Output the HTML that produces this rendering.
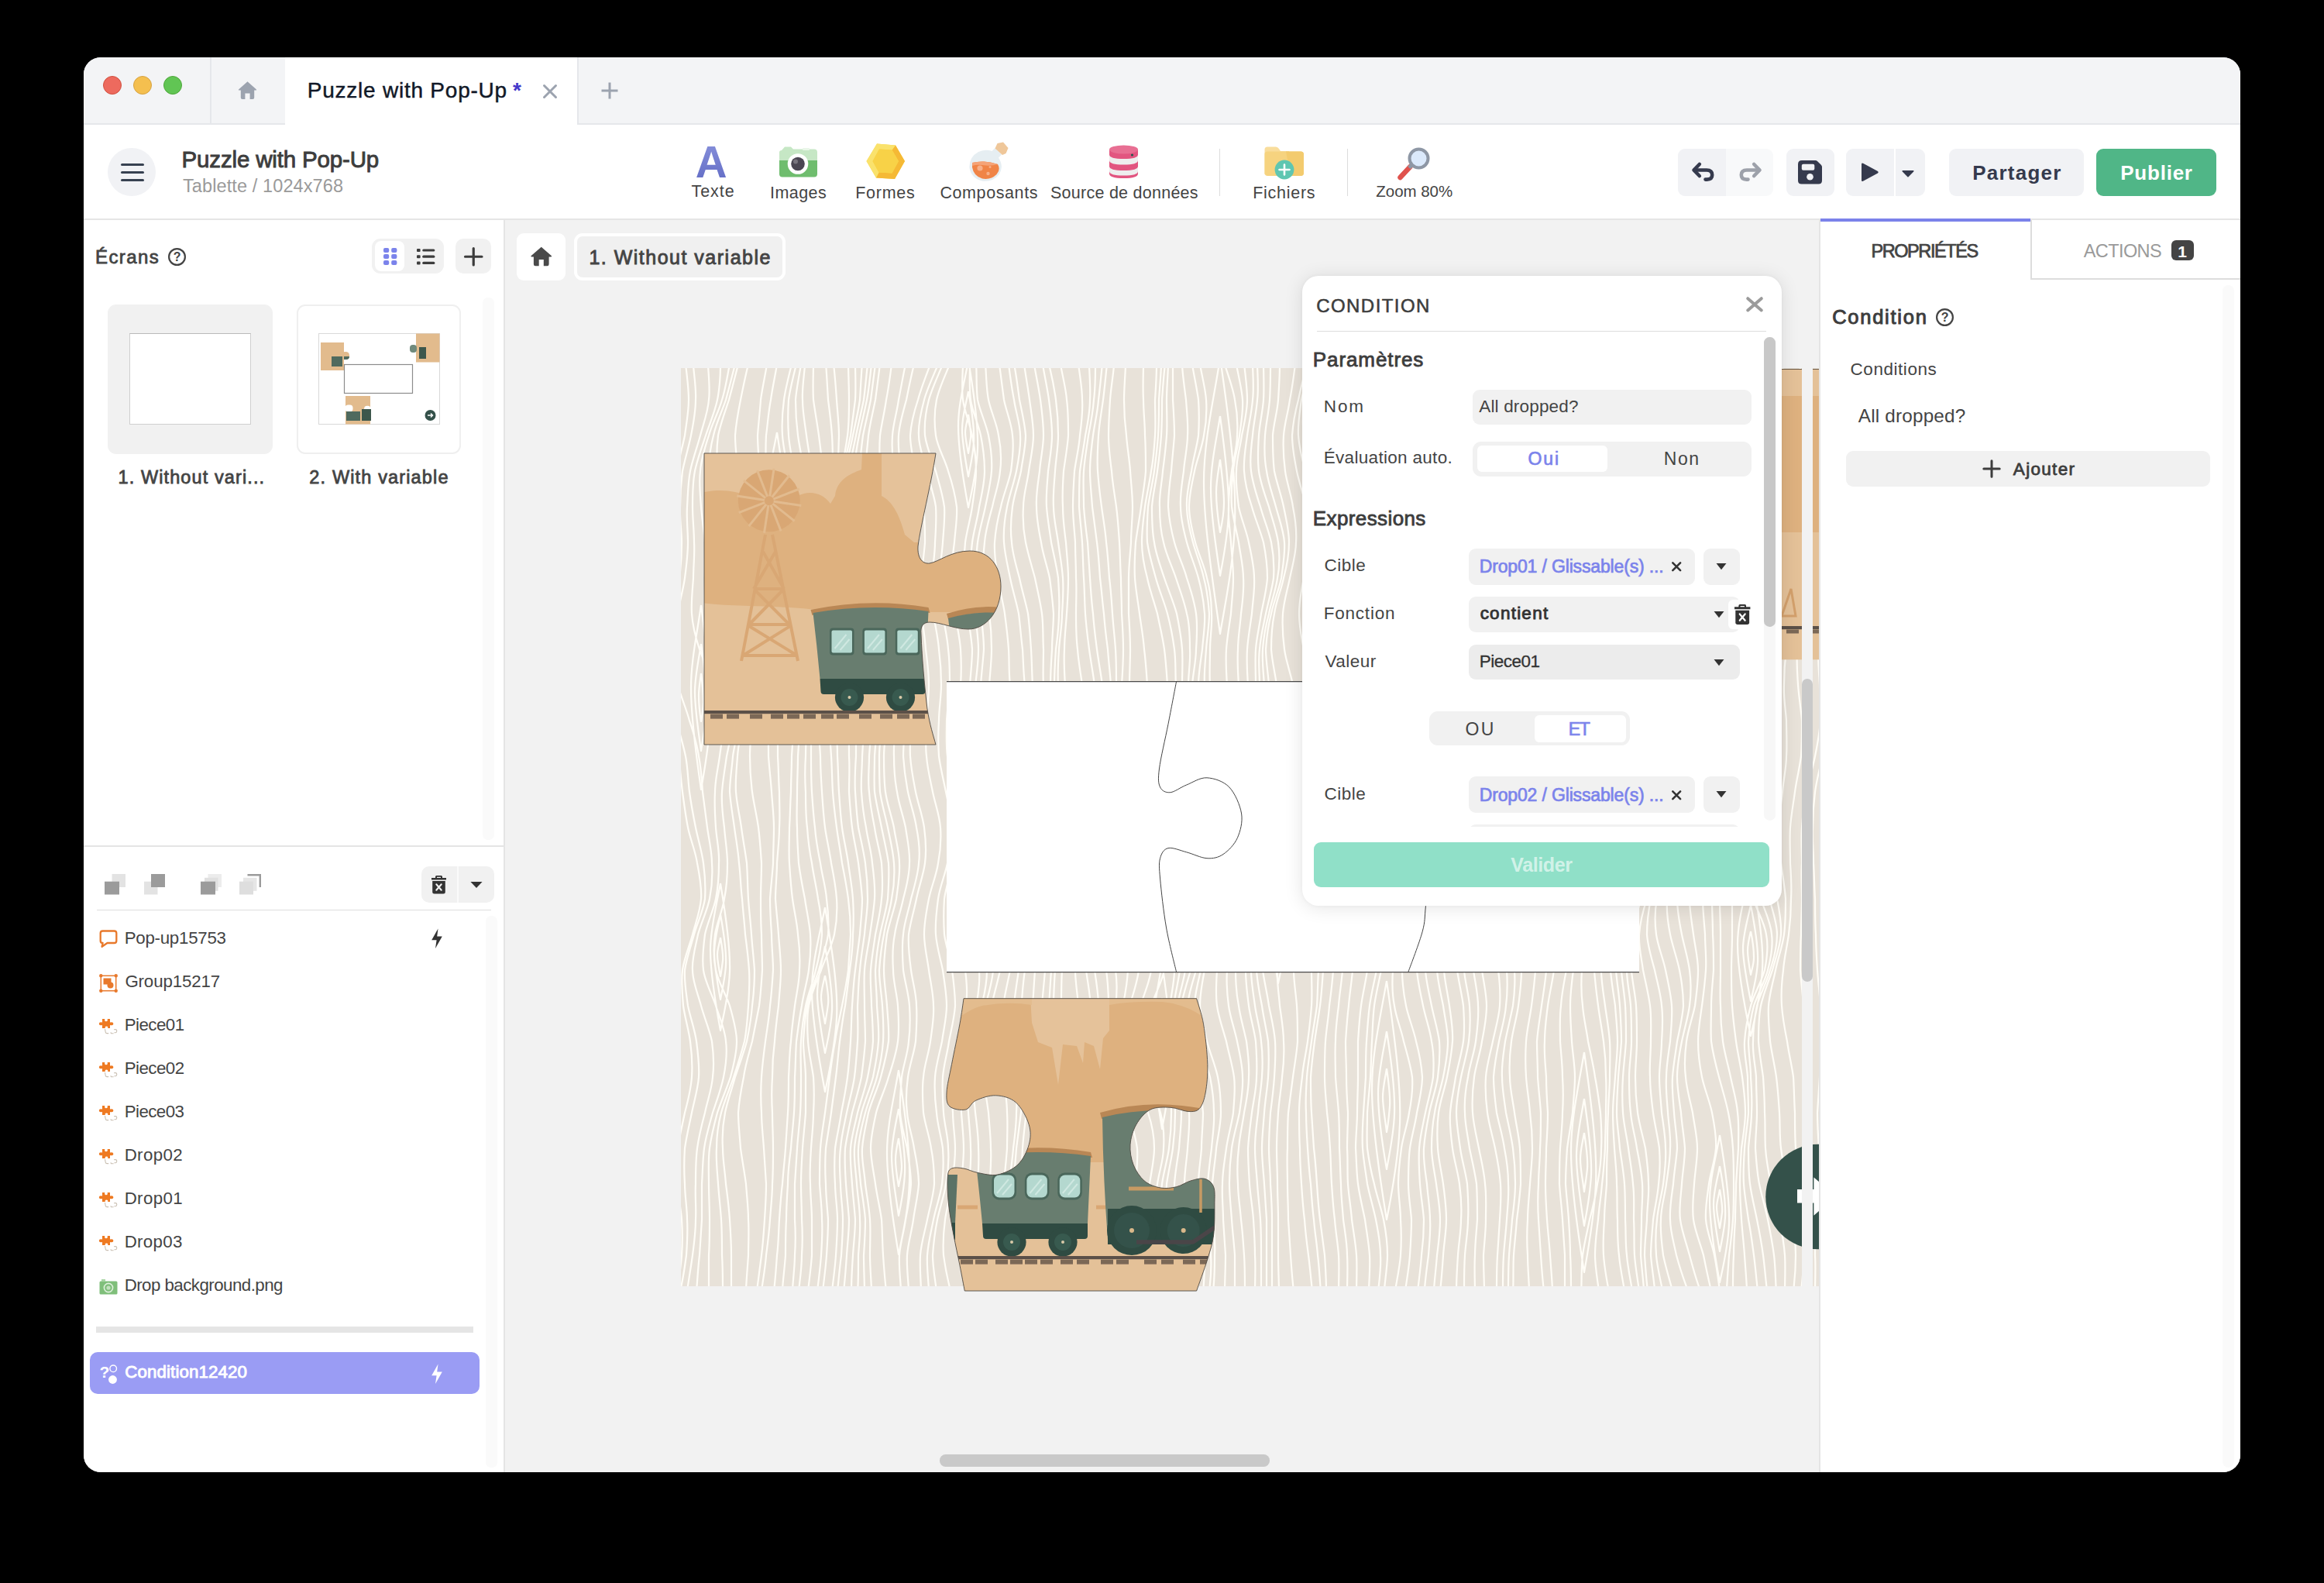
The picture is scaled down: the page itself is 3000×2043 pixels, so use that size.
<!DOCTYPE html>
<html lang="fr"><head><meta charset="utf-8"><title>Puzzle with Pop-Up</title>
<style>
html,body{margin:0;padding:0;background:#000;}
body{width:3000px;height:2043px;position:relative;overflow:hidden;font-family:"Liberation Sans",sans-serif;}
.a{position:absolute;box-sizing:border-box;}
.t{position:absolute;white-space:nowrap;line-height:1;}
svg{display:block;overflow:visible}
#win{position:absolute;left:0;top:0;width:3000px;height:2043px;clip-path:inset(74px 108px 143px 108px round 22px);background:#fff;}
</style></head><body><div id="win">
<div class="a" style="left:108px;top:74px;width:2784px;height:87px;background:#f3f4f6;"></div>
<div class="a" style="left:108px;top:159px;width:2784px;height:2px;background:#e5e7eb;"></div>
<div class="a" style="left:271px;top:74px;width:2px;height:87px;background:#e5e7eb;"></div>
<div class="a" style="left:368px;top:74px;width:379px;height:87px;background:#e5e7eb;"></div>
<div class="a" style="left:368px;top:74px;width:377px;height:87px;background:#fff;"></div>
<div class="a" style="left:133px;top:98.4px;width:24px;height:24px;background:#ed6a5e;border-radius:12px;border:1px solid #d1503f;"></div>
<div class="a" style="left:171.6px;top:98.4px;width:24px;height:24px;background:#f4bf4f;border-radius:12px;border:1px solid #d6a243;"></div>
<div class="a" style="left:210.6px;top:98.4px;width:24px;height:24px;background:#61c554;border-radius:12px;border:1px solid #4fa73b;"></div>
<svg class="a" style="left:307px;top:104px;" width="25" height="25" viewBox="0 0 25 25"><path d="M12.5 1.2 L24 11.5 Q24.6 12.3 23.6 12.6 H21.2 V22 Q21.2 24 19.2 24 H15.6 V16.4 H9.4 V24 H5.8 Q3.8 24 3.8 22 V12.6 H1.4 Q0.4 12.3 1 11.5 Z" fill="#9ca3af"/></svg>
<span class="t" style="top:102.80px;font-size:28px;color:#111827;-webkit-text-stroke:0.45px #111827;letter-spacing:0.772px;left:396.70px;">Puzzle with Pop-Up</span>
<span class="t" style="top:103.30px;font-size:28px;color:#4338ca;font-weight:700;left:661.92px;">*</span>
<svg class="a" style="left:701px;top:109px;" width="18" height="18" viewBox="0 0 18 18"><path d="M1.5 1.5 L16.5 16.5 M16.5 1.5 L1.5 16.5" stroke="#9ca3af" stroke-width="3" stroke-linecap="round" fill="none"/></svg>
<svg class="a" style="left:776px;top:105.5px;" width="22" height="22" viewBox="0 0 22 22"><path d="M11 0.5 V21.5 M0.5 11 H21.5" stroke="#9ca3af" stroke-width="3" fill="none"/></svg>
<div class="a" style="left:108px;top:161px;width:2784px;height:121px;background:#fff;"></div>
<div class="a" style="left:108px;top:282px;width:2784px;height:2px;background:#e5e5e5;"></div>
<div class="a" style="left:139px;top:191px;width:62px;height:62px;background:#f1f2f5;border-radius:31px;"></div>
<div class="a" style="left:155.5px;top:210.8px;width:30px;height:3px;background:#374151;border-radius:1.5px;"></div>
<div class="a" style="left:155.5px;top:220.9px;width:30px;height:3px;background:#374151;border-radius:1.5px;"></div>
<div class="a" style="left:155.5px;top:231px;width:30px;height:3px;background:#374151;border-radius:1.5px;"></div>
<span class="t" style="top:191.43px;font-size:29.5px;color:#3d3d3d;-webkit-text-stroke:0.9px #3d3d3d;letter-spacing:-0.163px;left:234.58px;">Puzzle with Pop-Up</span>
<span class="t" style="top:228.71px;font-size:23.5px;color:#9a9a9a;letter-spacing:0.106px;left:235.97px;">Tablette / 1024x768</span>
<svg class="a" style="left:890px;top:180px" width="60" height="56" viewBox="0 0 60 56"><defs><linearGradient id="ga" x1="0" y1="0" x2="0" y2="1"><stop offset="0" stop-color="#8a93dd"/><stop offset="1" stop-color="#5f69c3"/></linearGradient></defs><text x="28.2" y="48.5" text-anchor="middle" font-family="Liberation Sans,sans-serif" font-weight="700" font-size="56.5" fill="url(#ga)">A</text></svg>
<span class="t" style="top:236.80px;font-size:21.5px;color:#444;letter-spacing:0.937px;left:892.52px;">Texte</span>
<svg class="a" style="left:1004px;top:186px;" width="54" height="46" viewBox="0 0 54 46"><path d="M5 8 L9 3.5 H17 L20 6.5 H47 Q51 6.5 51 10.5 V22 H2 V10.5 Q2 8 5 8 Z" fill="#c6e7c5"/><rect x="32" y="5" width="9" height="3" rx="1" fill="#e9f6e8"/><path d="M2 21 H51 V38.5 Q51 42.5 47 42.5 H6 Q2 42.5 2 38.5 Z" fill="#6fbd6e"/><circle cx="26" cy="25.5" r="13.3" fill="#fff"/><circle cx="26" cy="25.5" r="8.8" fill="#4a4652"/><circle cx="23" cy="22.5" r="3" fill="#77737d"/></svg>
<span class="t" style="top:239.10px;font-size:21.5px;color:#444;letter-spacing:0.449px;left:994.02px;">Images</span>
<svg class="a" style="left:1116px;top:183px;" width="54" height="52" viewBox="0 0 54 52"><path d="M16 2.5 L40 4.5 L52 25 L39 48 L15 46.5 L2.5 25 Z" fill="#f9d549"/><path d="M40 4.5 L52 25 L39 48 L15 46.5 L18.5 39.5 L35.5 40.5 L44 25 L35.5 10.5 Z" fill="#f5b935"/><path d="M16 2.5 L40 4.5 L35.5 10.5 L19 9.5 L10.5 25 L18.5 39.5 L15 46.5 L2.5 25 Z" fill="#fae26c"/><path d="M19 9.5 L35.5 10.5 L44 25 L35.5 40.5 L18.5 39.5 L10.5 25 Z" fill="#f8d247"/></svg>
<span class="t" style="top:239.10px;font-size:21.5px;color:#444;letter-spacing:0.733px;left:1104.24px;">Formes</span>
<svg class="a" style="left:1248px;top:182px;" width="56" height="54" viewBox="0 0 56 54"><path d="M36.5 9 L45 17.5 L41 21.5 Q48.5 33 41.5 43.5 Q33 53.5 19.5 51.5 Q6 48 3.5 35 Q2.5 21 15 14 Q24 10 32.5 13 Z" fill="#e6eef2"/><path d="M7 28 Q22 24 40 30 Q44 37 38.5 43 Q31 50.5 20 48.5 Q9 45.5 7 34 Z" fill="#f08447"/><path d="M7 28 Q22 24 40 30 Q30 33 20 31 Q12 30 7.3 32 Z" fill="#f5a377"/><circle cx="17" cy="35" r="3.6" fill="#f6b08a"/><circle cx="27.5" cy="42" r="2.2" fill="#f6b08a"/><circle cx="30" cy="33.5" r="1.5" fill="#f6b08a"/><path d="M39.5 3 L47 1.5 L53.5 9 L50.5 16 L46 18 L36.5 9.5 Z" fill="#efc79a"/></svg>
<span class="t" style="top:239.10px;font-size:21.5px;color:#444;letter-spacing:0.596px;left:1213.41px;">Composants</span>
<svg class="a" style="left:1430px;top:185px;" width="42" height="48" viewBox="0 0 42 48"><path d="M2 8 V39 Q2 45 20.5 45 Q39 45 39 39 V8 Z" fill="#e25580"/><path d="M2 14.5 Q2 20 20.5 20 Q39 20 39 14.5 V22 Q39 27.5 20.5 27.5 Q2 27.5 2 22 Z" fill="#eeeeee"/><path d="M2 29.5 Q2 35 20.5 35 Q39 35 39 29.5 V36 Q39 41.5 20.5 41.5 Q2 41.5 2 36 Z" fill="#eeeeee"/><ellipse cx="20.5" cy="8" rx="18.5" ry="5.5" fill="#e86f93"/><circle cx="31.5" cy="15" r="1.6" fill="#1d5b4c"/></svg>
<span class="t" style="top:239.10px;font-size:21.5px;color:#444;letter-spacing:0.254px;left:1356.02px;">Source de données</span>
<div class="a" style="left:1573.7px;top:192px;width:1.5px;height:61px;background:#dcdcdc;"></div>
<svg class="a" style="left:1630px;top:187px;" width="56" height="47" viewBox="0 0 56 47"><path d="M2.5 6 Q2.5 2.5 6 2.5 H17 Q19.5 2.5 21 5 L23 8 H34 V38 H2.5 Z" fill="#f9dd9c"/><path d="M2.5 12 Q2.5 8.5 6 8.5 H49 Q53 8.5 53 12.5 V36 Q53 40 49 40 H6.5 Q2.5 40 2.5 36 Z" fill="#f6d37f"/><path d="M30 8.5 H49 Q53 8.5 53 12.5 V36 Q53 40 49 40 H36 Z" fill="#f3cb6e"/><circle cx="28" cy="32" r="12.4" fill="#5fc6b1"/><path d="M28 25.5 V38.5 M21.5 32 H34.5" stroke="#fff" stroke-width="2.6" stroke-linecap="round"/></svg>
<span class="t" style="top:239.10px;font-size:21.5px;color:#444;letter-spacing:0.725px;left:1617.24px;">Fichiers</span>
<div class="a" style="left:1738.7px;top:192px;width:1.5px;height:61px;background:#dcdcdc;"></div>
<svg class="a" style="left:1802px;top:188px;" width="48" height="47" viewBox="0 0 48 47"><path d="M5.5 41 L18.5 27" stroke="#e0524d" stroke-width="6.5" stroke-linecap="round"/><path d="M17 28.5 L20 25.5" stroke="#8e97a5" stroke-width="5"/><circle cx="29.5" cy="16.5" r="12" fill="#dbe9fb" stroke="#8e97a5" stroke-width="4"/></svg>
<span class="t" style="top:236.65px;font-size:20.5px;color:#444;letter-spacing:-0.037px;left:1776.35px;">Zoom 80%</span>
<div class="a" style="left:2166.3px;top:192px;width:123.1px;height:60.6px;background:#f8f9fa;border-radius:9px;"></div>
<div class="a" style="left:2166.3px;top:192px;width:61.7px;height:60.6px;background:#f1f2f5;border-radius:9px 0 0 9px;"></div>
<svg class="a" style="left:2181px;top:206px;" width="36" height="31" viewBox="0 0 36 31"><path d="M12.8 6 L5.5 13.5 L12.8 21" fill="none" stroke="#353a4d" stroke-width="4.6" stroke-linecap="round" stroke-linejoin="round"/><path d="M6.5 13.5 H22 Q29.2 13.5 29.2 19.8 Q29.2 25.6 22.5 25.6 H20.5" fill="none" stroke="#353a4d" stroke-width="4.6" stroke-linecap="round"/></svg>
<svg class="a" style="left:2241px;top:206px;" width="36" height="31" viewBox="0 0 36 31"><path d="M23.2 6 L30.5 13.5 L23.2 21" fill="none" stroke="#9da1aa" stroke-width="4.6" stroke-linecap="round" stroke-linejoin="round"/><path d="M29.5 13.5 H14 Q6.8 13.5 6.8 19.8 Q6.8 25.6 13.5 25.6 H15.5" fill="none" stroke="#9da1aa" stroke-width="4.6" stroke-linecap="round"/></svg>
<div class="a" style="left:2306px;top:192px;width:62px;height:60.6px;background:#f1f2f5;border-radius:9px;"></div>
<svg class="a" style="left:2321px;top:207px;" width="32" height="31" viewBox="0 0 32 31"><path d="M5 0 H22.5 Q24 0 25.2 1.2 L29.8 5.8 Q31 7 31 8.5 V26 Q31 30.6 26.4 30.6 H4.6 Q0 30.6 0 26 V5 Q0 0 5 0 Z" fill="#353a4d"/><rect x="4.8" y="4.8" width="16.5" height="8" rx="2" fill="#f1f2f5"/><circle cx="15.5" cy="21.3" r="4.3" fill="#f1f2f5"/></svg>
<div class="a" style="left:2383px;top:192px;width:101.6px;height:60.6px;background:#f1f2f5;border-radius:9px;"></div>
<div class="a" style="left:2444.5px;top:192px;width:2px;height:60.6px;background:#fff;"></div>
<svg class="a" style="left:2402px;top:209px;" width="25" height="27" viewBox="0 0 25 27"><path d="M3 1.8 Q1 0.6 1 3 V23.5 Q1 25.9 3 24.7 L22 14.6 Q23.6 13.3 22 12 Z" fill="#353a4d"/></svg>
<svg class="a" style="left:2455px;top:220px;" width="16" height="9" viewBox="0 0 16 9"><path d="M1 0 H15 Q16 0.5 15.2 1.4 L8.6 8.2 Q8 8.7 7.4 8.2 L0.8 1.4 Q0 0.5 1 0 Z" fill="#353a4d"/></svg>
<div class="a" style="left:2516.4px;top:192px;width:173.8px;height:60.6px;background:#f1f2f5;border-radius:9px;"></div>
<span class="t" style="top:209.99px;font-size:26px;color:#353a4d;font-weight:700;letter-spacing:1.233px;left:2546.26px;">Partager</span>
<div class="a" style="left:2706px;top:192px;width:155px;height:60.6px;background:#50b687;border-radius:9px;"></div>
<span class="t" style="top:209.99px;font-size:26px;color:#fff;font-weight:700;letter-spacing:0.765px;left:2737.26px;">Publier</span>
<div class="a" style="left:108px;top:284px;width:542px;height:1616px;background:#fff;"></div>
<div class="a" style="left:650px;top:284px;width:2px;height:1616px;background:#e5e5e5;"></div>
<span class="t" style="top:319.88px;font-size:24px;color:#444;-webkit-text-stroke:0.8px #444;letter-spacing:1.387px;left:123.03px;">Écrans</span>
<svg class="a" style="left:216px;top:319px;" width="25" height="25" viewBox="0 0 25 25"><circle cx="12.5" cy="12.5" r="10.4" fill="none" stroke="#444" stroke-width="2.2"/></svg>
<span class="t" style="top:324.46px;font-size:16px;color:#444;font-weight:700;left:228.59px;transform:translateX(-50%);">?</span>
<div class="a" style="left:480.3px;top:308.4px;width:92.3px;height:45.1px;background:#f1f1f1;border-radius:11px;"></div>
<div class="a" style="left:484.4px;top:311px;width:37.6px;height:39.4px;background:#fff;border-radius:8px;"></div>
<svg class="a" style="left:494.7px;top:319.8px;" width="17.5" height="22.2" viewBox="0 0 17.5 22.2"><rect x="0" y="0" width="7.2" height="6" rx="2" fill="#7b83eb"/><rect x="10.2" y="0" width="7.2" height="6" rx="2" fill="#7b83eb"/><rect x="0" y="8" width="7.2" height="6" rx="2" fill="#7b83eb"/><rect x="10.2" y="8" width="7.2" height="6" rx="2" fill="#7b83eb"/><rect x="0" y="16" width="7.2" height="6" rx="2" fill="#7b83eb"/><rect x="10.2" y="16" width="7.2" height="6" rx="2" fill="#7b83eb"/></svg>
<svg class="a" style="left:537.6px;top:320.6px;" width="23.4" height="20.4" viewBox="0 0 23.4 20.4"><rect x="0" y="0" width="4.6" height="4" rx="1" fill="#3d3d3d"/><rect x="7.2" y="0.4" width="16.2" height="3.2" rx="1.6" fill="#3d3d3d"/><rect x="0" y="8.2" width="4.6" height="4" rx="1" fill="#3d3d3d"/><rect x="7.2" y="8.6" width="16.2" height="3.2" rx="1.6" fill="#3d3d3d"/><rect x="0" y="16.4" width="4.6" height="4" rx="1" fill="#3d3d3d"/><rect x="7.2" y="16.8" width="16.2" height="3.2" rx="1.6" fill="#3d3d3d"/></svg>
<div class="a" style="left:588px;top:308.4px;width:45.8px;height:45.1px;background:#f1f1f1;border-radius:10px;"></div>
<svg class="a" style="left:600px;top:320px;" width="22.5" height="22.5" viewBox="0 0 22.5 22.5"><path d="M11.25 0.5 V22 M0.5 11.25 H22" stroke="#3d3d3d" stroke-width="3.2" stroke-linecap="round"/></svg>
<div class="a" style="left:623px;top:384px;width:14.5px;height:699.5px;background:#fafafa;border-radius:7px;"></div>
<div class="a" style="left:139.4px;top:393px;width:212.4px;height:192.6px;background:#f1f1f1;border-radius:11px;"></div>
<div class="a" style="left:167.4px;top:430.2px;width:156.4px;height:117.4px;background:#fff;border:1px solid #cfcfcf;border-top-color:#b9b9b9;"></div>
<span class="t" style="top:604.51px;font-size:23.5px;color:#444;-webkit-text-stroke:0.8px #444;letter-spacing:1.109px;left:247.33px;transform:translateX(-50%);">1. Without vari...</span>
<div class="a" style="left:383.3px;top:393px;width:211.7px;height:192.6px;background:#fff;border-radius:11px;border:2px solid #efefef;"></div>
<svg class="a" style="left:411px;top:430.2px;" width="157" height="117.8" viewBox="0 0 157 117.8"><rect x="0.5" y="0.5" width="156" height="117" fill="#fff" stroke="#d9d9d9"/><rect x="3" y="12" width="30" height="36" fill="#e2bb8d"/><rect x="30" y="24" width="10" height="10" rx="4.500" fill="#e2bb8d"/><path d="M33 30 H40 Q40 34 36 34 H33 Z" fill="#4f6a5e"/><rect x="17" y="30" width="14" height="13" fill="#4f6a5e"/><rect x="126" y="0.5" width="30.5" height="37" fill="#e2bb8d"/><rect x="118" y="15" width="9" height="10" rx="4" fill="#6f8a7c"/><rect x="130" y="18" width="9" height="15" fill="#3d574c"/><rect x="33.500" y="40.5" width="88" height="37" fill="#fff" stroke="#8c8c8c" stroke-width="1.2"/><rect x="35" y="81" width="32" height="36.500" fill="#e2bb8d"/><rect x="34.500" y="92.500" width="10" height="9" rx="4" fill="#fff"/><rect x="59" y="93.800" width="8.500" height="9" rx="4" fill="#fff"/><rect x="36" y="101" width="18" height="12" fill="#4f6a5e"/><rect x="56" y="98" width="12" height="15" fill="#3d574c"/><circle cx="144.500" cy="106" r="7" fill="#34514a"/><path d="M141 106 H147 M145 103.500 L147.500 106 L145 108.500" stroke="#fff" stroke-width="1.4" fill="none"/></svg>
<span class="t" style="top:604.51px;font-size:23.5px;color:#444;-webkit-text-stroke:0.8px #444;letter-spacing:1.145px;left:489.50px;transform:translateX(-50%);">2. With variable</span>
<div class="a" style="left:108px;top:1091px;width:542px;height:2px;background:#e5e5e5;"></div>
<svg class="a" style="left:134.7px;top:1128px;" width="27.3" height="27" viewBox="0 0 27.3 27"><rect x="9.500" y="0" width="17.500" height="17" fill="#e3e3e3"/><rect x="0" y="9.700" width="19" height="16.800" fill="#9b9b9b"/></svg>
<svg class="a" style="left:186px;top:1128px;" width="27.5" height="27" viewBox="0 0 27.5 27"><rect x="0" y="9.700" width="17.500" height="16.800" fill="#e3e3e3"/><rect x="9" y="0" width="18" height="17" fill="#9b9b9b"/></svg>
<svg class="a" style="left:259px;top:1128px;" width="27.5" height="27" viewBox="0 0 27.5 27"><rect x="9.500" y="0" width="17.500" height="17" fill="#ececec"/><rect x="5" y="4.800" width="17.500" height="17" fill="#e0e0e0"/><rect x="0" y="9.700" width="19" height="16.800" fill="#9b9b9b"/></svg>
<svg class="a" style="left:309px;top:1128px;" width="28.5" height="27" viewBox="0 0 28.5 27"><path d="M10.500 1.200 H26.800 V17" fill="none" stroke="#9b9b9b" stroke-width="2.400"/><rect x="5" y="4.800" width="17.500" height="17" fill="#e6e6e6"/><rect x="0" y="9.700" width="18" height="16.800" fill="#dedede"/></svg>
<div class="a" style="left:543.9px;top:1117.8px;width:93.9px;height:47px;background:#f1f1f1;border-radius:10px;"></div>
<div class="a" style="left:589.5px;top:1117.8px;width:2px;height:47px;background:#fafafa;"></div>
<svg class="a" style="left:557px;top:1130px;" width="19" height="23.5" viewBox="0 0 19 23.5"><g transform="scale(1.000,1.000)"><path d="M6.500 0 H12.500 Q14 0 14 1.500 V3 H19 V5.600 H0 V3 H5 V1.500 Q5 0 6.500 0 Z M7 1.700 V3 H12 V1.700 Z" fill="#333" fill-rule="evenodd"/><path d="M1.200 7 H17.800 V21 Q17.800 23.500 15.300 23.500 H3.700 Q1.200 23.500 1.200 21 Z" fill="#333"/><path d="M6.300 11.300 L12.700 18.700 M12.700 11.300 L6.300 18.700" stroke="#f1f1f1" stroke-width="2.100" stroke-linecap="round"/></g></svg>
<svg class="a" style="left:606.7px;top:1137.8px;" width="16" height="8.2" viewBox="0 0 16 8.2"><path d="M0.400 0 H15.600 L8 8 Z" fill="#333"/></svg>
<div class="a" style="left:124.5px;top:1173.5px;width:509.5px;height:1.2px;background:#dddddd;"></div>
<div class="a" style="left:626.7px;top:1182px;width:15.3px;height:712px;background:#fafafa;border-radius:7px;"></div>
<span class="t" style="top:1200.12px;font-size:22.3px;color:#444;letter-spacing:-0.260px;left:160.67px;">Pop-up15753</span>
<svg class="a" style="left:127.5px;top:1200px;" width="24" height="24" viewBox="0 0 24 24"><path d="M4.500 1.500 H19.500 Q22.300 1.500 22.300 4.300 V14.200 Q22.300 17 19.500 17 H10.500 L3.600 21.800 L4.600 17 Q1.700 17 1.700 14.200 V4.300 Q1.700 1.500 4.500 1.500 Z" fill="none" stroke="#e8792c" stroke-width="2.300" stroke-linejoin="round"/></svg>
<svg class="a" style="left:555.5px;top:1198px;" width="16" height="27" viewBox="0 0 16 27"><path d="M9.5 0.5 L1.2 15.2 H7.6 L6 26 L14.8 10.6 H8.2 Z" fill="#333"/></svg>
<span class="t" style="top:1256.12px;font-size:22.3px;color:#444;letter-spacing:-0.138px;left:161.38px;">Group15217</span>
<svg class="a" style="left:127.5px;top:1257px;" width="24" height="24" viewBox="0 0 24 24"><rect x="2.300" y="2.300" width="19.400" height="19.400" fill="none" stroke="#e8792c" stroke-width="1.500"/><rect x="5.500" y="5.500" width="10" height="8" fill="#e8792c"/><circle cx="14.500" cy="14.500" r="4" fill="#e8792c"/><circle cx="2.3" cy="2.3" r="2.200" fill="#e8792c"/><circle cx="2.3" cy="21.7" r="2.200" fill="#e8792c"/><circle cx="21.7" cy="2.3" r="2.200" fill="#e8792c"/><circle cx="21.7" cy="21.7" r="2.200" fill="#e8792c"/></svg>
<span class="t" style="top:1312.12px;font-size:22.3px;color:#444;letter-spacing:-0.527px;left:160.67px;">Piece01</span>
<svg class="a" style="left:127px;top:1314px;" width="25" height="25" viewBox="0 0 25 25"><path d="M5 1 H8.3 Q7.6 4.2 10 4.2 Q12.400 4.200 11.700 1 H15 V5.600 Q19.400 4.600 19.400 7.300 Q19.400 10 15 9 V13 H12.200 Q12.700 10.600 10.500 10.600 Q8.300 10.600 8.800 13 H5 V9 Q0.800 10 0.800 7.300 Q0.800 4.600 5 5.600 Z" fill="#ee7a22"/><path d="M8.500 14.200 L9.300 18.400 Q9.500 19.600 11 19.600 H13.200 M15.800 18.400 L16.600 19.700 H19.600 M20.200 14.600 H22.400 Q23.800 14.800 23.800 16.400 Q23.800 18.400 22 18.700 H20.400" fill="none" stroke="#c9bfb2" stroke-width="1.100"/></svg>
<span class="t" style="top:1368.12px;font-size:22.3px;color:#444;letter-spacing:-0.521px;left:160.67px;">Piece02</span>
<svg class="a" style="left:127px;top:1370px;" width="25" height="25" viewBox="0 0 25 25"><path d="M5 1 H8.3 Q7.6 4.2 10 4.2 Q12.400 4.200 11.700 1 H15 V5.600 Q19.400 4.600 19.400 7.300 Q19.400 10 15 9 V13 H12.200 Q12.700 10.600 10.500 10.600 Q8.300 10.600 8.800 13 H5 V9 Q0.800 10 0.800 7.300 Q0.800 4.600 5 5.600 Z" fill="#ee7a22"/><path d="M8.500 14.200 L9.300 18.400 Q9.500 19.600 11 19.600 H13.200 M15.800 18.400 L16.600 19.700 H19.600 M20.200 14.600 H22.400 Q23.800 14.800 23.800 16.400 Q23.800 18.400 22 18.700 H20.400" fill="none" stroke="#c9bfb2" stroke-width="1.100"/></svg>
<span class="t" style="top:1424.12px;font-size:22.3px;color:#444;letter-spacing:-0.545px;left:160.67px;">Piece03</span>
<svg class="a" style="left:127px;top:1426px;" width="25" height="25" viewBox="0 0 25 25"><path d="M5 1 H8.3 Q7.6 4.2 10 4.2 Q12.400 4.200 11.700 1 H15 V5.600 Q19.400 4.600 19.400 7.300 Q19.400 10 15 9 V13 H12.200 Q12.700 10.600 10.500 10.600 Q8.300 10.600 8.800 13 H5 V9 Q0.800 10 0.800 7.300 Q0.800 4.600 5 5.600 Z" fill="#ee7a22"/><path d="M8.500 14.200 L9.300 18.400 Q9.500 19.600 11 19.600 H13.200 M15.800 18.400 L16.600 19.700 H19.600 M20.200 14.600 H22.400 Q23.800 14.800 23.800 16.400 Q23.800 18.400 22 18.700 H20.400" fill="none" stroke="#c9bfb2" stroke-width="1.100"/></svg>
<span class="t" style="top:1480.12px;font-size:22.3px;color:#444;letter-spacing:0.362px;left:160.67px;">Drop02</span>
<svg class="a" style="left:127px;top:1482px;" width="25" height="25" viewBox="0 0 25 25"><path d="M5 1 H8.3 Q7.6 4.2 10 4.2 Q12.400 4.200 11.700 1 H15 V5.600 Q19.400 4.600 19.400 7.300 Q19.400 10 15 9 V13 H12.200 Q12.700 10.600 10.500 10.600 Q8.300 10.600 8.800 13 H5 V9 Q0.800 10 0.800 7.300 Q0.800 4.600 5 5.600 Z" fill="#ee7a22"/><path d="M8.500 14.200 L9.300 18.400 Q9.500 19.600 11 19.600 H13.200 M15.800 18.400 L16.600 19.700 H19.600 M20.200 14.600 H22.400 Q23.800 14.800 23.800 16.400 Q23.800 18.400 22 18.700 H20.400" fill="none" stroke="#c9bfb2" stroke-width="1.100"/></svg>
<span class="t" style="top:1536.12px;font-size:22.3px;color:#444;letter-spacing:0.356px;left:160.67px;">Drop01</span>
<svg class="a" style="left:127px;top:1538px;" width="25" height="25" viewBox="0 0 25 25"><path d="M5 1 H8.3 Q7.6 4.2 10 4.2 Q12.400 4.200 11.700 1 H15 V5.600 Q19.400 4.600 19.400 7.300 Q19.400 10 15 9 V13 H12.200 Q12.700 10.600 10.500 10.600 Q8.300 10.600 8.800 13 H5 V9 Q0.800 10 0.800 7.300 Q0.800 4.600 5 5.600 Z" fill="#ee7a22"/><path d="M8.500 14.200 L9.300 18.400 Q9.500 19.600 11 19.600 H13.200 M15.800 18.400 L16.600 19.700 H19.600 M20.200 14.600 H22.400 Q23.800 14.800 23.800 16.400 Q23.800 18.400 22 18.700 H20.400" fill="none" stroke="#c9bfb2" stroke-width="1.100"/></svg>
<span class="t" style="top:1592.12px;font-size:22.3px;color:#444;letter-spacing:0.334px;left:160.67px;">Drop03</span>
<svg class="a" style="left:127px;top:1594px;" width="25" height="25" viewBox="0 0 25 25"><path d="M5 1 H8.3 Q7.6 4.2 10 4.2 Q12.400 4.200 11.700 1 H15 V5.600 Q19.400 4.600 19.400 7.300 Q19.400 10 15 9 V13 H12.200 Q12.700 10.600 10.500 10.600 Q8.300 10.600 8.800 13 H5 V9 Q0.800 10 0.800 7.300 Q0.800 4.600 5 5.600 Z" fill="#ee7a22"/><path d="M8.500 14.200 L9.300 18.400 Q9.500 19.600 11 19.600 H13.200 M15.800 18.400 L16.600 19.700 H19.600 M20.200 14.600 H22.400 Q23.800 14.800 23.800 16.400 Q23.800 18.400 22 18.700 H20.400" fill="none" stroke="#c9bfb2" stroke-width="1.100"/></svg>
<span class="t" style="top:1648.12px;font-size:22.3px;color:#444;letter-spacing:-0.538px;left:160.67px;">Drop background.png</span>
<svg class="a" style="left:127.5px;top:1650px;" width="24" height="22" viewBox="0 0 24 22"><rect x="0.500" y="3.500" width="23" height="17" rx="1.500" fill="#7fbf7a"/><rect x="3" y="1" width="5" height="3" fill="#a9d6a5"/><circle cx="12" cy="12" r="5.600" fill="none" stroke="#dff0dd" stroke-width="1.600"/><circle cx="12" cy="12" r="2.600" fill="#dff0dd" opacity="0.7"/></svg>
<div class="a" style="left:124.2px;top:1712px;width:486.6px;height:7.6px;background:#e5e5e5;"></div>
<div class="a" style="left:116px;top:1745.4px;width:503px;height:53.4px;background:#9a9cf4;border-radius:10px;"></div>
<span class="t" style="top:1760.12px;font-size:22.3px;color:#fff;-webkit-text-stroke:0.9px #fff;letter-spacing:0.099px;left:161.37px;">Condition12420</span>
<svg class="a" style="left:128px;top:1760px;" width="25" height="28" viewBox="0 0 25 28"><circle cx="18.200" cy="6.300" r="4.300" fill="none" stroke="#fff" stroke-width="1.400"/><circle cx="17.500" cy="20.500" r="5.400" fill="#fff"/></svg>
<span class="t" style="top:1759.72px;font-size:21px;color:#fff;font-weight:700;left:128.54px;">?</span>
<svg class="a" style="left:555.5px;top:1760px;" width="16" height="27" viewBox="0 0 16 27"><path d="M9.5 0.5 L1.2 15.2 H7.6 L6 26 L14.8 10.6 H8.2 Z" fill="#fff"/></svg>
<div class="a" style="left:652px;top:284px;width:1698px;height:1616px;background:#f2f2f2;"></div>
<svg class="a" style="left:652px;top:284px;overflow:hidden" width="1698" height="1616" viewBox="652 284 1698 1616"><rect x="879" y="475" width="1471" height="1185" fill="#e8e2d9"/><clipPath id="cw"><rect x="879" y="475" width="1471" height="1185"/></clipPath><path clip-path="url(#cw)" d="M885,470C886,478 889,501 889,516C889,531 886,547 884,562C881,577 876,593 874,608C872,623 871,639 871,654C871,669 874,685 874,700C875,715 875,731 873,746C872,761 867,777 863,792C860,807 854,823 853,838C851,853 851,869 853,884C855,899 861,915 865,930C868,945 873,961 876,976C878,991 879,1007 881,1022C883,1037 885,1053 888,1068C891,1083 898,1099 900,1114C903,1129 906,1145 905,1160C904,1175 898,1191 894,1206C890,1221 883,1237 881,1252C879,1267 881,1283 882,1298C884,1313 889,1329 891,1344C893,1359 894,1375 893,1390C892,1405 888,1421 884,1436C881,1451 877,1467 875,1482C873,1497 874,1513 874,1528C875,1543 879,1559 880,1574C881,1589 881,1605 880,1620C879,1635 875,1658 874,1666M895,470C895,478 899,501 898,516C898,531 895,547 892,562C889,577 884,593 881,608C879,623 878,639 878,654C877,669 880,685 880,700C880,715 879,731 877,746C875,761 870,777 866,792C863,807 858,823 857,838C856,853 856,869 859,884C862,899 868,915 873,930C877,945 882,961 885,976C888,991 888,1007 890,1022C892,1037 895,1053 898,1068C901,1083 906,1099 908,1114C910,1129 911,1145 910,1160C908,1175 900,1191 896,1206C892,1221 886,1237 884,1252C883,1267 886,1283 888,1298C891,1313 897,1329 899,1344C901,1359 903,1375 902,1390C901,1405 896,1421 893,1436C890,1451 886,1467 884,1482C883,1497 883,1513 884,1528C884,1543 887,1559 887,1574C888,1589 887,1605 886,1620C884,1635 880,1658 878,1666M914,470C914,478 917,501 915,516C914,531 908,547 904,562C900,577 894,593 891,608C888,623 888,639 887,654C886,669 888,685 888,700C888,715 886,731 884,746C882,761 877,777 875,792C872,807 869,823 869,838C869,853 872,869 875,884C879,899 886,915 890,930C895,945 900,961 902,976C905,991 906,1007 907,1022C909,1037 911,1053 913,1068C915,1083 919,1099 919,1114C920,1129 919,1145 916,1160C913,1175 905,1191 901,1206C898,1221 893,1237 894,1252C894,1267 901,1283 905,1298C909,1313 916,1329 919,1344C921,1359 922,1375 920,1390C919,1405 913,1421 910,1436C906,1451 902,1467 900,1482C898,1497 898,1513 898,1528C897,1543 899,1559 898,1574C898,1589 896,1605 894,1620C892,1635 888,1658 887,1666M930,470C930,478 929,501 926,516C923,531 916,547 911,562C906,577 900,593 897,608C894,623 894,639 894,654C894,669 896,685 896,700C897,715 895,731 895,746C894,761 892,777 893,792C894,807 898,823 903,838C908,853 917,869 922,884C927,899 932,915 933,930C934,945 931,961 929,976C927,991 923,1007 923,1022C922,1037 923,1053 924,1068C925,1083 929,1099 928,1114C928,1129 927,1145 924,1160C921,1175 913,1191 910,1206C908,1221 906,1237 908,1252C910,1267 919,1283 924,1298C929,1313 936,1329 937,1344C939,1359 937,1375 934,1390C931,1405 925,1421 920,1436C916,1451 911,1467 909,1482C907,1497 907,1513 906,1528C906,1543 906,1559 906,1574C905,1589 904,1605 903,1620C901,1635 900,1658 899,1666M942,470C940,478 937,501 932,516C928,531 919,547 915,562C910,577 905,593 904,608C902,623 904,639 905,654C906,669 909,685 910,700C910,715 909,731 910,746C910,761 908,777 910,792C912,807 917,823 921,838C926,853 935,869 939,884C943,899 945,915 945,930C945,945 941,961 938,976C936,991 933,1007 932,1022C931,1037 933,1053 935,1068C936,1083 939,1099 939,1114C939,1129 938,1145 935,1160C933,1175 925,1191 923,1206C921,1221 921,1237 924,1252C927,1267 937,1283 942,1298C946,1313 951,1329 951,1344C951,1359 947,1375 943,1390C938,1405 931,1421 926,1436C922,1451 918,1467 916,1482C914,1497 915,1513 915,1528C915,1543 916,1559 916,1574C916,1589 916,1605 915,1620C915,1635 915,1658 915,1666M949,470C947,478 941,501 937,516C932,531 924,547 921,562C917,577 915,593 915,608C915,623 919,639 921,654C923,669 926,685 927,700C928,715 927,731 927,746C927,761 926,777 927,792C929,807 934,823 937,838C941,853 948,869 951,884C954,899 955,915 954,930C953,945 948,961 946,976C945,991 942,1007 942,1022C943,1037 946,1053 948,1068C950,1083 953,1099 954,1114C956,1129 956,1145 958,1160C959,1175 961,1191 962,1206C964,1221 966,1237 967,1252C968,1267 967,1283 966,1298C965,1313 964,1329 961,1344C957,1359 952,1375 947,1390C942,1405 935,1421 931,1436C927,1451 925,1467 925,1482C924,1497 926,1513 927,1528C928,1543 930,1559 931,1574C932,1589 932,1605 932,1620C933,1635 933,1658 933,1666M953,470C951,478 945,501 941,516C936,531 930,547 927,562C925,577 925,593 926,608C927,623 931,639 933,654C935,669 938,685 938,700C939,715 937,731 937,746C936,761 935,777 936,792C938,807 942,823 945,838C948,853 954,869 957,884C959,899 959,915 958,930C957,945 953,961 952,976C951,991 949,1007 950,1022C951,1037 955,1053 957,1068C959,1083 962,1099 964,1114C965,1129 965,1145 966,1160C967,1175 969,1191 970,1206C971,1221 973,1237 974,1252C974,1267 973,1283 971,1298C970,1313 967,1329 964,1344C960,1359 954,1375 949,1390C945,1405 939,1421 936,1436C933,1451 932,1467 933,1482C933,1497 936,1513 937,1528C939,1543 941,1559 942,1574C943,1589 944,1605 944,1620C944,1635 944,1658 944,1666M966,470C964,478 959,501 956,516C953,531 950,547 949,562C949,577 951,593 953,608C954,623 958,639 959,654C960,669 959,685 957,700C956,715 952,731 950,746C949,761 948,777 949,792C950,807 954,823 957,838C960,853 965,869 967,884C970,899 970,915 970,930C970,945 968,961 968,976C968,991 969,1007 971,1022C973,1037 977,1053 979,1068C981,1083 982,1099 983,1114C983,1129 982,1145 982,1160C982,1175 982,1191 983,1206C983,1221 984,1237 984,1252C983,1267 982,1283 980,1298C977,1313 974,1329 971,1344C967,1359 962,1375 960,1390C957,1405 954,1421 953,1436C953,1451 955,1467 956,1482C958,1497 961,1513 963,1528C964,1543 966,1559 966,1574C967,1589 966,1605 966,1620C965,1635 963,1658 963,1666M990,470C989,478 984,501 982,516C981,531 979,547 978,562C978,577 980,593 980,608C979,623 979,639 977,654C974,669 969,685 966,700C962,715 958,731 956,746C955,761 957,777 959,792C962,807 969,823 973,838C978,853 983,869 986,884C989,899 990,915 991,930C992,945 992,961 992,976C993,991 995,1007 996,1022C997,1037 999,1053 999,1068C999,1083 998,1099 998,1114C997,1129 995,1145 994,1160C994,1175 995,1191 996,1206C996,1221 998,1237 998,1252C997,1267 996,1283 994,1298C993,1313 990,1329 988,1344C986,1359 984,1375 983,1390C982,1405 982,1421 983,1436C983,1451 985,1467 986,1482C987,1497 988,1513 989,1528C989,1543 988,1559 987,1574C986,1589 985,1605 983,1620C981,1635 978,1658 977,1666M1003,470C1002,478 997,501 995,516C992,531 991,547 989,562C988,577 989,593 988,608C986,623 984,639 980,654C977,669 970,685 966,700C963,715 959,731 959,746C960,761 963,777 967,792C972,807 979,823 985,838C990,853 995,869 999,884C1002,899 1003,915 1004,930C1004,945 1004,961 1004,976C1005,991 1005,1007 1006,1022C1006,1037 1007,1053 1006,1068C1006,1083 1004,1099 1003,1114C1003,1129 1001,1145 1001,1160C1002,1175 1004,1191 1005,1206C1006,1221 1008,1237 1008,1252C1008,1267 1006,1283 1005,1298C1003,1313 1001,1329 1000,1344C998,1359 997,1375 997,1390C996,1405 996,1421 997,1436C997,1451 998,1467 998,1482C998,1497 998,1513 997,1528C997,1543 995,1559 994,1574C993,1589 991,1605 989,1620C988,1635 984,1658 983,1666M1022,470C1020,478 1014,501 1012,516C1010,531 1009,547 1010,562C1011,577 1015,593 1017,608C1019,623 1021,639 1021,654C1021,669 1018,685 1016,700C1014,715 1010,731 1009,746C1008,761 1008,777 1009,792C1011,807 1015,823 1018,838C1020,853 1023,869 1025,884C1026,899 1025,915 1025,930C1024,945 1023,961 1022,976C1022,991 1021,1007 1021,1022C1020,1037 1020,1053 1019,1068C1019,1083 1018,1099 1019,1114C1020,1129 1021,1145 1023,1160C1025,1175 1029,1191 1030,1206C1032,1221 1033,1237 1032,1252C1032,1267 1028,1283 1026,1298C1024,1313 1022,1329 1021,1344C1019,1359 1019,1375 1018,1390C1018,1405 1018,1421 1017,1436C1016,1451 1015,1467 1014,1482C1013,1497 1011,1513 1010,1528C1008,1543 1007,1559 1006,1574C1005,1589 1005,1605 1003,1620C1002,1635 1000,1658 999,1666M1028,470C1026,478 1020,501 1018,516C1017,531 1017,547 1018,562C1019,577 1023,593 1025,608C1026,623 1028,639 1028,654C1028,669 1026,685 1025,700C1024,715 1022,731 1021,746C1021,761 1023,777 1024,792C1026,807 1030,823 1032,838C1033,853 1035,869 1035,884C1035,899 1034,915 1033,930C1032,945 1031,961 1030,976C1030,991 1029,1007 1029,1022C1029,1037 1028,1053 1029,1068C1029,1083 1030,1099 1031,1114C1033,1129 1036,1145 1039,1160C1041,1175 1045,1191 1046,1206C1047,1221 1046,1237 1044,1252C1042,1267 1037,1283 1035,1298C1032,1313 1030,1329 1028,1344C1027,1359 1027,1375 1026,1390C1026,1405 1026,1421 1025,1436C1024,1451 1022,1467 1021,1482C1019,1497 1017,1513 1017,1528C1016,1543 1015,1559 1015,1574C1014,1589 1014,1605 1014,1620C1013,1635 1010,1658 1010,1666M1034,470C1033,478 1028,501 1027,516C1027,531 1028,547 1030,562C1032,577 1036,593 1037,608C1039,623 1040,639 1040,654C1040,669 1038,685 1038,700C1037,715 1036,731 1036,746C1036,761 1038,777 1039,792C1040,807 1042,823 1043,838C1044,853 1044,869 1044,884C1044,899 1042,915 1042,930C1041,945 1040,961 1040,976C1039,991 1039,1007 1040,1022C1040,1037 1040,1053 1042,1068C1043,1083 1045,1099 1048,1114C1050,1129 1054,1145 1056,1160C1059,1175 1061,1191 1061,1206C1060,1221 1057,1237 1053,1252C1050,1267 1043,1283 1040,1298C1037,1313 1035,1329 1034,1344C1033,1359 1034,1375 1034,1390C1034,1405 1034,1421 1033,1436C1032,1451 1030,1467 1029,1482C1028,1497 1027,1513 1026,1528C1026,1543 1026,1559 1026,1574C1027,1589 1027,1605 1026,1620C1026,1635 1023,1658 1023,1666M1039,470C1039,478 1035,501 1036,516C1036,531 1039,547 1041,562C1043,577 1046,593 1048,608C1049,623 1049,639 1049,654C1049,669 1047,685 1046,700C1045,715 1044,731 1045,746C1045,761 1046,777 1047,792C1048,807 1049,823 1049,838C1050,853 1050,869 1049,884C1049,899 1048,915 1047,930C1047,945 1047,961 1047,976C1047,991 1047,1007 1048,1022C1049,1037 1050,1053 1052,1068C1053,1083 1056,1099 1059,1114C1061,1129 1066,1145 1067,1160C1069,1175 1070,1191 1069,1206C1067,1221 1061,1237 1057,1252C1052,1267 1045,1283 1042,1298C1039,1313 1038,1329 1037,1344C1037,1359 1040,1375 1040,1390C1040,1405 1040,1421 1040,1436C1039,1451 1037,1467 1036,1482C1035,1497 1034,1513 1034,1528C1034,1543 1035,1559 1035,1574C1036,1589 1036,1605 1035,1620C1035,1635 1032,1658 1031,1666M1050,470C1050,478 1049,501 1050,516C1052,531 1055,547 1057,562C1059,577 1061,593 1062,608C1062,623 1061,639 1060,654C1059,669 1057,685 1056,700C1055,715 1054,731 1054,746C1054,761 1055,777 1055,792C1056,807 1056,823 1057,838C1057,853 1057,869 1057,884C1057,899 1057,915 1057,930C1057,945 1058,961 1059,976C1059,991 1060,1007 1061,1022C1062,1037 1063,1053 1065,1068C1067,1083 1071,1099 1073,1114C1076,1129 1079,1145 1080,1160C1081,1175 1080,1191 1077,1206C1074,1221 1065,1237 1060,1252C1054,1267 1047,1283 1044,1298C1041,1313 1042,1329 1043,1344C1044,1359 1048,1375 1050,1390C1051,1405 1051,1421 1050,1436C1050,1451 1048,1467 1047,1482C1046,1497 1045,1513 1046,1528C1046,1543 1048,1559 1048,1574C1048,1589 1048,1605 1048,1620C1047,1635 1044,1658 1043,1666M1066,470C1067,478 1068,501 1069,516C1071,531 1073,547 1074,562C1075,577 1075,593 1075,608C1074,623 1071,639 1069,654C1067,669 1065,685 1064,700C1062,715 1062,731 1062,746C1062,761 1063,777 1064,792C1064,807 1065,823 1066,838C1066,853 1067,869 1068,884C1068,899 1069,915 1070,930C1071,945 1072,961 1073,976C1074,991 1074,1007 1075,1022C1076,1037 1078,1053 1080,1068C1082,1083 1085,1099 1087,1114C1090,1129 1093,1145 1095,1160C1097,1175 1098,1191 1098,1206C1097,1221 1096,1237 1095,1252C1093,1267 1090,1283 1087,1298C1084,1313 1080,1329 1078,1344C1075,1359 1073,1375 1071,1390C1069,1405 1067,1421 1065,1436C1063,1451 1060,1467 1059,1482C1058,1497 1058,1513 1058,1528C1059,1543 1061,1559 1061,1574C1062,1589 1061,1605 1060,1620C1059,1635 1056,1658 1055,1666M1076,470C1077,478 1079,501 1080,516C1081,531 1083,547 1083,562C1083,577 1082,593 1080,608C1078,623 1075,639 1073,654C1070,669 1068,685 1067,700C1066,715 1066,731 1066,746C1067,761 1068,777 1069,792C1070,807 1071,823 1072,838C1073,853 1074,869 1075,884C1076,899 1078,915 1079,930C1080,945 1081,961 1081,976C1082,991 1082,1007 1083,1022C1084,1037 1085,1053 1087,1068C1089,1083 1093,1099 1095,1114C1097,1129 1100,1145 1101,1160C1102,1175 1102,1191 1101,1206C1101,1221 1099,1237 1097,1252C1095,1267 1093,1283 1091,1298C1088,1313 1086,1329 1084,1344C1082,1359 1081,1375 1079,1390C1077,1405 1075,1421 1073,1436C1071,1451 1068,1467 1066,1482C1065,1497 1065,1513 1066,1528C1066,1543 1068,1559 1069,1574C1069,1589 1068,1605 1067,1620C1066,1635 1063,1658 1062,1666M1095,470C1095,478 1096,501 1096,516C1096,531 1096,547 1094,562C1092,577 1089,593 1086,608C1083,623 1079,639 1077,654C1075,669 1074,685 1074,700C1074,715 1076,731 1077,746C1078,761 1080,777 1081,792C1083,807 1084,823 1086,838C1088,853 1089,869 1091,884C1093,899 1094,915 1095,930C1096,945 1096,961 1096,976C1097,991 1096,1007 1096,1022C1097,1037 1098,1053 1100,1068C1102,1083 1106,1099 1108,1114C1110,1129 1112,1145 1113,1160C1113,1175 1111,1191 1110,1206C1108,1221 1106,1237 1104,1252C1102,1267 1101,1283 1100,1298C1099,1313 1099,1329 1098,1344C1097,1359 1096,1375 1094,1390C1092,1405 1089,1421 1086,1436C1084,1451 1080,1467 1078,1482C1077,1497 1077,1513 1078,1528C1078,1543 1081,1559 1081,1574C1081,1589 1080,1605 1079,1620C1078,1635 1075,1658 1074,1666M1104,470C1104,478 1105,501 1104,516C1102,531 1100,547 1098,562C1095,577 1091,593 1088,608C1085,623 1082,639 1081,654C1079,669 1079,685 1080,700C1081,715 1083,731 1085,746C1087,761 1089,777 1091,792C1092,807 1094,823 1096,838C1098,853 1100,869 1101,884C1103,899 1104,915 1105,930C1105,945 1105,961 1105,976C1104,991 1103,1007 1104,1022C1105,1037 1106,1053 1108,1068C1111,1083 1115,1099 1117,1114C1119,1129 1120,1145 1120,1160C1120,1175 1117,1191 1116,1206C1114,1221 1111,1237 1110,1252C1108,1267 1108,1283 1107,1298C1107,1313 1108,1329 1107,1344C1106,1359 1105,1375 1103,1390C1101,1405 1096,1421 1093,1436C1090,1451 1086,1467 1085,1482C1083,1497 1084,1513 1085,1528C1085,1543 1088,1559 1088,1574C1088,1589 1087,1605 1086,1620C1084,1635 1082,1658 1081,1666M1113,470C1112,478 1111,501 1110,516C1108,531 1104,547 1101,562C1098,577 1094,593 1091,608C1089,623 1086,639 1086,654C1086,669 1087,685 1089,700C1091,715 1094,731 1096,746C1098,761 1100,777 1102,792C1104,807 1106,823 1107,838C1109,853 1111,869 1112,884C1114,899 1115,915 1115,930C1115,945 1114,961 1113,976C1113,991 1111,1007 1112,1022C1113,1037 1115,1053 1118,1068C1120,1083 1125,1099 1126,1114C1128,1129 1130,1145 1129,1160C1128,1175 1125,1191 1123,1206C1121,1221 1117,1237 1116,1252C1115,1267 1116,1283 1116,1298C1116,1313 1117,1329 1117,1344C1116,1359 1114,1375 1112,1390C1109,1405 1104,1421 1100,1436C1097,1451 1093,1467 1091,1482C1090,1497 1091,1513 1092,1528C1093,1543 1095,1559 1096,1574C1096,1589 1094,1605 1093,1620C1092,1635 1090,1658 1089,1666M1120,470C1119,478 1117,501 1115,516C1112,531 1108,547 1105,562C1102,577 1098,593 1096,608C1095,623 1094,639 1095,654C1096,669 1099,685 1102,700C1104,715 1108,731 1110,746C1113,761 1114,777 1116,792C1117,807 1119,823 1120,838C1121,853 1123,869 1124,884C1125,899 1125,915 1125,930C1125,945 1123,961 1122,976C1122,991 1120,1007 1122,1022C1123,1037 1126,1053 1129,1068C1131,1083 1136,1099 1138,1114C1139,1129 1140,1145 1138,1160C1137,1175 1133,1191 1130,1206C1128,1221 1125,1237 1124,1252C1123,1267 1125,1283 1125,1298C1126,1313 1127,1329 1127,1344C1126,1359 1123,1375 1120,1390C1117,1405 1111,1421 1107,1436C1104,1451 1099,1467 1098,1482C1097,1497 1099,1513 1100,1528C1101,1543 1103,1559 1104,1574C1104,1589 1102,1605 1101,1620C1100,1635 1099,1658 1099,1666M1125,470C1124,478 1122,501 1119,516C1116,531 1112,547 1109,562C1106,577 1103,593 1103,608C1102,623 1103,639 1105,654C1107,669 1111,685 1114,700C1117,715 1120,731 1122,746C1124,761 1125,777 1126,792C1127,807 1128,823 1129,838C1130,853 1132,869 1132,884C1133,899 1133,915 1132,930C1132,945 1130,961 1129,976C1129,991 1128,1007 1129,1022C1131,1037 1135,1053 1138,1068C1141,1083 1145,1099 1147,1114C1148,1129 1147,1145 1146,1160C1144,1175 1139,1191 1136,1206C1133,1221 1131,1237 1130,1252C1130,1267 1132,1283 1132,1298C1133,1313 1135,1329 1134,1344C1133,1359 1130,1375 1127,1390C1123,1405 1116,1421 1112,1436C1109,1451 1104,1467 1103,1482C1102,1497 1105,1513 1106,1528C1107,1543 1110,1559 1110,1574C1111,1589 1109,1605 1108,1620C1108,1635 1108,1658 1107,1666M1130,470C1129,478 1126,501 1124,516C1121,531 1117,547 1114,562C1112,577 1110,593 1110,608C1110,623 1112,639 1115,654C1117,669 1122,685 1124,700C1127,715 1130,731 1131,746C1133,761 1133,777 1134,792C1135,807 1136,823 1137,838C1137,853 1139,869 1139,884C1140,899 1139,915 1139,930C1138,945 1135,961 1135,976C1135,991 1135,1007 1136,1022C1138,1037 1143,1053 1146,1068C1149,1083 1153,1099 1154,1114C1155,1129 1154,1145 1151,1160C1149,1175 1143,1191 1141,1206C1138,1221 1136,1237 1135,1252C1135,1267 1138,1283 1139,1298C1140,1313 1141,1329 1140,1344C1139,1359 1136,1375 1132,1390C1128,1405 1121,1421 1117,1436C1113,1451 1109,1467 1108,1482C1107,1497 1110,1513 1111,1528C1113,1543 1116,1559 1117,1574C1117,1589 1116,1605 1115,1620C1115,1635 1116,1658 1116,1666M1136,470C1135,478 1132,501 1130,516C1127,531 1123,547 1121,562C1119,577 1118,593 1118,608C1119,623 1122,639 1125,654C1128,669 1132,685 1135,700C1137,715 1139,731 1140,746C1142,761 1141,777 1142,792C1142,807 1143,823 1143,838C1144,853 1145,869 1146,884C1146,899 1145,915 1145,930C1144,945 1141,961 1141,976C1141,991 1141,1007 1143,1022C1145,1037 1151,1053 1154,1068C1156,1083 1161,1099 1161,1114C1162,1129 1159,1145 1157,1160C1154,1175 1148,1191 1145,1206C1143,1221 1141,1237 1141,1252C1141,1267 1144,1283 1145,1298C1146,1313 1148,1329 1147,1344C1145,1359 1141,1375 1137,1390C1133,1405 1125,1421 1121,1436C1118,1451 1114,1467 1113,1482C1112,1497 1116,1513 1117,1528C1119,1543 1122,1559 1123,1574C1124,1589 1123,1605 1123,1620C1123,1635 1125,1658 1125,1666M1151,470C1150,478 1147,501 1144,516C1142,531 1138,547 1136,562C1135,577 1135,593 1137,608C1138,623 1143,639 1145,654C1148,669 1152,685 1154,700C1155,715 1155,731 1156,746C1156,761 1154,777 1154,792C1154,807 1155,823 1156,838C1156,853 1158,869 1158,884C1158,899 1157,915 1157,930C1156,945 1153,961 1154,976C1154,991 1155,1007 1158,1022C1160,1037 1166,1053 1169,1068C1171,1083 1175,1099 1174,1114C1174,1129 1170,1145 1166,1160C1163,1175 1157,1191 1155,1206C1152,1221 1152,1237 1153,1252C1153,1267 1158,1283 1159,1298C1160,1313 1161,1329 1159,1344C1157,1359 1152,1375 1147,1390C1143,1405 1135,1421 1131,1436C1128,1451 1124,1467 1124,1482C1124,1497 1128,1513 1130,1528C1132,1543 1136,1559 1138,1574C1139,1589 1139,1605 1140,1620C1141,1635 1143,1658 1144,1666M1169,470C1167,478 1163,501 1160,516C1158,531 1153,547 1152,562C1151,577 1152,593 1154,608C1156,623 1161,639 1163,654C1166,669 1168,685 1169,700C1169,715 1168,731 1167,746C1167,761 1165,777 1165,792C1165,807 1167,823 1168,838C1168,853 1170,869 1170,884C1171,899 1169,915 1169,930C1168,945 1166,961 1166,976C1167,991 1169,1007 1172,1022C1175,1037 1181,1053 1183,1068C1186,1083 1188,1099 1186,1114C1185,1129 1180,1145 1176,1160C1173,1175 1167,1191 1166,1206C1164,1221 1165,1237 1166,1252C1168,1267 1173,1283 1174,1298C1175,1313 1175,1329 1173,1344C1172,1359 1166,1375 1164,1390C1163,1405 1161,1421 1162,1436C1163,1451 1168,1467 1171,1482C1173,1497 1176,1513 1176,1528C1175,1543 1172,1559 1169,1574C1167,1589 1162,1605 1161,1620C1160,1635 1163,1658 1163,1666M1180,470C1178,478 1173,501 1170,516C1166,531 1161,547 1160,562C1159,577 1161,593 1163,608C1165,623 1170,639 1173,654C1175,669 1177,685 1177,700C1177,715 1175,731 1174,746C1173,761 1172,777 1172,792C1172,807 1174,823 1176,838C1177,853 1179,869 1179,884C1179,899 1177,915 1177,930C1176,945 1174,961 1175,976C1176,991 1179,1007 1182,1022C1185,1037 1191,1053 1193,1068C1195,1083 1196,1099 1194,1114C1192,1129 1186,1145 1183,1160C1180,1175 1175,1191 1173,1206C1172,1221 1174,1237 1176,1252C1178,1267 1183,1283 1183,1298C1184,1313 1183,1329 1182,1344C1180,1359 1174,1375 1172,1390C1170,1405 1169,1421 1171,1436C1172,1451 1178,1467 1180,1482C1183,1497 1186,1513 1186,1528C1185,1543 1181,1559 1179,1574C1177,1589 1172,1605 1171,1620C1170,1635 1173,1658 1173,1666M1201,470C1198,478 1189,501 1185,516C1180,531 1176,547 1175,562C1175,577 1179,593 1182,608C1185,623 1190,639 1192,654C1194,669 1194,685 1194,700C1193,715 1190,731 1190,746C1189,761 1189,777 1190,792C1191,807 1194,823 1195,838C1197,853 1199,869 1199,884C1199,899 1197,915 1196,930C1196,945 1194,961 1196,976C1197,991 1201,1007 1204,1022C1207,1037 1213,1053 1214,1068C1215,1083 1214,1099 1211,1114C1209,1129 1202,1145 1199,1160C1196,1175 1193,1191 1193,1206C1193,1221 1197,1237 1199,1252C1201,1267 1205,1283 1205,1298C1206,1313 1203,1329 1201,1344C1199,1359 1193,1375 1192,1390C1190,1405 1191,1421 1192,1436C1194,1451 1200,1467 1202,1482C1205,1497 1206,1513 1206,1528C1205,1543 1200,1559 1197,1574C1194,1589 1189,1605 1188,1620C1187,1635 1189,1658 1189,1666M1211,470C1208,478 1197,501 1193,516C1189,531 1185,547 1186,562C1186,577 1193,593 1196,608C1200,623 1206,639 1208,654C1209,669 1208,685 1207,700C1207,715 1204,731 1203,746C1203,761 1204,777 1205,792C1207,807 1211,823 1212,838C1214,853 1215,869 1215,884C1215,899 1212,915 1212,930C1211,945 1211,961 1212,976C1214,991 1218,1007 1221,1022C1224,1037 1228,1053 1228,1068C1228,1083 1225,1099 1223,1114C1220,1129 1213,1145 1211,1160C1209,1175 1207,1191 1208,1206C1209,1221 1214,1237 1217,1252C1219,1267 1222,1283 1222,1298C1222,1313 1218,1329 1216,1344C1213,1359 1208,1375 1207,1390C1206,1405 1207,1421 1209,1436C1210,1451 1215,1467 1217,1482C1218,1497 1218,1513 1216,1528C1214,1543 1208,1559 1205,1574C1202,1589 1198,1605 1197,1620C1196,1635 1199,1658 1199,1666M1217,470C1214,478 1203,501 1199,516C1195,531 1193,547 1194,562C1196,577 1203,593 1208,608C1212,623 1217,639 1219,654C1220,669 1218,685 1217,700C1216,715 1213,731 1213,746C1213,761 1215,777 1217,792C1219,807 1223,823 1224,838C1226,853 1226,869 1226,884C1225,899 1223,915 1222,930C1222,945 1221,961 1223,976C1224,991 1228,1007 1231,1022C1233,1037 1236,1053 1236,1068C1236,1083 1232,1099 1229,1114C1227,1129 1221,1145 1219,1160C1218,1175 1218,1191 1219,1206C1221,1221 1227,1237 1229,1252C1231,1267 1233,1283 1233,1298C1232,1313 1228,1329 1225,1344C1223,1359 1218,1375 1217,1390C1216,1405 1217,1421 1218,1436C1219,1451 1224,1467 1224,1482C1225,1497 1224,1513 1221,1528C1219,1543 1213,1559 1210,1574C1207,1589 1205,1605 1204,1620C1204,1635 1208,1658 1209,1666M1226,470C1223,478 1212,501 1209,516C1206,531 1206,547 1208,562C1210,577 1220,593 1224,608C1229,623 1233,639 1235,654C1236,669 1233,685 1232,700C1230,715 1228,731 1228,746C1228,761 1231,777 1233,792C1235,807 1239,823 1240,838C1241,853 1241,869 1240,884C1239,899 1236,915 1235,930C1234,945 1234,961 1235,976C1237,991 1241,1007 1242,1022C1244,1037 1246,1053 1246,1068C1245,1083 1242,1099 1239,1114C1237,1129 1233,1145 1233,1160C1232,1175 1234,1191 1237,1206C1239,1221 1245,1237 1246,1252C1248,1267 1249,1283 1247,1298C1246,1313 1240,1329 1237,1344C1234,1359 1230,1375 1229,1390C1227,1405 1229,1421 1230,1436C1230,1451 1233,1467 1233,1482C1233,1497 1231,1513 1229,1528C1227,1543 1222,1559 1220,1574C1218,1589 1217,1605 1218,1620C1220,1635 1225,1658 1227,1666M1243,470C1243,478 1241,501 1243,516C1245,531 1252,547 1255,562C1258,577 1260,593 1260,608C1260,623 1257,639 1255,654C1253,669 1248,685 1246,700C1245,715 1243,731 1244,746C1244,761 1248,777 1249,792C1251,807 1254,823 1255,838C1255,853 1253,869 1252,884C1251,899 1248,915 1247,930C1246,945 1246,961 1247,976C1248,991 1252,1007 1253,1022C1255,1037 1257,1053 1257,1068C1257,1083 1254,1099 1252,1114C1251,1129 1249,1145 1250,1160C1251,1175 1255,1191 1257,1206C1259,1221 1264,1237 1264,1252C1265,1267 1263,1283 1260,1298C1258,1313 1251,1329 1248,1344C1244,1359 1241,1375 1240,1390C1239,1405 1240,1421 1241,1436C1242,1451 1244,1467 1244,1482C1244,1497 1242,1513 1241,1528C1239,1543 1236,1559 1236,1574C1236,1589 1237,1605 1239,1620C1241,1635 1247,1658 1249,1666M1252,470C1252,478 1251,501 1253,516C1255,531 1263,547 1266,562C1269,577 1271,593 1271,608C1271,623 1267,639 1264,654C1262,669 1257,685 1255,700C1253,715 1252,731 1253,746C1253,761 1257,777 1259,792C1260,807 1263,823 1263,838C1263,853 1261,869 1259,884C1258,899 1255,915 1254,930C1253,945 1254,961 1255,976C1256,991 1260,1007 1262,1022C1263,1037 1265,1053 1265,1068C1266,1083 1263,1099 1263,1114C1263,1129 1262,1145 1263,1160C1264,1175 1268,1191 1270,1206C1272,1221 1275,1237 1274,1252C1274,1267 1271,1283 1267,1298C1264,1313 1257,1329 1254,1344C1251,1359 1248,1375 1247,1390C1247,1405 1249,1421 1250,1436C1251,1451 1253,1467 1253,1482C1254,1497 1252,1513 1251,1528C1251,1543 1249,1559 1249,1574C1249,1589 1251,1605 1254,1620C1256,1635 1261,1658 1262,1666M1260,470C1261,478 1260,501 1262,516C1265,531 1273,547 1276,562C1279,577 1281,593 1280,608C1279,623 1275,639 1272,654C1269,669 1264,685 1262,700C1260,715 1260,731 1260,746C1261,761 1265,777 1266,792C1268,807 1270,823 1270,838C1269,853 1267,869 1266,884C1264,899 1262,915 1261,930C1261,945 1262,961 1263,976C1265,991 1268,1007 1270,1022C1272,1037 1274,1053 1274,1068C1275,1083 1273,1099 1273,1114C1274,1129 1273,1145 1275,1160C1276,1175 1279,1191 1281,1206C1282,1221 1283,1237 1282,1252C1281,1267 1276,1283 1272,1298C1269,1313 1263,1329 1260,1344C1257,1359 1255,1375 1255,1390C1255,1405 1258,1421 1259,1436C1261,1451 1263,1467 1263,1482C1264,1497 1263,1513 1262,1528C1262,1543 1261,1559 1261,1574C1262,1589 1264,1605 1266,1620C1268,1635 1271,1658 1272,1666M1272,470C1273,478 1273,501 1276,516C1279,531 1287,547 1289,562C1292,577 1293,593 1291,608C1290,623 1284,639 1281,654C1277,669 1272,685 1271,700C1269,715 1269,731 1270,746C1271,761 1275,777 1277,792C1279,807 1280,823 1280,838C1280,853 1278,869 1277,884C1276,899 1275,915 1275,930C1275,945 1276,961 1277,976C1279,991 1282,1007 1283,1022C1285,1037 1287,1053 1288,1068C1289,1083 1288,1099 1288,1114C1288,1129 1289,1145 1290,1160C1291,1175 1293,1191 1293,1206C1293,1221 1293,1237 1291,1252C1288,1267 1283,1283 1280,1298C1276,1313 1272,1329 1270,1344C1268,1359 1269,1375 1270,1390C1271,1405 1274,1421 1276,1436C1277,1451 1279,1467 1279,1482C1280,1497 1278,1513 1278,1528C1277,1543 1276,1559 1277,1574C1277,1589 1278,1605 1279,1620C1280,1635 1282,1658 1283,1666M1290,470C1291,478 1294,501 1296,516C1299,531 1306,547 1307,562C1309,577 1307,593 1305,608C1302,623 1295,639 1292,654C1288,669 1285,685 1284,700C1283,715 1286,731 1288,746C1290,761 1295,777 1297,792C1299,807 1301,823 1302,838C1303,853 1302,869 1304,884C1306,899 1310,915 1314,930C1319,945 1327,961 1331,976C1334,991 1337,1007 1336,1022C1335,1037 1329,1053 1326,1068C1322,1083 1315,1099 1313,1114C1310,1129 1309,1145 1309,1160C1308,1175 1309,1191 1308,1206C1307,1221 1306,1237 1304,1252C1301,1267 1297,1283 1295,1298C1294,1313 1292,1329 1292,1344C1292,1359 1295,1375 1296,1390C1297,1405 1300,1421 1300,1436C1301,1451 1300,1467 1300,1482C1299,1497 1297,1513 1296,1528C1294,1543 1293,1559 1293,1574C1293,1589 1293,1605 1294,1620C1295,1635 1296,1658 1296,1666M1302,470C1303,478 1306,501 1309,516C1311,531 1317,547 1317,562C1318,577 1315,593 1312,608C1309,623 1303,639 1300,654C1297,669 1295,685 1296,700C1297,715 1301,731 1304,746C1307,761 1312,777 1315,792C1317,807 1318,823 1320,838C1321,853 1321,869 1323,884C1325,899 1328,915 1332,930C1335,945 1341,961 1343,976C1346,991 1346,1007 1344,1022C1343,1037 1336,1053 1333,1068C1329,1083 1324,1099 1321,1114C1319,1129 1319,1145 1319,1160C1318,1175 1319,1191 1319,1206C1318,1221 1316,1237 1315,1252C1313,1267 1310,1283 1309,1298C1308,1313 1308,1329 1309,1344C1309,1359 1312,1375 1312,1390C1313,1405 1313,1421 1312,1436C1312,1451 1310,1467 1308,1482C1307,1497 1304,1513 1303,1528C1302,1543 1302,1559 1302,1574C1302,1589 1304,1605 1305,1620C1306,1635 1309,1658 1310,1666M1309,470C1311,478 1314,501 1316,516C1319,531 1323,547 1324,562C1324,577 1320,593 1318,608C1315,623 1309,639 1307,654C1305,669 1304,685 1306,700C1307,715 1312,731 1316,746C1319,761 1324,777 1327,792C1329,807 1330,823 1331,838C1332,853 1332,869 1333,884C1335,899 1338,915 1340,930C1343,945 1348,961 1349,976C1350,991 1350,1007 1348,1022C1346,1037 1340,1053 1336,1068C1333,1083 1329,1099 1327,1114C1325,1129 1326,1145 1326,1160C1326,1175 1327,1191 1326,1206C1326,1221 1324,1237 1323,1252C1321,1267 1319,1283 1319,1298C1318,1313 1318,1329 1319,1344C1319,1359 1320,1375 1320,1390C1320,1405 1319,1421 1318,1436C1316,1451 1314,1467 1312,1482C1311,1497 1309,1513 1309,1528C1308,1543 1308,1559 1309,1574C1310,1589 1312,1605 1314,1620C1316,1635 1319,1658 1320,1666M1322,470C1323,478 1327,501 1329,516C1331,531 1334,547 1334,562C1334,577 1330,593 1328,608C1326,623 1321,639 1321,654C1320,669 1321,685 1324,700C1327,715 1332,731 1336,746C1339,761 1343,777 1345,792C1347,807 1346,823 1347,838C1347,853 1346,869 1347,884C1347,899 1349,915 1351,930C1352,945 1355,961 1356,976C1356,991 1354,1007 1352,1022C1350,1037 1346,1053 1344,1068C1341,1083 1339,1099 1339,1114C1338,1129 1339,1145 1340,1160C1340,1175 1340,1191 1340,1206C1339,1221 1338,1237 1336,1252C1335,1267 1334,1283 1333,1298C1332,1313 1333,1329 1332,1344C1332,1359 1332,1375 1331,1390C1329,1405 1327,1421 1325,1436C1323,1451 1321,1467 1320,1482C1319,1497 1319,1513 1320,1528C1321,1543 1323,1559 1325,1574C1327,1589 1330,1605 1332,1620C1335,1635 1339,1658 1340,1666M1335,470C1336,478 1341,501 1343,516C1345,531 1347,547 1347,562C1347,577 1343,593 1342,608C1340,623 1337,639 1338,654C1338,669 1341,685 1344,700C1346,715 1352,731 1355,746C1357,761 1359,777 1360,792C1360,807 1358,823 1358,838C1357,853 1356,869 1356,884C1356,899 1357,915 1358,930C1359,945 1361,961 1361,976C1362,991 1361,1007 1359,1022C1358,1037 1356,1053 1355,1068C1354,1083 1354,1099 1354,1114C1354,1129 1355,1145 1355,1160C1355,1175 1355,1191 1354,1206C1353,1221 1350,1237 1349,1252C1348,1267 1346,1283 1345,1298C1344,1313 1345,1329 1344,1344C1343,1359 1342,1375 1340,1390C1338,1405 1335,1421 1333,1436C1332,1451 1331,1467 1332,1482C1332,1497 1335,1513 1337,1528C1339,1543 1343,1559 1345,1574C1348,1589 1350,1605 1352,1620C1355,1635 1358,1658 1359,1666M1346,470C1347,478 1352,501 1354,516C1356,531 1358,547 1358,562C1358,577 1355,593 1353,608C1352,623 1350,639 1351,654C1352,669 1355,685 1357,700C1360,715 1364,731 1366,746C1367,761 1368,777 1367,792C1367,807 1365,823 1363,838C1362,853 1361,869 1361,884C1361,899 1363,915 1364,930C1365,945 1367,961 1368,976C1369,991 1368,1007 1368,1022C1368,1037 1367,1053 1367,1068C1366,1083 1367,1099 1367,1114C1367,1129 1368,1145 1367,1160C1366,1175 1365,1191 1363,1206C1361,1221 1359,1237 1357,1252C1356,1267 1355,1283 1354,1298C1353,1313 1353,1329 1352,1344C1351,1359 1349,1375 1348,1390C1346,1405 1343,1421 1342,1436C1341,1451 1342,1467 1344,1482C1345,1497 1350,1513 1352,1528C1355,1543 1358,1559 1361,1574C1363,1589 1365,1605 1366,1620C1368,1635 1369,1658 1370,1666M1354,470C1356,478 1361,501 1363,516C1365,531 1366,547 1366,562C1366,577 1363,593 1362,608C1361,623 1359,639 1360,654C1360,669 1364,685 1366,700C1368,715 1371,731 1372,746C1373,761 1372,777 1371,792C1371,807 1368,823 1367,838C1366,853 1365,869 1366,884C1366,899 1368,915 1370,930C1371,945 1373,961 1374,976C1375,991 1376,1007 1376,1022C1376,1037 1376,1053 1376,1068C1376,1083 1376,1099 1376,1114C1376,1129 1375,1145 1374,1160C1373,1175 1370,1191 1368,1206C1366,1221 1364,1237 1362,1252C1361,1267 1360,1283 1360,1298C1359,1313 1359,1329 1358,1344C1358,1359 1356,1375 1355,1390C1353,1405 1350,1421 1350,1436C1350,1451 1351,1467 1353,1482C1355,1497 1360,1513 1363,1528C1366,1543 1369,1559 1370,1574C1372,1589 1373,1605 1374,1620C1375,1635 1375,1658 1376,1666M1369,470C1370,478 1376,501 1377,516C1379,531 1379,547 1379,562C1378,577 1375,593 1373,608C1372,623 1371,639 1372,654C1372,669 1374,685 1376,700C1377,715 1379,731 1379,746C1379,761 1378,777 1377,792C1376,807 1374,823 1374,838C1373,853 1374,869 1375,884C1376,899 1379,915 1381,930C1383,945 1386,961 1387,976C1388,991 1389,1007 1390,1022C1390,1037 1390,1053 1390,1068C1390,1083 1390,1099 1388,1114C1387,1129 1385,1145 1383,1160C1381,1175 1378,1191 1375,1206C1373,1221 1372,1237 1371,1252C1370,1267 1370,1283 1370,1298C1370,1313 1371,1329 1371,1344C1370,1359 1368,1375 1367,1390C1366,1405 1363,1421 1363,1436C1363,1451 1366,1467 1368,1482C1371,1497 1376,1513 1378,1528C1380,1543 1382,1559 1383,1574C1383,1589 1382,1605 1382,1620C1382,1635 1382,1658 1382,1666M1392,470C1393,478 1397,501 1397,516C1398,531 1396,547 1394,562C1393,577 1389,593 1387,608C1386,623 1385,639 1385,654C1385,669 1387,685 1388,700C1388,715 1389,731 1389,746C1390,761 1389,777 1389,792C1389,807 1389,823 1391,838C1392,853 1395,869 1397,884C1399,899 1402,915 1404,930C1406,945 1408,961 1409,976C1410,991 1410,1007 1410,1022C1410,1037 1409,1053 1408,1068C1406,1083 1404,1099 1402,1114C1399,1129 1396,1145 1393,1160C1391,1175 1388,1191 1387,1206C1386,1221 1387,1237 1388,1252C1388,1267 1391,1283 1392,1298C1393,1313 1393,1329 1393,1344C1392,1359 1389,1375 1387,1390C1385,1405 1381,1421 1381,1436C1381,1451 1384,1467 1386,1482C1388,1497 1392,1513 1394,1528C1395,1543 1394,1559 1394,1574C1394,1589 1392,1605 1391,1620C1391,1635 1393,1658 1393,1666M1406,470C1406,478 1408,501 1407,516C1407,531 1404,547 1401,562C1399,577 1396,593 1394,608C1393,623 1393,639 1393,654C1394,669 1396,685 1397,700C1398,715 1398,731 1399,746C1400,761 1400,777 1401,792C1402,807 1404,823 1406,838C1408,853 1411,869 1413,884C1415,899 1417,915 1418,930C1420,945 1420,961 1420,976C1420,991 1420,1007 1419,1022C1419,1037 1417,1053 1415,1068C1414,1083 1411,1099 1408,1114C1406,1129 1402,1145 1400,1160C1398,1175 1397,1191 1397,1206C1398,1221 1400,1237 1402,1252C1404,1267 1407,1283 1408,1298C1409,1313 1408,1329 1406,1344C1405,1359 1400,1375 1397,1390C1395,1405 1390,1421 1389,1436C1388,1451 1391,1467 1393,1482C1395,1497 1399,1513 1400,1528C1402,1543 1400,1559 1400,1574C1400,1589 1398,1605 1399,1620C1399,1635 1402,1658 1403,1666M1414,470C1414,478 1414,501 1412,516C1411,531 1408,547 1405,562C1403,577 1400,593 1399,608C1398,623 1399,639 1399,654C1400,669 1402,685 1404,700C1405,715 1406,731 1407,746C1408,761 1409,777 1411,792C1412,807 1414,823 1416,838C1418,853 1421,869 1423,884C1424,899 1425,915 1426,930C1426,945 1426,961 1426,976C1426,991 1425,1007 1424,1022C1423,1037 1422,1053 1420,1068C1418,1083 1415,1099 1412,1114C1410,1129 1407,1145 1406,1160C1404,1175 1404,1191 1405,1206C1407,1221 1410,1237 1413,1252C1415,1267 1418,1283 1418,1298C1418,1313 1416,1329 1414,1344C1411,1359 1406,1375 1402,1390C1399,1405 1393,1421 1392,1436C1391,1451 1394,1467 1396,1482C1398,1497 1403,1513 1405,1528C1406,1543 1405,1559 1405,1574C1405,1589 1404,1605 1406,1620C1407,1635 1411,1658 1412,1666M1423,470C1422,478 1420,501 1418,516C1417,531 1413,547 1411,562C1409,577 1407,593 1407,608C1407,623 1409,639 1410,654C1412,669 1414,685 1416,700C1418,715 1419,731 1420,746C1422,761 1423,777 1425,792C1426,807 1428,823 1430,838C1431,853 1433,869 1434,884C1435,899 1434,915 1434,930C1434,945 1433,961 1432,976C1431,991 1431,1007 1430,1022C1429,1037 1428,1053 1426,1068C1425,1083 1422,1099 1420,1114C1418,1129 1416,1145 1416,1160C1416,1175 1417,1191 1419,1206C1421,1221 1426,1237 1428,1252C1430,1267 1431,1283 1431,1298C1430,1313 1426,1329 1424,1344C1422,1359 1420,1375 1420,1390C1420,1405 1424,1421 1425,1436C1426,1451 1427,1467 1426,1482C1425,1497 1421,1513 1419,1528C1418,1543 1416,1559 1415,1574C1415,1589 1416,1605 1417,1620C1419,1635 1424,1658 1425,1666M1429,470C1428,478 1426,501 1424,516C1422,531 1419,547 1418,562C1417,577 1416,593 1417,608C1418,623 1420,639 1422,654C1424,669 1427,685 1428,700C1430,715 1431,731 1432,746C1434,761 1435,777 1436,792C1437,807 1439,823 1440,838C1441,853 1441,869 1441,884C1441,899 1440,915 1439,930C1438,945 1437,961 1436,976C1436,991 1436,1007 1436,1022C1435,1037 1435,1053 1434,1068C1433,1083 1430,1099 1429,1114C1428,1129 1426,1145 1427,1160C1427,1175 1430,1191 1432,1206C1434,1221 1439,1237 1440,1252C1442,1267 1442,1283 1440,1298C1438,1313 1432,1329 1429,1344C1426,1359 1423,1375 1423,1390C1423,1405 1427,1421 1429,1436C1430,1451 1432,1467 1432,1482C1432,1497 1429,1513 1428,1528C1427,1543 1426,1559 1426,1574C1426,1589 1428,1605 1430,1620C1432,1635 1436,1658 1438,1666M1438,470C1438,478 1434,501 1433,516C1432,531 1431,547 1431,562C1431,577 1433,593 1435,608C1436,623 1439,639 1441,654C1443,669 1444,685 1445,700C1446,715 1446,731 1447,746C1447,761 1448,777 1448,792C1449,807 1450,823 1450,838C1450,853 1449,869 1448,884C1447,899 1446,915 1445,930C1444,945 1444,961 1445,976C1445,991 1447,1007 1448,1022C1448,1037 1449,1053 1448,1068C1448,1083 1446,1099 1445,1114C1444,1129 1443,1145 1444,1160C1445,1175 1448,1191 1450,1206C1452,1221 1456,1237 1456,1252C1455,1267 1453,1283 1449,1298C1446,1313 1438,1329 1434,1344C1431,1359 1428,1375 1429,1390C1429,1405 1435,1421 1438,1436C1441,1451 1444,1467 1445,1482C1446,1497 1445,1513 1444,1528C1444,1543 1443,1559 1443,1574C1444,1589 1446,1605 1447,1620C1449,1635 1453,1658 1454,1666M1453,470C1453,478 1451,501 1451,516C1451,531 1452,547 1454,562C1455,577 1458,593 1459,608C1460,623 1462,639 1462,654C1462,669 1460,685 1460,700C1459,715 1457,731 1457,746C1457,761 1457,777 1457,792C1458,807 1459,823 1459,838C1459,853 1458,869 1458,884C1458,899 1458,915 1459,930C1460,945 1462,961 1464,976C1466,991 1469,1007 1471,1022C1472,1037 1472,1053 1471,1068C1470,1083 1467,1099 1466,1114C1465,1129 1464,1145 1464,1160C1464,1175 1468,1191 1469,1206C1470,1221 1472,1237 1470,1252C1468,1267 1463,1283 1458,1298C1454,1313 1445,1329 1442,1344C1439,1359 1439,1375 1442,1390C1444,1405 1453,1421 1457,1436C1461,1451 1466,1467 1468,1482C1469,1497 1467,1513 1466,1528C1466,1543 1464,1559 1463,1574C1463,1589 1464,1605 1465,1620C1466,1635 1467,1658 1468,1666M1476,470C1476,478 1475,501 1476,516C1476,531 1478,547 1478,562C1479,577 1479,593 1479,608C1478,623 1475,639 1473,654C1471,669 1468,685 1466,700C1465,715 1464,731 1465,746C1466,761 1469,777 1471,792C1473,807 1476,823 1477,838C1479,853 1480,869 1481,884C1483,899 1484,915 1486,930C1489,945 1492,961 1494,976C1496,991 1499,1007 1499,1022C1498,1037 1495,1053 1493,1068C1490,1083 1485,1099 1483,1114C1482,1129 1481,1145 1481,1160C1482,1175 1486,1191 1487,1206C1488,1221 1489,1237 1486,1252C1484,1267 1477,1283 1472,1298C1467,1313 1459,1329 1458,1344C1456,1359 1459,1375 1464,1390C1468,1405 1478,1421 1482,1436C1487,1451 1490,1467 1490,1482C1490,1497 1486,1513 1484,1528C1482,1543 1479,1559 1478,1574C1477,1589 1479,1605 1479,1620C1480,1635 1482,1658 1482,1666M1493,470C1493,478 1492,501 1491,516C1491,531 1492,547 1491,562C1490,577 1489,593 1486,608C1484,623 1480,639 1478,654C1476,669 1474,685 1474,700C1474,715 1477,731 1481,746C1484,761 1490,777 1494,792C1497,807 1501,823 1503,838C1505,853 1506,869 1507,884C1509,899 1510,915 1511,930C1513,945 1515,961 1516,976C1516,991 1516,1007 1514,1022C1512,1037 1507,1053 1504,1068C1501,1083 1496,1099 1495,1114C1493,1129 1495,1145 1497,1160C1498,1175 1504,1191 1505,1206C1506,1221 1506,1237 1503,1252C1500,1267 1491,1283 1486,1298C1481,1313 1472,1329 1471,1344C1470,1359 1475,1375 1480,1390C1484,1405 1494,1421 1498,1436C1502,1451 1503,1467 1502,1482C1502,1497 1496,1513 1494,1528C1492,1543 1490,1559 1490,1574C1490,1589 1493,1605 1495,1620C1496,1635 1499,1658 1500,1666M1499,470C1499,478 1497,501 1496,516C1496,531 1496,547 1495,562C1494,577 1492,593 1490,608C1488,623 1484,639 1482,654C1481,669 1480,685 1481,700C1483,715 1488,731 1492,746C1496,761 1503,777 1507,792C1511,807 1514,823 1516,838C1518,853 1517,869 1518,884C1519,899 1519,915 1520,930C1521,945 1523,961 1523,976C1523,991 1522,1007 1519,1022C1517,1037 1511,1053 1508,1068C1505,1083 1501,1099 1501,1114C1500,1129 1503,1145 1505,1160C1508,1175 1513,1191 1515,1206C1517,1221 1517,1237 1516,1252C1516,1267 1512,1283 1510,1298C1509,1313 1508,1329 1507,1344C1507,1359 1508,1375 1509,1390C1510,1405 1512,1421 1512,1436C1512,1451 1511,1467 1509,1482C1507,1497 1502,1513 1500,1528C1498,1543 1497,1559 1498,1574C1499,1589 1502,1605 1504,1620C1506,1635 1509,1658 1510,1666M1504,470C1503,478 1501,501 1500,516C1500,531 1500,547 1499,562C1498,577 1496,593 1494,608C1492,623 1488,639 1487,654C1487,669 1487,685 1490,700C1492,715 1498,731 1503,746C1508,761 1515,777 1519,792C1522,807 1525,823 1526,838C1527,853 1526,869 1526,884C1526,899 1526,915 1526,930C1527,945 1528,961 1528,976C1527,991 1525,1007 1523,1022C1520,1037 1515,1053 1512,1068C1510,1083 1507,1099 1507,1114C1507,1129 1511,1145 1514,1160C1517,1175 1522,1191 1524,1206C1525,1221 1524,1237 1523,1252C1521,1267 1517,1283 1515,1298C1513,1313 1512,1329 1511,1344C1511,1359 1513,1375 1514,1390C1515,1405 1517,1421 1517,1436C1517,1451 1516,1467 1514,1482C1512,1497 1508,1513 1506,1528C1505,1543 1505,1559 1506,1574C1507,1589 1512,1605 1514,1620C1516,1635 1518,1658 1519,1666M1508,470C1508,478 1506,501 1506,516C1506,531 1507,547 1506,562C1505,577 1503,593 1501,608C1500,623 1496,639 1497,654C1497,669 1498,685 1502,700C1505,715 1513,731 1518,746C1523,761 1529,777 1532,792C1536,807 1536,823 1536,838C1537,853 1534,869 1534,884C1533,899 1533,915 1533,930C1532,945 1534,961 1533,976C1532,991 1530,1007 1528,1022C1526,1037 1521,1053 1519,1068C1517,1083 1516,1099 1517,1114C1518,1129 1523,1145 1526,1160C1528,1175 1533,1191 1534,1206C1535,1221 1533,1237 1530,1252C1528,1267 1522,1283 1520,1298C1517,1313 1516,1329 1516,1344C1516,1359 1519,1375 1520,1390C1522,1405 1524,1421 1525,1436C1525,1451 1523,1467 1522,1482C1520,1497 1517,1513 1516,1528C1516,1543 1517,1559 1518,1574C1520,1589 1524,1605 1526,1620C1528,1635 1530,1658 1531,1666M1514,470C1514,478 1514,501 1514,516C1515,531 1516,547 1516,562C1515,577 1513,593 1512,608C1510,623 1508,639 1508,654C1509,669 1512,685 1516,700C1520,715 1528,731 1532,746C1537,761 1542,777 1544,792C1546,807 1545,823 1544,838C1544,853 1540,869 1539,884C1538,899 1538,915 1538,930C1538,945 1540,961 1539,976C1539,991 1537,1007 1535,1022C1534,1037 1530,1053 1529,1068C1527,1083 1527,1099 1529,1114C1531,1129 1536,1145 1539,1160C1541,1175 1545,1191 1544,1206C1544,1221 1540,1237 1537,1252C1533,1267 1527,1283 1525,1298C1522,1313 1522,1329 1523,1344C1523,1359 1527,1375 1529,1390C1531,1405 1534,1421 1535,1436C1536,1451 1534,1467 1533,1482C1532,1497 1529,1513 1529,1528C1529,1543 1530,1559 1532,1574C1534,1589 1538,1605 1540,1620C1541,1635 1541,1658 1542,1666M1526,470C1526,478 1529,501 1531,516C1532,531 1534,547 1533,562C1533,577 1529,593 1528,608C1526,623 1523,639 1524,654C1524,669 1528,685 1532,700C1536,715 1543,731 1547,746C1551,761 1554,777 1555,792C1556,807 1553,823 1552,838C1550,853 1547,869 1547,884C1546,899 1548,915 1548,930C1549,945 1552,961 1552,976C1552,991 1551,1007 1549,1022C1548,1037 1545,1053 1545,1068C1544,1083 1545,1099 1547,1114C1548,1129 1553,1145 1555,1160C1556,1175 1558,1191 1556,1206C1554,1221 1548,1237 1544,1252C1540,1267 1534,1283 1533,1298C1531,1313 1533,1329 1535,1344C1537,1359 1543,1375 1546,1390C1549,1405 1552,1421 1553,1436C1553,1451 1551,1467 1551,1482C1550,1497 1547,1513 1547,1528C1547,1543 1549,1559 1550,1574C1551,1589 1554,1605 1555,1620C1555,1635 1554,1658 1553,1666M1539,470C1540,478 1545,501 1547,516C1548,531 1548,547 1547,562C1545,577 1540,593 1538,608C1535,623 1531,639 1532,654C1532,669 1536,685 1540,700C1544,715 1551,731 1554,746C1558,761 1560,777 1561,792C1561,807 1558,823 1557,838C1556,853 1554,869 1555,884C1555,899 1558,915 1560,930C1561,945 1564,961 1564,976C1565,991 1563,1007 1562,1022C1561,1037 1558,1053 1557,1068C1557,1083 1558,1099 1559,1114C1560,1129 1564,1145 1565,1160C1566,1175 1565,1191 1563,1206C1561,1221 1554,1237 1550,1252C1547,1267 1542,1283 1542,1298C1542,1313 1545,1329 1549,1344C1552,1359 1558,1375 1562,1390C1565,1405 1567,1421 1567,1436C1568,1451 1565,1467 1564,1482C1562,1497 1560,1513 1559,1528C1559,1543 1560,1559 1561,1574C1562,1589 1563,1605 1563,1620C1564,1635 1562,1658 1561,1666M1549,470C1550,478 1556,501 1557,516C1558,531 1557,547 1554,562C1552,577 1545,593 1542,608C1539,623 1535,639 1535,654C1535,669 1539,685 1543,700C1547,715 1555,731 1558,746C1562,761 1564,777 1564,792C1565,807 1562,823 1562,838C1562,853 1561,869 1562,884C1563,899 1566,915 1568,930C1570,945 1573,961 1573,976C1573,991 1571,1007 1570,1022C1569,1037 1565,1053 1565,1068C1564,1083 1565,1099 1566,1114C1567,1129 1571,1145 1571,1160C1571,1175 1570,1191 1568,1206C1565,1221 1558,1237 1555,1252C1552,1267 1549,1283 1549,1298C1550,1313 1555,1329 1558,1344C1562,1359 1569,1375 1572,1390C1575,1405 1576,1421 1576,1436C1576,1451 1572,1467 1570,1482C1569,1497 1566,1513 1565,1528C1565,1543 1566,1559 1567,1574C1567,1589 1569,1605 1568,1620C1568,1635 1567,1658 1566,1666M1581,470C1583,478 1592,501 1594,516C1597,531 1598,547 1597,562C1597,577 1592,593 1590,608C1588,623 1586,639 1586,654C1585,669 1588,685 1589,700C1590,715 1592,731 1592,746C1592,761 1590,777 1589,792C1587,807 1584,823 1583,838C1582,853 1583,869 1584,884C1585,899 1589,915 1591,930C1592,945 1593,961 1593,976C1592,991 1588,1007 1586,1022C1584,1037 1581,1053 1581,1068C1580,1083 1581,1099 1582,1114C1582,1129 1585,1145 1585,1160C1584,1175 1583,1191 1580,1206C1578,1221 1573,1237 1571,1252C1570,1267 1569,1283 1571,1298C1573,1313 1579,1329 1583,1344C1586,1359 1591,1375 1593,1390C1595,1405 1593,1421 1592,1436C1590,1451 1585,1467 1583,1482C1581,1497 1578,1513 1578,1528C1577,1543 1579,1559 1579,1574C1580,1589 1581,1605 1582,1620C1582,1635 1581,1658 1581,1666M1596,470C1597,478 1603,501 1604,516C1605,531 1602,547 1600,562C1598,577 1593,593 1592,608C1590,623 1589,639 1590,654C1592,669 1596,685 1599,700C1601,715 1605,731 1605,746C1606,761 1604,777 1602,792C1601,807 1598,823 1598,838C1597,853 1598,869 1599,884C1600,899 1604,915 1604,930C1605,945 1605,961 1603,976C1602,991 1598,1007 1596,1022C1594,1037 1591,1053 1591,1068C1591,1083 1592,1099 1593,1114C1594,1129 1596,1145 1595,1160C1595,1175 1593,1191 1591,1206C1589,1221 1585,1237 1584,1252C1583,1267 1584,1283 1586,1298C1588,1313 1594,1329 1597,1344C1600,1359 1604,1375 1604,1390C1605,1405 1602,1421 1600,1436C1597,1451 1592,1467 1590,1482C1588,1497 1587,1513 1587,1528C1587,1543 1589,1559 1590,1574C1591,1589 1593,1605 1594,1620C1594,1635 1594,1658 1594,1666M1606,470C1607,478 1610,501 1610,516C1610,531 1606,547 1603,562C1601,577 1596,593 1596,608C1595,623 1597,639 1599,654C1602,669 1609,685 1612,700C1615,715 1619,731 1619,746C1620,761 1617,777 1616,792C1614,807 1611,823 1610,838C1609,853 1610,869 1611,884C1611,899 1614,915 1614,930C1614,945 1613,961 1611,976C1609,991 1606,1007 1604,1022C1602,1037 1601,1053 1601,1068C1601,1083 1603,1099 1604,1114C1605,1129 1606,1145 1605,1160C1605,1175 1603,1191 1601,1206C1599,1221 1596,1237 1595,1252C1595,1267 1596,1283 1599,1298C1601,1313 1606,1329 1609,1344C1611,1359 1613,1375 1612,1390C1612,1405 1609,1421 1606,1436C1604,1451 1600,1467 1599,1482C1597,1497 1597,1513 1598,1528C1598,1543 1601,1559 1602,1574C1604,1589 1605,1605 1606,1620C1607,1635 1607,1658 1607,1666M1617,470C1617,478 1619,501 1617,516C1616,531 1612,547 1610,562C1608,577 1605,593 1606,608C1607,623 1611,639 1616,654C1620,669 1627,685 1631,700C1634,715 1636,731 1636,746C1635,761 1631,777 1628,792C1626,807 1622,823 1621,838C1620,853 1621,869 1621,884C1621,899 1623,915 1623,930C1623,945 1621,961 1620,976C1619,991 1616,1007 1615,1022C1615,1037 1615,1053 1616,1068C1616,1083 1618,1099 1618,1114C1618,1129 1618,1145 1617,1160C1616,1175 1613,1191 1611,1206C1610,1221 1607,1237 1608,1252C1608,1267 1610,1283 1612,1298C1614,1313 1619,1329 1621,1344C1622,1359 1623,1375 1622,1390C1622,1405 1618,1421 1616,1436C1614,1451 1612,1467 1611,1482C1611,1497 1612,1513 1613,1528C1614,1543 1617,1559 1618,1574C1619,1589 1620,1605 1620,1620C1621,1635 1620,1658 1620,1666M1623,470C1623,478 1625,501 1623,516C1622,531 1618,547 1617,562C1615,577 1613,593 1615,608C1617,623 1622,639 1627,654C1631,669 1638,685 1641,700C1644,715 1645,731 1644,746C1642,761 1637,777 1634,792C1631,807 1627,823 1626,838C1624,853 1626,869 1626,884C1627,899 1628,915 1629,930C1629,945 1627,961 1627,976C1626,991 1624,1007 1624,1022C1624,1037 1625,1053 1625,1068C1625,1083 1627,1099 1626,1114C1626,1129 1624,1145 1623,1160C1621,1175 1618,1191 1617,1206C1616,1221 1614,1237 1615,1252C1615,1267 1618,1283 1620,1298C1622,1313 1627,1329 1628,1344C1630,1359 1630,1375 1629,1390C1628,1405 1625,1421 1624,1436C1622,1451 1620,1467 1620,1482C1620,1497 1622,1513 1623,1528C1624,1543 1626,1559 1627,1574C1628,1589 1628,1605 1628,1620C1628,1635 1628,1658 1628,1666M1631,470C1631,478 1632,501 1631,516C1630,531 1626,547 1625,562C1624,577 1623,593 1625,608C1627,623 1633,639 1638,654C1642,669 1648,685 1650,700C1652,715 1652,731 1649,746C1647,761 1641,777 1638,792C1634,807 1631,823 1630,838C1629,853 1631,869 1632,884C1632,899 1635,915 1635,930C1635,945 1635,961 1634,976C1634,991 1633,1007 1633,1022C1633,1037 1635,1053 1635,1068C1635,1083 1635,1099 1634,1114C1633,1129 1630,1145 1628,1160C1626,1175 1623,1191 1622,1206C1621,1221 1621,1237 1622,1252C1623,1267 1626,1283 1629,1298C1631,1313 1635,1329 1637,1344C1638,1359 1638,1375 1637,1390C1636,1405 1633,1421 1632,1436C1631,1451 1629,1467 1629,1482C1629,1497 1631,1513 1632,1528C1633,1543 1634,1559 1635,1574C1635,1589 1635,1605 1635,1620C1635,1635 1635,1658 1635,1666M1640,470C1640,478 1640,501 1639,516C1638,531 1634,547 1633,562C1632,577 1632,593 1635,608C1637,623 1643,639 1647,654C1651,669 1657,685 1658,700C1659,715 1656,731 1654,746C1651,761 1644,777 1641,792C1637,807 1635,823 1634,838C1634,853 1637,869 1638,884C1639,899 1642,915 1643,930C1643,945 1643,961 1643,976C1643,991 1643,1007 1643,1022C1643,1037 1644,1053 1644,1068C1644,1083 1642,1099 1640,1114C1638,1129 1635,1145 1632,1160C1630,1175 1628,1191 1628,1206C1627,1221 1628,1237 1630,1252C1632,1267 1636,1283 1638,1298C1641,1313 1645,1329 1646,1344C1647,1359 1646,1375 1645,1390C1644,1405 1642,1421 1640,1436C1639,1451 1638,1467 1638,1482C1638,1497 1640,1513 1640,1528C1641,1543 1642,1559 1642,1574C1642,1589 1642,1605 1642,1620C1642,1635 1642,1658 1642,1666M1652,470C1652,478 1651,501 1650,516C1649,531 1644,547 1643,562C1643,577 1643,593 1645,608C1648,623 1654,639 1657,654C1660,669 1664,685 1664,700C1664,715 1661,731 1657,746C1654,761 1647,777 1645,792C1642,807 1641,823 1641,838C1642,853 1646,869 1648,884C1650,899 1653,915 1654,930C1655,945 1655,961 1656,976C1656,991 1657,1007 1659,1022C1661,1037 1665,1053 1668,1068C1671,1083 1676,1099 1676,1114C1677,1129 1675,1145 1672,1160C1669,1175 1661,1191 1657,1206C1653,1221 1649,1237 1649,1252C1648,1267 1651,1283 1652,1298C1654,1313 1657,1329 1657,1344C1658,1359 1657,1375 1655,1390C1654,1405 1651,1421 1650,1436C1649,1451 1648,1467 1648,1482C1648,1497 1649,1513 1649,1528C1649,1543 1650,1559 1650,1574C1650,1589 1650,1605 1650,1620C1650,1635 1651,1658 1651,1666M1672,470C1671,478 1668,501 1665,516C1663,531 1658,547 1657,562C1656,577 1657,593 1659,608C1661,623 1667,639 1669,654C1672,669 1674,685 1673,700C1673,715 1668,731 1665,746C1662,761 1657,777 1656,792C1655,807 1656,823 1658,838C1660,853 1666,869 1669,884C1671,899 1674,915 1675,930C1676,945 1676,961 1677,976C1677,991 1678,1007 1679,1022C1680,1037 1683,1053 1684,1068C1686,1083 1688,1099 1688,1114C1687,1129 1685,1145 1682,1160C1680,1175 1675,1191 1673,1206C1670,1221 1670,1237 1670,1252C1670,1267 1673,1283 1674,1298C1675,1313 1675,1329 1675,1344C1674,1359 1671,1375 1669,1390C1667,1405 1665,1421 1663,1436C1662,1451 1662,1467 1662,1482C1661,1497 1662,1513 1662,1528C1662,1543 1663,1559 1663,1574C1664,1589 1665,1605 1666,1620C1667,1635 1669,1658 1670,1666M1687,470C1685,478 1679,501 1676,516C1672,531 1669,547 1668,562C1668,577 1671,593 1674,608C1677,623 1683,639 1686,654C1688,669 1690,685 1690,700C1689,715 1685,731 1683,746C1680,761 1677,777 1677,792C1677,807 1680,823 1683,838C1686,853 1691,869 1694,884C1696,899 1698,915 1699,930C1700,945 1699,961 1699,976C1700,991 1700,1007 1701,1022C1701,1037 1703,1053 1703,1068C1703,1083 1704,1099 1703,1114C1702,1129 1700,1145 1698,1160C1697,1175 1694,1191 1694,1206C1693,1221 1693,1237 1693,1252C1693,1267 1694,1283 1693,1298C1692,1313 1690,1329 1688,1344C1686,1359 1682,1375 1681,1390C1679,1405 1677,1421 1677,1436C1677,1451 1677,1467 1678,1482C1678,1497 1679,1513 1680,1528C1681,1543 1682,1559 1684,1574C1685,1589 1687,1605 1689,1620C1691,1635 1693,1658 1694,1666M1692,470C1690,478 1683,501 1680,516C1678,531 1675,547 1676,562C1677,577 1681,593 1685,608C1688,623 1695,639 1697,654C1700,669 1701,685 1700,700C1700,715 1695,731 1693,746C1691,761 1688,777 1688,792C1688,807 1692,823 1695,838C1698,853 1702,869 1705,884C1707,899 1708,915 1709,930C1710,945 1709,961 1710,976C1710,991 1711,1007 1711,1022C1712,1037 1712,1053 1712,1068C1712,1083 1712,1099 1711,1114C1710,1129 1708,1145 1707,1160C1705,1175 1704,1191 1703,1206C1702,1221 1703,1237 1702,1252C1701,1267 1701,1283 1700,1298C1698,1313 1695,1329 1693,1344C1691,1359 1688,1375 1687,1390C1686,1405 1685,1421 1686,1436C1686,1451 1687,1467 1688,1482C1689,1497 1690,1513 1692,1528C1693,1543 1694,1559 1696,1574C1697,1589 1700,1605 1701,1620C1703,1635 1704,1658 1705,1666M1696,470C1694,478 1687,501 1684,516C1682,531 1681,547 1683,562C1684,577 1690,593 1694,608C1698,623 1704,639 1706,654C1709,669 1709,685 1708,700C1707,715 1703,731 1701,746C1698,761 1695,777 1695,792C1696,807 1699,823 1702,838C1705,853 1709,869 1712,884C1714,899 1715,915 1716,930C1717,945 1717,961 1717,976C1717,991 1718,1007 1718,1022C1719,1037 1719,1053 1719,1068C1718,1083 1717,1099 1716,1114C1715,1129 1713,1145 1712,1160C1711,1175 1710,1191 1709,1206C1708,1221 1709,1237 1708,1252C1707,1267 1706,1283 1704,1298C1702,1313 1699,1329 1697,1344C1695,1359 1693,1375 1692,1390C1692,1405 1692,1421 1693,1436C1694,1451 1695,1467 1696,1482C1698,1497 1699,1513 1700,1528C1701,1543 1702,1559 1704,1574C1706,1589 1708,1605 1710,1620C1711,1635 1712,1658 1712,1666M1706,470C1705,478 1700,501 1700,516C1699,531 1701,547 1704,562C1707,577 1714,593 1718,608C1721,623 1726,639 1727,654C1729,669 1728,685 1726,700C1724,715 1718,731 1716,746C1713,761 1710,777 1710,792C1710,807 1714,823 1717,838C1720,853 1725,869 1727,884C1730,899 1731,915 1733,930C1734,945 1734,961 1735,976C1735,991 1736,1007 1735,1022C1735,1037 1733,1053 1732,1068C1731,1083 1729,1099 1728,1114C1726,1129 1725,1145 1725,1160C1724,1175 1724,1191 1724,1206C1723,1221 1723,1237 1721,1252C1720,1267 1718,1283 1716,1298C1715,1313 1712,1329 1711,1344C1710,1359 1710,1375 1710,1390C1710,1405 1712,1421 1713,1436C1715,1451 1716,1467 1717,1482C1718,1497 1718,1513 1719,1528C1720,1543 1721,1559 1723,1574C1724,1589 1727,1605 1728,1620C1729,1635 1728,1658 1728,1666M1717,470C1716,478 1713,501 1714,516C1715,531 1718,547 1721,562C1724,577 1730,593 1733,608C1737,623 1739,639 1740,654C1741,669 1740,685 1740,700C1740,715 1741,731 1742,746C1743,761 1747,777 1748,792C1750,807 1750,823 1750,838C1749,853 1747,869 1747,884C1746,899 1746,915 1746,930C1746,945 1747,961 1747,976C1747,991 1747,1007 1746,1022C1744,1037 1742,1053 1741,1068C1739,1083 1737,1099 1736,1114C1735,1129 1735,1145 1735,1160C1735,1175 1735,1191 1735,1206C1735,1221 1734,1237 1733,1252C1732,1267 1729,1283 1728,1298C1726,1313 1724,1329 1724,1344C1723,1359 1724,1375 1724,1390C1725,1405 1727,1421 1728,1436C1729,1451 1729,1467 1729,1482C1730,1497 1730,1513 1731,1528C1731,1543 1733,1559 1734,1574C1736,1589 1739,1605 1739,1620C1740,1635 1739,1658 1739,1666M1729,470C1729,478 1727,501 1729,516C1730,531 1734,547 1737,562C1740,577 1744,593 1747,608C1749,623 1750,639 1750,654C1750,669 1748,685 1748,700C1748,715 1749,731 1751,746C1752,761 1756,777 1758,792C1759,807 1760,823 1760,838C1760,853 1759,869 1758,884C1758,899 1758,915 1759,930C1759,945 1759,961 1759,976C1758,991 1757,1007 1755,1022C1754,1037 1751,1053 1749,1068C1747,1083 1746,1099 1745,1114C1745,1129 1746,1145 1747,1160C1747,1175 1749,1191 1749,1206C1749,1221 1748,1237 1746,1252C1745,1267 1742,1283 1741,1298C1739,1313 1738,1329 1737,1344C1737,1359 1738,1375 1738,1390C1738,1405 1739,1421 1740,1436C1740,1451 1739,1467 1739,1482C1740,1497 1739,1513 1740,1528C1741,1543 1744,1559 1745,1574C1747,1589 1750,1605 1751,1620C1752,1635 1751,1658 1751,1666M1746,470C1746,478 1747,501 1748,516C1750,531 1753,547 1756,562C1758,577 1760,593 1762,608C1763,623 1762,639 1762,654C1762,669 1760,685 1761,700C1762,715 1764,731 1766,746C1768,761 1772,777 1774,792C1775,807 1776,823 1776,838C1776,853 1775,869 1775,884C1775,899 1776,915 1775,930C1775,945 1775,961 1774,976C1773,991 1771,1007 1769,1022C1767,1037 1764,1053 1763,1068C1762,1083 1762,1099 1763,1114C1764,1129 1767,1145 1768,1160C1769,1175 1770,1191 1770,1206C1769,1221 1767,1237 1765,1252C1763,1267 1759,1283 1757,1298C1755,1313 1754,1329 1753,1344C1753,1359 1753,1375 1753,1390C1753,1405 1752,1421 1752,1436C1752,1451 1750,1467 1750,1482C1751,1497 1751,1513 1753,1528C1755,1543 1759,1559 1762,1574C1764,1589 1767,1605 1768,1620C1769,1635 1767,1658 1767,1666M1759,470C1760,478 1761,501 1763,516C1765,531 1768,547 1770,562C1771,577 1773,593 1773,608C1774,623 1773,639 1773,654C1774,669 1773,685 1775,700C1776,715 1779,731 1781,746C1783,761 1787,777 1788,792C1789,807 1789,823 1789,838C1789,853 1789,869 1789,884C1789,899 1789,915 1789,930C1789,945 1789,961 1788,976C1786,991 1783,1007 1782,1022C1780,1037 1778,1053 1777,1068C1777,1083 1778,1099 1780,1114C1781,1129 1785,1145 1786,1160C1787,1175 1787,1191 1785,1206C1784,1221 1780,1237 1777,1252C1774,1267 1770,1283 1768,1298C1766,1313 1765,1329 1764,1344C1763,1359 1763,1375 1763,1390C1762,1405 1761,1421 1760,1436C1759,1451 1758,1467 1759,1482C1760,1497 1763,1513 1765,1528C1768,1543 1773,1559 1776,1574C1779,1589 1782,1605 1782,1620C1783,1635 1780,1658 1779,1666M1768,470C1769,478 1771,501 1773,516C1775,531 1778,547 1779,562C1781,577 1781,593 1782,608C1782,623 1781,639 1782,654C1782,669 1783,685 1784,700C1786,715 1789,731 1791,746C1793,761 1796,777 1797,792C1798,807 1798,823 1798,838C1798,853 1797,869 1797,884C1797,899 1799,915 1798,930C1798,945 1798,961 1796,976C1795,991 1792,1007 1790,1022C1789,1037 1787,1053 1787,1068C1787,1083 1789,1099 1791,1114C1792,1129 1796,1145 1796,1160C1796,1175 1796,1191 1793,1206C1791,1221 1786,1237 1783,1252C1780,1267 1776,1283 1774,1298C1772,1313 1772,1329 1771,1344C1770,1359 1770,1375 1769,1390C1768,1405 1766,1421 1765,1436C1765,1451 1764,1467 1765,1482C1767,1497 1770,1513 1774,1528C1777,1543 1783,1559 1786,1574C1789,1589 1791,1605 1791,1620C1791,1635 1787,1658 1787,1666M1786,470C1788,478 1792,501 1794,516C1796,531 1798,547 1798,562C1799,577 1798,593 1798,608C1798,623 1798,639 1799,654C1799,669 1801,685 1803,700C1805,715 1808,731 1809,746C1811,761 1812,777 1813,792C1813,807 1812,823 1813,838C1813,853 1813,869 1814,884C1815,899 1816,915 1816,930C1816,945 1815,961 1813,976C1812,991 1808,1007 1807,1022C1805,1037 1804,1053 1804,1068C1805,1083 1808,1099 1809,1114C1810,1129 1812,1145 1812,1160C1812,1175 1809,1191 1806,1206C1804,1221 1799,1237 1798,1252C1797,1267 1797,1283 1800,1298C1802,1313 1809,1329 1812,1344C1816,1359 1821,1375 1823,1390C1824,1405 1822,1421 1819,1436C1817,1451 1811,1467 1809,1482C1807,1497 1805,1513 1805,1528C1805,1543 1808,1559 1808,1574C1809,1589 1809,1605 1808,1620C1807,1635 1802,1658 1801,1666M1805,470C1806,478 1810,501 1812,516C1813,531 1814,547 1814,562C1813,577 1811,593 1811,608C1811,623 1810,639 1811,654C1812,669 1815,685 1817,700C1819,715 1821,731 1823,746C1824,761 1824,777 1825,792C1825,807 1825,823 1825,838C1826,853 1827,869 1828,884C1829,899 1831,915 1830,930C1830,945 1828,961 1826,976C1824,991 1820,1007 1818,1022C1817,1037 1816,1053 1817,1068C1818,1083 1821,1099 1822,1114C1823,1129 1825,1145 1824,1160C1823,1175 1819,1191 1817,1206C1815,1221 1810,1237 1810,1252C1810,1267 1812,1283 1815,1298C1818,1313 1825,1329 1828,1344C1832,1359 1835,1375 1836,1390C1836,1405 1832,1421 1829,1436C1827,1451 1822,1467 1820,1482C1818,1497 1818,1513 1818,1528C1818,1543 1821,1559 1822,1574C1822,1589 1821,1605 1820,1620C1819,1635 1815,1658 1814,1666M1827,470C1828,478 1831,501 1831,516C1832,531 1829,547 1828,562C1827,577 1824,593 1823,608C1823,623 1823,639 1825,654C1827,669 1831,685 1833,700C1835,715 1837,731 1838,746C1839,761 1839,777 1839,792C1840,807 1840,823 1841,838C1842,853 1844,869 1845,884C1846,899 1847,915 1846,930C1845,945 1841,961 1839,976C1837,991 1833,1007 1832,1022C1831,1037 1832,1053 1833,1068C1835,1083 1839,1099 1840,1114C1841,1129 1842,1145 1841,1160C1840,1175 1836,1191 1834,1206C1832,1221 1829,1237 1829,1252C1830,1267 1834,1283 1837,1298C1840,1313 1846,1329 1848,1344C1851,1359 1851,1375 1850,1390C1848,1405 1843,1421 1840,1436C1837,1451 1833,1467 1832,1482C1831,1497 1832,1513 1833,1528C1834,1543 1837,1559 1838,1574C1838,1589 1837,1605 1835,1620C1834,1635 1831,1658 1830,1666M1838,470C1838,478 1840,501 1840,516C1839,531 1836,547 1834,562C1832,577 1829,593 1829,608C1828,623 1830,639 1832,654C1834,669 1839,685 1841,700C1844,715 1846,731 1847,746C1848,761 1847,777 1847,792C1848,807 1848,823 1849,838C1850,853 1853,869 1854,884C1854,899 1855,915 1854,930C1852,945 1848,961 1846,976C1844,991 1840,1007 1840,1022C1839,1037 1842,1053 1844,1068C1845,1083 1850,1099 1851,1114C1853,1129 1853,1145 1851,1160C1850,1175 1845,1191 1844,1206C1842,1221 1839,1237 1840,1252C1841,1267 1845,1283 1848,1298C1851,1313 1856,1329 1858,1344C1859,1359 1858,1375 1856,1390C1854,1405 1848,1421 1845,1436C1842,1451 1839,1467 1838,1482C1837,1497 1840,1513 1842,1528C1843,1543 1846,1559 1846,1574C1847,1589 1845,1605 1844,1620C1842,1635 1839,1658 1839,1666M1851,470C1851,478 1851,501 1850,516C1848,531 1843,547 1841,562C1839,577 1837,593 1837,608C1837,623 1841,639 1844,654C1847,669 1852,685 1854,700C1857,715 1858,731 1859,746C1859,761 1858,777 1859,792C1859,807 1860,823 1861,838C1863,853 1866,869 1866,884C1867,899 1867,915 1866,930C1864,945 1860,961 1858,976C1856,991 1853,1007 1854,1022C1854,1037 1858,1053 1861,1068C1863,1083 1867,1099 1868,1114C1869,1129 1868,1145 1866,1160C1864,1175 1859,1191 1857,1206C1855,1221 1854,1237 1855,1252C1856,1267 1860,1283 1863,1298C1865,1313 1869,1329 1869,1344C1869,1359 1866,1375 1863,1390C1860,1405 1854,1421 1852,1436C1849,1451 1848,1467 1848,1482C1848,1497 1852,1513 1854,1528C1856,1543 1859,1559 1859,1574C1859,1589 1857,1605 1855,1620C1854,1635 1851,1658 1851,1666M1859,470C1859,478 1858,501 1856,516C1854,531 1849,547 1847,562C1845,577 1843,593 1844,608C1845,623 1849,639 1852,654C1855,669 1861,685 1863,700C1865,715 1866,731 1867,746C1867,761 1866,777 1866,792C1867,807 1869,823 1870,838C1872,853 1875,869 1876,884C1877,899 1876,915 1875,930C1873,945 1869,961 1867,976C1866,991 1864,1007 1865,1022C1866,1037 1871,1053 1873,1068C1875,1083 1879,1099 1880,1114C1880,1129 1878,1145 1875,1160C1873,1175 1868,1191 1866,1206C1864,1221 1863,1237 1864,1252C1865,1267 1869,1283 1871,1298C1873,1313 1876,1329 1875,1344C1874,1359 1871,1375 1868,1390C1865,1405 1859,1421 1857,1436C1855,1451 1855,1467 1856,1482C1857,1497 1861,1513 1863,1528C1865,1543 1867,1559 1867,1574C1867,1589 1864,1605 1863,1620C1862,1635 1860,1658 1859,1666M1878,470C1877,478 1874,501 1871,516C1868,531 1863,547 1861,562C1859,577 1859,593 1860,608C1862,623 1868,639 1871,654C1875,669 1880,685 1882,700C1884,715 1883,731 1884,746C1884,761 1884,777 1885,792C1887,807 1890,823 1892,838C1895,853 1899,869 1899,884C1900,899 1899,915 1898,930C1896,945 1892,961 1890,976C1889,991 1889,1007 1890,1022C1891,1037 1896,1053 1898,1068C1899,1083 1901,1099 1900,1114C1898,1129 1894,1145 1890,1160C1887,1175 1882,1191 1880,1206C1879,1221 1880,1237 1881,1252C1883,1267 1887,1283 1889,1298C1890,1313 1891,1329 1889,1344C1887,1359 1882,1375 1879,1390C1877,1405 1873,1421 1872,1436C1871,1451 1873,1467 1875,1482C1877,1497 1882,1513 1884,1528C1886,1543 1887,1559 1886,1574C1886,1589 1883,1605 1882,1620C1881,1635 1880,1658 1880,1666M1887,470C1886,478 1882,501 1879,516C1875,531 1869,547 1868,562C1866,577 1866,593 1868,608C1870,623 1876,639 1879,654C1883,669 1887,685 1889,700C1891,715 1891,731 1892,746C1892,761 1893,777 1895,792C1897,807 1901,823 1904,838C1906,853 1910,869 1911,884C1912,899 1910,915 1908,930C1906,945 1901,961 1900,976C1898,991 1898,1007 1899,1022C1900,1037 1905,1053 1906,1068C1907,1083 1908,1099 1906,1114C1904,1129 1899,1145 1895,1160C1892,1175 1888,1191 1887,1206C1886,1221 1888,1237 1890,1252C1891,1267 1896,1283 1897,1298C1898,1313 1898,1329 1896,1344C1894,1359 1889,1375 1886,1390C1883,1405 1880,1421 1880,1436C1880,1451 1883,1467 1885,1482C1887,1497 1892,1513 1894,1528C1895,1543 1896,1559 1895,1574C1895,1589 1892,1605 1891,1620C1890,1635 1890,1658 1890,1666M1902,470C1902,478 1900,501 1900,516C1900,531 1901,547 1903,562C1906,577 1912,593 1915,608C1919,623 1923,639 1923,654C1924,669 1921,685 1918,700C1916,715 1911,731 1909,746C1908,761 1907,777 1909,792C1910,807 1915,823 1918,838C1921,853 1924,869 1925,884C1925,899 1922,915 1919,930C1917,945 1911,961 1910,976C1908,991 1908,1007 1909,1022C1910,1037 1914,1053 1914,1068C1915,1083 1914,1099 1912,1114C1910,1129 1905,1145 1902,1160C1899,1175 1896,1191 1896,1206C1896,1221 1900,1237 1902,1252C1904,1267 1908,1283 1908,1298C1909,1313 1907,1329 1905,1344C1903,1359 1897,1375 1895,1390C1892,1405 1890,1421 1891,1436C1891,1451 1895,1467 1897,1482C1900,1497 1904,1513 1906,1528C1907,1543 1907,1559 1907,1574C1906,1589 1904,1605 1904,1620C1903,1635 1904,1658 1904,1666M1911,470C1911,478 1908,501 1907,516C1907,531 1908,547 1911,562C1913,577 1920,593 1923,608C1927,623 1931,639 1931,654C1932,669 1929,685 1927,700C1925,715 1920,731 1919,746C1918,761 1919,777 1921,792C1923,807 1928,823 1931,838C1933,853 1936,869 1936,884C1935,899 1931,915 1928,930C1925,945 1919,961 1917,976C1915,991 1915,1007 1916,1022C1917,1037 1921,1053 1921,1068C1922,1083 1921,1099 1919,1114C1917,1129 1912,1145 1910,1160C1908,1175 1906,1191 1907,1206C1907,1221 1911,1237 1913,1252C1915,1267 1919,1283 1919,1298C1919,1313 1916,1329 1913,1344C1911,1359 1905,1375 1903,1390C1901,1405 1900,1421 1901,1436C1902,1451 1906,1467 1909,1482C1912,1497 1916,1513 1917,1528C1919,1543 1918,1559 1918,1574C1918,1589 1916,1605 1915,1620C1915,1635 1916,1658 1916,1666M1924,470C1924,478 1919,501 1919,516C1919,531 1921,547 1924,562C1928,577 1935,593 1939,608C1943,623 1947,639 1947,654C1948,669 1944,685 1942,700C1940,715 1937,731 1936,746C1936,761 1938,777 1941,792C1943,807 1948,823 1950,838C1952,853 1952,869 1951,884C1949,899 1943,915 1940,930C1936,945 1930,961 1928,976C1926,991 1927,1007 1928,1022C1929,1037 1934,1053 1934,1068C1935,1083 1934,1099 1933,1114C1931,1129 1928,1145 1927,1160C1926,1175 1926,1191 1927,1206C1929,1221 1933,1237 1934,1252C1936,1267 1937,1283 1936,1298C1935,1313 1930,1329 1927,1344C1924,1359 1919,1375 1918,1390C1917,1405 1918,1421 1920,1436C1922,1451 1927,1467 1930,1482C1933,1497 1936,1513 1937,1528C1938,1543 1937,1559 1936,1574C1935,1589 1934,1605 1933,1620C1932,1635 1932,1658 1932,1666M1931,470C1930,478 1926,501 1926,516C1927,531 1930,547 1934,562C1938,577 1946,593 1950,608C1954,623 1957,639 1957,654C1957,669 1953,685 1951,700C1950,715 1946,731 1946,746C1946,761 1949,777 1951,792C1953,807 1958,823 1960,838C1961,853 1961,869 1959,884C1956,899 1950,915 1947,930C1943,945 1937,961 1935,976C1934,991 1935,1007 1937,1022C1938,1037 1943,1053 1944,1068C1945,1083 1944,1099 1943,1114C1942,1129 1938,1145 1938,1160C1937,1175 1938,1191 1940,1206C1941,1221 1945,1237 1945,1252C1946,1267 1946,1283 1944,1298C1943,1313 1938,1329 1935,1344C1932,1359 1929,1375 1928,1390C1928,1405 1930,1421 1932,1436C1935,1451 1940,1467 1942,1482C1945,1497 1947,1513 1947,1528C1948,1543 1946,1559 1945,1574C1944,1589 1942,1605 1941,1620C1940,1635 1940,1658 1940,1666M1938,470C1937,478 1933,501 1935,516C1936,531 1940,547 1945,562C1949,577 1958,593 1961,608C1965,623 1967,639 1967,654C1967,669 1962,685 1960,700C1958,715 1955,731 1955,746C1956,761 1959,777 1961,792C1964,807 1968,823 1969,838C1970,853 1969,869 1967,884C1964,899 1958,915 1954,930C1951,945 1945,961 1944,976C1942,991 1944,1007 1946,1022C1948,1037 1952,1053 1953,1068C1954,1083 1953,1099 1953,1114C1952,1129 1949,1145 1949,1160C1949,1175 1950,1191 1951,1206C1952,1221 1955,1237 1955,1252C1956,1267 1955,1283 1953,1298C1950,1313 1946,1329 1943,1344C1941,1359 1938,1375 1939,1390C1939,1405 1942,1421 1944,1436C1947,1451 1951,1467 1953,1482C1955,1497 1956,1513 1956,1528C1956,1543 1954,1559 1952,1574C1951,1589 1949,1605 1948,1620C1947,1635 1947,1658 1947,1666M1945,470C1944,478 1942,501 1944,516C1946,531 1951,547 1956,562C1961,577 1969,593 1972,608C1975,623 1976,639 1975,654C1974,669 1969,685 1967,700C1966,715 1963,731 1964,746C1964,761 1968,777 1971,792C1973,807 1977,823 1978,838C1980,853 1978,869 1978,884C1977,899 1975,915 1975,930C1975,945 1979,961 1980,976C1981,991 1983,1007 1982,1022C1982,1037 1978,1053 1975,1068C1971,1083 1966,1099 1964,1114C1961,1129 1959,1145 1958,1160C1958,1175 1960,1191 1961,1206C1962,1221 1964,1237 1964,1252C1964,1267 1962,1283 1960,1298C1958,1313 1953,1329 1951,1344C1949,1359 1948,1375 1949,1390C1949,1405 1953,1421 1955,1436C1957,1451 1961,1467 1962,1482C1963,1497 1963,1513 1963,1528C1962,1543 1960,1559 1958,1574C1957,1589 1955,1605 1954,1620C1953,1635 1954,1658 1953,1666M1965,470C1965,478 1965,501 1968,516C1971,531 1978,547 1982,562C1986,577 1992,593 1994,608C1995,623 1993,639 1991,654C1990,669 1984,685 1983,700C1982,715 1982,731 1983,746C1985,761 1990,777 1993,792C1996,807 2000,823 2001,838C2002,853 1999,869 1999,884C1998,899 1995,915 1995,930C1995,945 1998,961 1998,976C1999,991 2000,1007 1998,1022C1997,1037 1992,1053 1989,1068C1986,1083 1981,1099 1979,1114C1977,1129 1977,1145 1977,1160C1977,1175 1980,1191 1981,1206C1982,1221 1983,1237 1982,1252C1981,1267 1979,1283 1977,1298C1975,1313 1971,1329 1970,1344C1969,1359 1969,1375 1970,1390C1971,1405 1974,1421 1975,1436C1977,1451 1978,1467 1978,1482C1978,1497 1976,1513 1975,1528C1974,1543 1972,1559 1972,1574C1971,1589 1971,1605 1972,1620C1972,1635 1974,1658 1974,1666M1982,470C1983,478 1984,501 1987,516C1990,531 1997,547 2000,562C2003,577 2007,593 2007,608C2008,623 2004,639 2003,654C2001,669 1997,685 1996,700C1996,715 1998,731 2001,746C2003,761 2009,777 2012,792C2015,807 2018,823 2018,838C2018,853 2015,869 2013,884C2012,899 2009,915 2008,930C2007,945 2009,961 2009,976C2009,991 2009,1007 2007,1022C2005,1037 2001,1053 1998,1068C1996,1083 1993,1099 1992,1114C1991,1129 1992,1145 1993,1160C1994,1175 1997,1191 1997,1206C1998,1221 1998,1237 1996,1252C1995,1267 1992,1283 1990,1298C1988,1313 1985,1329 1984,1344C1984,1359 1985,1375 1985,1390C1986,1405 1988,1421 1989,1436C1989,1451 1989,1467 1988,1482C1988,1497 1986,1513 1986,1528C1985,1543 1985,1559 1986,1574C1987,1589 1988,1605 1989,1620C1990,1635 1992,1658 1993,1666M1994,470C1995,478 1996,501 1999,516C2002,531 2008,547 2011,562C2013,577 2016,593 2016,608C2016,623 2012,639 2011,654C2009,669 2006,685 2006,700C2007,715 2010,731 2013,746C2016,761 2022,777 2024,792C2027,807 2028,823 2027,838C2027,853 2023,869 2021,884C2019,899 2016,915 2015,930C2014,945 2015,961 2015,976C2015,991 2014,1007 2013,1022C2011,1037 2007,1053 2005,1068C2004,1083 2002,1099 2002,1114C2002,1129 2004,1145 2005,1160C2006,1175 2008,1191 2009,1206C2009,1221 2007,1237 2006,1252C2004,1267 2000,1283 1998,1298C1996,1313 1994,1329 1994,1344C1993,1359 1995,1375 1996,1390C1996,1405 1997,1421 1998,1436C1998,1451 1997,1467 1996,1482C1996,1497 1995,1513 1995,1528C1995,1543 1996,1559 1997,1574C1998,1589 2000,1605 2001,1620C2002,1635 2004,1658 2004,1666M2013,470C2015,478 2018,501 2021,516C2024,531 2029,547 2031,562C2033,577 2033,593 2033,608C2032,623 2029,639 2028,654C2027,669 2026,685 2027,700C2029,715 2033,731 2036,746C2038,761 2043,777 2044,792C2045,807 2044,823 2042,838C2040,853 2036,869 2034,884C2032,899 2030,915 2029,930C2029,945 2030,961 2030,976C2030,991 2030,1007 2029,1022C2028,1037 2026,1053 2025,1068C2025,1083 2025,1099 2026,1114C2026,1129 2029,1145 2029,1160C2030,1175 2030,1191 2029,1206C2028,1221 2024,1237 2022,1252C2019,1267 2016,1283 2015,1298C2013,1313 2014,1329 2014,1344C2015,1359 2017,1375 2017,1390C2018,1405 2018,1421 2017,1436C2017,1451 2015,1467 2014,1482C2013,1497 2013,1513 2013,1528C2014,1543 2016,1559 2017,1574C2018,1589 2019,1605 2020,1620C2020,1635 2020,1658 2020,1666M2026,470C2028,478 2032,501 2035,516C2038,531 2043,547 2044,562C2045,577 2045,593 2044,608C2043,623 2040,639 2039,654C2038,669 2038,685 2040,700C2041,715 2045,731 2048,746C2050,761 2053,777 2054,792C2054,807 2052,823 2051,838C2049,853 2046,869 2044,884C2043,899 2042,915 2042,930C2042,945 2044,961 2044,976C2044,991 2044,1007 2043,1022C2043,1037 2041,1053 2040,1068C2040,1083 2041,1099 2041,1114C2042,1129 2043,1145 2043,1160C2043,1175 2041,1191 2039,1206C2037,1221 2033,1237 2031,1252C2029,1267 2027,1283 2027,1298C2027,1313 2028,1329 2029,1344C2030,1359 2033,1375 2033,1390C2033,1405 2031,1421 2030,1436C2028,1451 2025,1467 2023,1482C2022,1497 2021,1513 2021,1528C2022,1543 2024,1559 2025,1574C2026,1589 2027,1605 2027,1620C2028,1635 2028,1658 2028,1666M2042,470C2043,478 2049,501 2051,516C2054,531 2057,547 2058,562C2058,577 2056,593 2055,608C2054,623 2050,639 2050,654C2049,669 2050,685 2052,700C2054,715 2058,731 2060,746C2062,761 2065,777 2065,792C2066,807 2064,823 2063,838C2062,853 2060,869 2059,884C2058,899 2059,915 2059,930C2059,945 2061,961 2061,976C2061,991 2060,1007 2059,1022C2058,1037 2056,1053 2055,1068C2054,1083 2055,1099 2055,1114C2055,1129 2056,1145 2055,1160C2054,1175 2051,1191 2049,1206C2047,1221 2043,1237 2042,1252C2041,1267 2041,1283 2043,1298C2044,1313 2048,1329 2050,1344C2053,1359 2057,1375 2059,1390C2062,1405 2064,1421 2066,1436C2067,1451 2068,1467 2067,1482C2067,1497 2065,1513 2062,1528C2060,1543 2056,1559 2052,1574C2049,1589 2045,1605 2043,1620C2041,1635 2042,1658 2041,1666M2063,470C2064,478 2069,501 2070,516C2072,531 2072,547 2072,562C2071,577 2068,593 2066,608C2065,623 2063,639 2063,654C2063,669 2066,685 2068,700C2071,715 2075,731 2078,746C2080,761 2082,777 2083,792C2084,807 2083,823 2082,838C2082,853 2081,869 2081,884C2080,899 2081,915 2080,930C2080,945 2080,961 2079,976C2078,991 2075,1007 2073,1022C2072,1037 2069,1053 2068,1068C2067,1083 2068,1099 2068,1114C2067,1129 2068,1145 2067,1160C2066,1175 2063,1191 2061,1206C2060,1221 2058,1237 2058,1252C2059,1267 2061,1283 2063,1298C2065,1313 2068,1329 2070,1344C2072,1359 2073,1375 2073,1390C2074,1405 2073,1421 2073,1436C2073,1451 2072,1467 2072,1482C2071,1497 2070,1513 2068,1528C2067,1543 2064,1559 2063,1574C2061,1589 2059,1605 2059,1620C2059,1635 2063,1658 2064,1666M2072,470C2073,478 2077,501 2078,516C2079,531 2079,547 2077,562C2076,577 2073,593 2072,608C2071,623 2070,639 2070,654C2071,669 2074,685 2077,700C2080,715 2085,731 2087,746C2090,761 2092,777 2092,792C2093,807 2092,823 2092,838C2092,853 2091,869 2090,884C2090,899 2090,915 2089,930C2088,945 2087,961 2085,976C2084,991 2081,1007 2079,1022C2077,1037 2075,1053 2074,1068C2073,1083 2073,1099 2073,1114C2073,1129 2073,1145 2072,1160C2072,1175 2069,1191 2068,1206C2067,1221 2066,1237 2067,1252C2067,1267 2070,1283 2072,1298C2074,1313 2077,1329 2078,1344C2079,1359 2078,1375 2078,1390C2078,1405 2076,1421 2076,1436C2075,1451 2075,1467 2075,1482C2074,1497 2074,1513 2074,1528C2073,1543 2071,1559 2071,1574C2070,1589 2069,1605 2070,1620C2071,1635 2075,1658 2077,1666M2087,470C2087,478 2089,501 2089,516C2089,531 2088,547 2087,562C2085,577 2083,593 2083,608C2082,623 2083,639 2084,654C2086,669 2090,685 2093,700C2097,715 2101,731 2103,746C2105,761 2106,777 2107,792C2107,807 2106,823 2106,838C2105,853 2104,869 2103,884C2102,899 2101,915 2100,930C2098,945 2097,961 2094,976C2092,991 2089,1007 2087,1022C2085,1037 2083,1053 2083,1068C2082,1083 2083,1099 2083,1114C2083,1129 2083,1145 2082,1160C2082,1175 2080,1191 2079,1206C2079,1221 2078,1237 2079,1252C2080,1267 2083,1283 2085,1298C2086,1313 2088,1329 2088,1344C2088,1359 2086,1375 2085,1390C2084,1405 2082,1421 2082,1436C2082,1451 2083,1467 2084,1482C2085,1497 2087,1513 2087,1528C2088,1543 2087,1559 2088,1574C2088,1589 2088,1605 2090,1620C2091,1635 2096,1658 2097,1666M2093,470C2094,478 2095,501 2095,516C2095,531 2093,547 2092,562C2091,577 2089,593 2089,608C2089,623 2091,639 2093,654C2095,669 2099,685 2102,700C2105,715 2109,731 2111,746C2113,761 2113,777 2114,792C2114,807 2113,823 2112,838C2111,853 2110,869 2109,884C2108,899 2107,915 2105,930C2103,945 2101,961 2099,976C2097,991 2094,1007 2092,1022C2090,1037 2089,1053 2088,1068C2087,1083 2088,1099 2088,1114C2088,1129 2088,1145 2088,1160C2087,1175 2085,1191 2085,1206C2084,1221 2085,1237 2086,1252C2087,1267 2090,1283 2091,1298C2092,1313 2093,1329 2093,1344C2092,1359 2090,1375 2089,1390C2088,1405 2087,1421 2087,1436C2087,1451 2090,1467 2091,1482C2093,1497 2096,1513 2097,1528C2098,1543 2098,1559 2098,1574C2099,1589 2098,1605 2100,1620C2101,1635 2106,1658 2107,1666M2101,470C2101,478 2101,501 2101,516C2101,531 2099,547 2099,562C2098,577 2097,593 2098,608C2099,623 2101,639 2103,654C2106,669 2109,685 2112,700C2115,715 2117,731 2119,746C2120,761 2120,777 2120,792C2120,807 2119,823 2118,838C2117,853 2116,869 2115,884C2114,899 2113,915 2113,930C2113,945 2114,961 2116,976C2118,991 2122,1007 2125,1022C2128,1037 2133,1053 2133,1068C2134,1083 2132,1099 2128,1114C2125,1129 2116,1145 2111,1160C2106,1175 2099,1191 2096,1206C2093,1221 2093,1237 2093,1252C2094,1267 2097,1283 2098,1298C2099,1313 2099,1329 2099,1344C2098,1359 2096,1375 2095,1390C2094,1405 2094,1421 2095,1436C2096,1451 2100,1467 2102,1482C2104,1497 2107,1513 2108,1528C2110,1543 2109,1559 2109,1574C2110,1589 2109,1605 2110,1620C2111,1635 2115,1658 2116,1666M2108,470C2108,478 2108,501 2108,516C2108,531 2106,547 2106,562C2106,577 2106,593 2107,608C2108,623 2111,639 2113,654C2115,669 2118,685 2120,700C2122,715 2124,731 2125,746C2125,761 2125,777 2125,792C2125,807 2124,823 2123,838C2123,853 2122,869 2121,884C2121,899 2120,915 2120,930C2120,945 2121,961 2123,976C2126,991 2130,1007 2133,1022C2136,1037 2141,1053 2141,1068C2141,1083 2138,1099 2134,1114C2130,1129 2121,1145 2116,1160C2110,1175 2104,1191 2101,1206C2098,1221 2099,1237 2100,1252C2100,1267 2104,1283 2105,1298C2106,1313 2106,1329 2106,1344C2106,1359 2103,1375 2103,1390C2103,1405 2103,1421 2105,1436C2106,1451 2111,1467 2113,1482C2116,1497 2119,1513 2120,1528C2121,1543 2119,1559 2119,1574C2119,1589 2118,1605 2118,1620C2119,1635 2122,1658 2122,1666M2114,470C2114,478 2114,501 2114,516C2114,531 2113,547 2113,562C2113,577 2114,593 2115,608C2117,623 2119,639 2121,654C2123,669 2125,685 2126,700C2128,715 2128,731 2129,746C2129,761 2129,777 2129,792C2129,807 2129,823 2128,838C2128,853 2128,869 2127,884C2127,899 2126,915 2127,930C2128,945 2129,961 2131,976C2133,991 2138,1007 2141,1022C2143,1037 2147,1053 2147,1068C2147,1083 2143,1099 2139,1114C2134,1129 2125,1145 2119,1160C2114,1175 2108,1191 2105,1206C2103,1221 2105,1237 2106,1252C2107,1267 2111,1283 2112,1298C2113,1313 2113,1329 2113,1344C2113,1359 2111,1375 2111,1390C2111,1405 2112,1421 2114,1436C2116,1451 2121,1467 2124,1482C2126,1497 2128,1513 2128,1528C2129,1543 2126,1559 2126,1574C2125,1589 2123,1605 2123,1620C2124,1635 2126,1658 2127,1666M2129,470C2129,478 2128,501 2129,516C2129,531 2128,547 2129,562C2129,577 2131,593 2132,608C2133,623 2134,639 2135,654C2136,669 2136,685 2136,700C2136,715 2135,731 2136,746C2136,761 2137,777 2138,792C2139,807 2141,823 2142,838C2143,853 2143,869 2144,884C2144,899 2144,915 2145,930C2146,945 2147,961 2149,976C2151,991 2156,1007 2157,1022C2159,1037 2161,1053 2159,1068C2157,1083 2151,1099 2146,1114C2140,1129 2131,1145 2126,1160C2121,1175 2117,1191 2116,1206C2115,1221 2119,1237 2121,1252C2124,1267 2128,1283 2130,1298C2132,1313 2131,1329 2131,1344C2131,1359 2129,1375 2130,1390C2130,1405 2132,1421 2134,1436C2136,1451 2140,1467 2142,1482C2143,1497 2143,1513 2141,1528C2140,1543 2136,1559 2134,1574C2133,1589 2131,1605 2131,1620C2132,1635 2136,1658 2136,1666M2140,470C2140,478 2139,501 2139,516C2139,531 2139,547 2140,562C2140,577 2142,593 2142,608C2143,623 2143,639 2143,654C2143,669 2141,685 2141,700C2140,715 2140,731 2141,746C2142,761 2145,777 2147,792C2149,807 2153,823 2154,838C2156,853 2157,869 2158,884C2159,899 2158,915 2159,930C2159,945 2160,961 2162,976C2163,991 2167,1007 2167,1022C2168,1037 2168,1053 2165,1068C2162,1083 2155,1099 2150,1114C2144,1129 2135,1145 2131,1160C2128,1175 2126,1191 2126,1206C2127,1221 2132,1237 2136,1252C2139,1267 2144,1283 2145,1298C2147,1313 2146,1329 2145,1344C2145,1359 2142,1375 2142,1390C2142,1405 2144,1421 2145,1436C2147,1451 2150,1467 2150,1482C2151,1497 2149,1513 2147,1528C2145,1543 2140,1559 2139,1574C2137,1589 2137,1605 2138,1620C2139,1635 2145,1658 2146,1666M2150,470C2150,478 2149,501 2150,516C2152,531 2154,547 2157,562C2161,577 2167,593 2172,608C2177,623 2183,639 2186,654C2189,669 2190,685 2190,700C2190,715 2186,731 2184,746C2182,761 2180,777 2178,792C2177,807 2176,823 2175,838C2175,853 2174,869 2173,884C2172,899 2171,915 2170,930C2170,945 2171,961 2171,976C2172,991 2174,1007 2174,1022C2174,1037 2173,1053 2169,1068C2166,1083 2159,1099 2154,1114C2148,1129 2141,1145 2139,1160C2136,1175 2136,1191 2138,1206C2140,1221 2147,1237 2150,1252C2153,1267 2157,1283 2158,1298C2159,1313 2157,1329 2156,1344C2154,1359 2151,1375 2151,1390C2150,1405 2152,1421 2153,1436C2154,1451 2157,1467 2156,1482C2156,1497 2153,1513 2151,1528C2149,1543 2144,1559 2144,1574C2143,1589 2145,1605 2147,1620C2150,1635 2157,1658 2159,1666M2162,470C2162,478 2160,501 2162,516C2163,531 2166,547 2170,562C2174,577 2181,593 2185,608C2190,623 2195,639 2198,654C2200,669 2201,685 2200,700C2200,715 2198,731 2197,746C2196,761 2195,777 2194,792C2193,807 2193,823 2192,838C2190,853 2188,869 2187,884C2185,899 2182,915 2181,930C2180,945 2180,961 2180,976C2180,991 2182,1007 2181,1022C2181,1037 2179,1053 2176,1068C2172,1083 2165,1099 2161,1114C2157,1129 2153,1145 2152,1160C2151,1175 2153,1191 2156,1206C2159,1221 2165,1237 2168,1252C2171,1267 2173,1283 2173,1298C2172,1313 2168,1329 2165,1344C2163,1359 2160,1375 2159,1390C2158,1405 2160,1421 2161,1436C2162,1451 2165,1467 2165,1482C2164,1497 2161,1513 2160,1528C2158,1543 2155,1559 2156,1574C2156,1589 2161,1605 2164,1620C2168,1635 2176,1658 2179,1666M2171,470C2171,478 2170,501 2172,516C2174,531 2178,547 2182,562C2187,577 2194,593 2199,608C2203,623 2208,639 2210,654C2212,669 2211,685 2211,700C2211,715 2209,731 2208,746C2207,761 2207,777 2206,792C2205,807 2204,823 2202,838C2200,853 2197,869 2195,884C2192,899 2189,915 2188,930C2187,945 2187,961 2187,976C2187,991 2189,1007 2189,1022C2188,1037 2186,1053 2183,1068C2180,1083 2174,1099 2171,1114C2168,1129 2165,1145 2165,1160C2165,1175 2168,1191 2171,1206C2174,1221 2179,1237 2181,1252C2183,1267 2183,1283 2181,1298C2179,1313 2174,1329 2171,1344C2168,1359 2165,1375 2165,1390C2165,1405 2168,1421 2170,1436C2171,1451 2174,1467 2175,1482C2175,1497 2172,1513 2171,1528C2170,1543 2167,1559 2169,1574C2171,1589 2177,1605 2181,1620C2185,1635 2192,1658 2195,1666M2182,470C2183,478 2183,501 2186,516C2189,531 2195,547 2200,562C2205,577 2213,593 2217,608C2221,623 2224,639 2225,654C2226,669 2224,685 2223,700C2222,715 2220,731 2219,746C2218,761 2218,777 2216,792C2215,807 2213,823 2211,838C2208,853 2204,869 2202,884C2199,899 2196,915 2196,930C2195,945 2197,961 2198,976C2198,991 2201,1007 2201,1022C2200,1037 2198,1053 2196,1068C2193,1083 2188,1099 2185,1114C2183,1129 2181,1145 2181,1160C2181,1175 2184,1191 2186,1206C2188,1221 2192,1237 2192,1252C2192,1267 2190,1283 2188,1298C2185,1313 2179,1329 2177,1344C2175,1359 2174,1375 2176,1390C2177,1405 2182,1421 2185,1436C2187,1451 2191,1467 2191,1482C2191,1497 2188,1513 2187,1528C2186,1543 2184,1559 2186,1574C2188,1589 2195,1605 2199,1620C2202,1635 2207,1658 2209,1666M2199,470C2201,478 2204,501 2208,516C2213,531 2221,547 2226,562C2231,577 2237,593 2239,608C2242,623 2241,639 2240,654C2239,669 2235,685 2233,700C2231,715 2230,731 2229,746C2227,761 2227,777 2226,792C2225,807 2222,823 2220,838C2218,853 2214,869 2213,884C2211,899 2211,915 2211,930C2212,945 2216,961 2217,976C2219,991 2221,1007 2221,1022C2220,1037 2217,1053 2213,1068C2210,1083 2205,1099 2202,1114C2200,1129 2199,1145 2198,1160C2198,1175 2200,1191 2201,1206C2201,1221 2203,1237 2202,1252C2201,1267 2199,1283 2197,1298C2195,1313 2192,1329 2192,1344C2192,1359 2194,1375 2197,1390C2200,1405 2207,1421 2210,1436C2213,1451 2216,1467 2215,1482C2214,1497 2208,1513 2206,1528C2204,1543 2201,1559 2202,1574C2203,1589 2210,1605 2213,1620C2216,1635 2219,1658 2220,1666M2216,470C2218,478 2223,501 2228,516C2233,531 2241,547 2245,562C2249,577 2252,593 2252,608C2253,623 2249,639 2247,654C2244,669 2240,685 2238,700C2236,715 2236,731 2235,746C2235,761 2236,777 2235,792C2235,807 2234,823 2232,838C2231,853 2228,869 2228,884C2228,899 2229,915 2230,930C2231,945 2235,961 2237,976C2238,991 2238,1007 2237,1022C2235,1037 2229,1053 2226,1068C2222,1083 2216,1099 2214,1114C2211,1129 2210,1145 2210,1160C2210,1175 2211,1191 2211,1206C2212,1221 2212,1237 2212,1252C2211,1267 2209,1283 2209,1298C2209,1313 2208,1329 2209,1344C2211,1359 2215,1375 2219,1390C2223,1405 2228,1421 2231,1436C2234,1451 2236,1467 2237,1482C2238,1497 2238,1513 2238,1528C2238,1543 2238,1559 2237,1574C2236,1589 2234,1605 2232,1620C2231,1635 2229,1658 2229,1666M2229,470C2232,478 2238,501 2242,516C2247,531 2254,547 2257,562C2259,577 2260,593 2259,608C2258,623 2253,639 2250,654C2247,669 2244,685 2243,700C2241,715 2243,731 2243,746C2244,761 2247,777 2247,792C2247,807 2246,823 2246,838C2245,853 2243,869 2243,884C2243,899 2244,915 2245,930C2247,945 2250,961 2250,976C2250,991 2249,1007 2246,1022C2243,1037 2237,1053 2233,1068C2229,1083 2224,1099 2222,1114C2219,1129 2220,1145 2220,1160C2220,1175 2221,1191 2221,1206C2221,1221 2221,1237 2221,1252C2221,1267 2220,1283 2221,1298C2221,1313 2222,1329 2224,1344C2226,1359 2231,1375 2234,1390C2237,1405 2242,1421 2243,1436C2245,1451 2244,1467 2244,1482C2243,1497 2242,1513 2241,1528C2241,1543 2240,1559 2240,1574C2239,1589 2238,1605 2238,1620C2237,1635 2237,1658 2237,1666M2246,470C2248,478 2254,501 2258,516C2262,531 2267,547 2269,562C2270,577 2268,593 2266,608C2264,623 2259,639 2257,654C2255,669 2254,685 2254,700C2255,715 2259,731 2261,746C2264,761 2267,777 2268,792C2269,807 2267,823 2266,838C2265,853 2263,869 2263,884C2262,899 2263,915 2263,930C2264,945 2265,961 2264,976C2263,991 2259,1007 2256,1022C2252,1037 2245,1053 2242,1068C2238,1083 2235,1099 2234,1114C2233,1129 2236,1145 2236,1160C2236,1175 2236,1191 2236,1206C2236,1221 2235,1237 2235,1252C2235,1267 2235,1283 2236,1298C2237,1313 2239,1329 2241,1344C2243,1359 2247,1375 2249,1390C2251,1405 2253,1421 2253,1436C2253,1451 2250,1467 2248,1482C2247,1497 2246,1513 2246,1528C2246,1543 2247,1559 2248,1574C2249,1589 2251,1605 2252,1620C2253,1635 2255,1658 2255,1666M2254,470C2256,478 2263,501 2266,516C2270,531 2275,547 2275,562C2276,577 2274,593 2272,608C2270,623 2265,639 2264,654C2263,669 2264,685 2265,700C2267,715 2272,731 2275,746C2277,761 2280,777 2281,792C2281,807 2279,823 2278,838C2276,853 2273,869 2272,884C2271,899 2272,915 2271,930C2271,945 2272,961 2270,976C2268,991 2264,1007 2261,1022C2257,1037 2251,1053 2249,1068C2247,1083 2245,1099 2248,1114C2250,1129 2257,1145 2263,1160C2268,1175 2278,1191 2280,1206C2283,1221 2281,1237 2278,1252C2274,1267 2264,1283 2260,1298C2256,1313 2253,1329 2252,1344C2251,1359 2255,1375 2256,1390C2256,1405 2257,1421 2257,1436C2256,1451 2253,1467 2252,1482C2251,1497 2250,1513 2251,1528C2252,1543 2255,1559 2257,1574C2260,1589 2262,1605 2264,1620C2266,1635 2268,1658 2269,1666M2261,470C2263,478 2270,501 2274,516C2278,531 2282,547 2282,562C2283,577 2280,593 2279,608C2277,623 2273,639 2273,654C2272,669 2274,685 2277,700C2279,715 2285,731 2287,746C2289,761 2292,777 2291,792C2291,807 2288,823 2286,838C2283,853 2280,869 2279,884C2277,899 2278,915 2277,930C2276,945 2277,961 2275,976C2273,991 2269,1007 2266,1022C2263,1037 2258,1053 2256,1068C2255,1083 2255,1099 2258,1114C2261,1129 2268,1145 2273,1160C2278,1175 2286,1191 2287,1206C2289,1221 2286,1237 2282,1252C2278,1267 2269,1283 2264,1298C2260,1313 2258,1329 2257,1344C2257,1359 2260,1375 2260,1390C2261,1405 2262,1421 2261,1436C2261,1451 2258,1467 2257,1482C2257,1497 2257,1513 2259,1528C2261,1543 2265,1559 2268,1574C2271,1589 2274,1605 2276,1620C2278,1635 2280,1658 2281,1666M2269,470C2272,478 2280,501 2284,516C2287,531 2291,547 2292,562C2293,577 2290,593 2288,608C2287,623 2284,639 2284,654C2284,669 2287,685 2290,700C2292,715 2298,731 2299,746C2301,761 2302,777 2301,792C2300,807 2295,823 2292,838C2290,853 2286,869 2285,884C2283,899 2284,915 2283,930C2283,945 2283,961 2281,976C2280,991 2276,1007 2274,1022C2271,1037 2267,1053 2266,1068C2266,1083 2267,1099 2270,1114C2273,1129 2280,1145 2284,1160C2288,1175 2294,1191 2294,1206C2294,1221 2290,1237 2285,1252C2281,1267 2272,1283 2268,1298C2265,1313 2263,1329 2263,1344C2262,1359 2266,1375 2267,1390C2267,1405 2268,1421 2268,1436C2268,1451 2266,1467 2266,1482C2267,1497 2268,1513 2271,1528C2274,1543 2279,1559 2282,1574C2285,1589 2288,1605 2290,1620C2292,1635 2292,1658 2293,1666M2280,470C2283,478 2292,501 2296,516C2300,531 2303,547 2304,562C2304,577 2301,593 2300,608C2299,623 2296,639 2297,654C2297,669 2300,685 2303,700C2305,715 2310,731 2311,746C2312,761 2311,777 2308,792C2306,807 2301,823 2298,838C2295,853 2292,869 2291,884C2290,899 2291,915 2291,930C2291,945 2291,961 2290,976C2289,991 2286,1007 2284,1022C2282,1037 2279,1053 2279,1068C2279,1083 2281,1099 2284,1114C2286,1129 2292,1145 2294,1160C2297,1175 2300,1191 2299,1206C2298,1221 2292,1237 2288,1252C2283,1267 2276,1283 2273,1298C2270,1313 2270,1329 2270,1344C2271,1359 2274,1375 2276,1390C2277,1405 2278,1421 2278,1436C2279,1451 2278,1467 2279,1482C2280,1497 2283,1513 2286,1528C2289,1543 2294,1559 2297,1574C2300,1589 2303,1605 2304,1620C2305,1635 2304,1658 2304,1666M2299,470C2302,478 2312,501 2316,516C2320,531 2321,547 2321,562C2321,577 2317,593 2315,608C2314,623 2311,639 2312,654C2312,669 2315,685 2317,700C2319,715 2322,731 2322,746C2321,761 2319,777 2316,792C2314,807 2308,823 2306,838C2304,853 2303,869 2303,884C2302,899 2305,915 2306,930C2306,945 2307,961 2306,976C2306,991 2302,1007 2301,1022C2299,1037 2297,1053 2296,1068C2296,1083 2298,1099 2299,1114C2301,1129 2304,1145 2305,1160C2305,1175 2305,1191 2303,1206C2301,1221 2295,1237 2292,1252C2289,1267 2284,1283 2283,1298C2282,1313 2284,1329 2285,1344C2287,1359 2291,1375 2293,1390C2295,1405 2296,1421 2297,1436C2298,1451 2297,1467 2299,1482C2301,1497 2304,1513 2306,1528C2309,1543 2313,1559 2315,1574C2317,1589 2318,1605 2318,1620C2318,1635 2316,1658 2315,1666M2322,470C2324,478 2334,501 2336,516C2339,531 2338,547 2336,562C2335,577 2329,593 2327,608C2325,623 2323,639 2323,654C2323,669 2327,685 2328,700C2330,715 2332,731 2332,746C2331,761 2328,777 2326,792C2325,807 2321,823 2320,838C2319,853 2320,869 2321,884C2322,899 2325,915 2326,930C2326,945 2326,961 2325,976C2323,991 2319,1007 2317,1022C2315,1037 2312,1053 2311,1068C2310,1083 2311,1099 2311,1114C2312,1129 2313,1145 2312,1160C2312,1175 2311,1191 2309,1206C2307,1221 2303,1237 2302,1252C2300,1267 2299,1283 2300,1298C2301,1313 2304,1329 2307,1344C2309,1359 2313,1375 2315,1390C2316,1405 2316,1421 2317,1436C2317,1451 2317,1467 2318,1482C2319,1497 2321,1513 2323,1528C2325,1543 2328,1559 2329,1574C2330,1589 2329,1605 2329,1620C2328,1635 2326,1658 2325,1666M2348,470C2349,478 2355,501 2355,516C2355,531 2350,547 2347,562C2345,577 2339,593 2337,608C2336,623 2337,639 2338,654C2340,669 2345,685 2347,700C2350,715 2352,731 2352,746C2353,761 2351,777 2350,792C2349,807 2347,823 2347,838C2347,853 2348,869 2349,884C2349,899 2351,915 2350,930C2349,945 2346,961 2343,976C2340,991 2335,1007 2332,1022C2329,1037 2327,1053 2326,1068C2325,1083 2326,1099 2326,1114C2325,1129 2326,1145 2326,1160C2326,1175 2325,1191 2325,1206C2324,1221 2324,1237 2324,1252C2325,1267 2327,1283 2328,1298C2330,1313 2334,1329 2335,1344C2337,1359 2337,1375 2337,1390C2337,1405 2336,1421 2335,1436C2335,1451 2334,1467 2335,1482C2335,1497 2338,1513 2339,1528C2340,1543 2342,1559 2343,1574C2344,1589 2343,1605 2343,1620C2344,1635 2343,1658 2343,1666M2363,470C2364,478 2366,501 2365,516C2364,531 2359,547 2357,562C2355,577 2352,593 2352,608C2353,623 2357,639 2360,654C2363,669 2369,685 2372,700C2375,715 2376,731 2376,746C2376,761 2374,777 2372,792C2371,807 2369,823 2368,838C2367,853 2368,869 2367,884C2366,899 2365,915 2363,930C2360,945 2356,961 2353,976C2349,991 2345,1007 2343,1022C2341,1037 2340,1053 2340,1068C2339,1083 2341,1099 2341,1114C2342,1129 2342,1145 2343,1160C2343,1175 2343,1191 2344,1206C2344,1221 2345,1237 2346,1252C2347,1267 2349,1283 2350,1298C2351,1313 2352,1329 2352,1344C2352,1359 2350,1375 2349,1390C2348,1405 2347,1421 2346,1436C2346,1451 2347,1467 2348,1482C2350,1497 2353,1513 2355,1528C2356,1543 2358,1559 2360,1574C2361,1589 2361,1605 2362,1620C2363,1635 2364,1658 2364,1666M1003,558C1014,629 1022,686 1020,728S1009,814 1003,842C994,786 984,728 984,686S995,600 1003,558M1003,618C1010,659 1014,692 1013,716S1006,766 1003,782C998,750 992,716 992,692S999,642 1003,618M1003,662C1006,681 1008,696 1008,708S1004,730 1003,738C1000,722 998,708 998,696S1001,674 1003,662M1575,462C1588,551 1596,622 1594,676S1581,782 1575,818C1565,747 1554,676 1554,622S1567,515 1575,462M1575,537C1582,588 1587,630 1586,661S1579,722 1575,743C1569,702 1563,661 1563,630S1570,568 1575,537M1575,593C1578,617 1580,635 1580,649S1577,678 1575,687C1572,668 1570,649 1570,635S1573,607 1575,593M930,1140C938,1188 943,1226 942,1254S934,1311 930,1330C923,1292 917,1254 917,1226S925,1168 930,1140M930,1180C935,1208 938,1230 937,1246S932,1279 930,1290C926,1268 922,1246 922,1230S927,1196 930,1180M930,1210C932,1222 934,1232 933,1240S931,1255 930,1260C928,1250 926,1240 926,1232S929,1218 930,1210M1065,1171C1075,1231 1082,1278 1080,1314S1070,1385 1065,1409C1056,1361 1048,1314 1048,1278S1058,1207 1065,1171M1065,1221C1071,1256 1075,1283 1074,1304S1068,1345 1065,1359C1060,1331 1055,1304 1055,1283S1061,1242 1065,1221M1065,1259C1068,1274 1070,1287 1069,1296S1066,1315 1065,1321C1063,1309 1060,1296 1060,1287S1063,1268 1065,1259M1290,891C1299,951 1305,998 1304,1034S1295,1105 1290,1129C1282,1081 1275,1034 1275,998S1284,927 1290,891M1290,941C1295,976 1299,1003 1298,1024S1293,1065 1290,1079C1286,1051 1281,1024 1281,1003S1286,962 1290,941M1290,979C1292,994 1294,1007 1294,1016S1291,1035 1290,1041C1288,1029 1286,1016 1286,1007S1288,988 1290,979M1790,1266C1801,1343 1809,1405 1807,1451S1796,1544 1790,1574C1780,1513 1771,1451 1771,1405S1782,1312 1790,1266M1790,1331C1797,1375 1801,1411 1800,1438S1793,1492 1790,1509C1784,1474 1779,1438 1779,1411S1786,1357 1790,1331M1790,1379C1793,1400 1795,1416 1794,1428S1792,1452 1790,1461C1788,1444 1785,1428 1785,1416S1788,1392 1790,1379M2045,1358C2055,1429 2062,1486 2060,1528S2050,1614 2045,1642C2036,1586 2028,1528 2028,1486S2038,1400 2045,1358M2045,1418C2051,1459 2055,1492 2054,1516S2048,1566 2045,1582C2040,1550 2035,1516 2035,1492S2041,1442 2045,1418M2045,1462C2048,1481 2050,1496 2049,1508S2046,1530 2045,1538C2043,1522 2040,1508 2040,1496S2043,1474 2045,1462M2260,1123C2270,1177 2277,1219 2275,1251S2265,1316 2260,1337C2251,1294 2243,1251 2243,1219S2253,1155 2260,1123M2260,1168C2266,1199 2270,1224 2269,1242S2263,1280 2260,1292C2255,1267 2250,1242 2250,1224S2256,1187 2260,1168M2260,1202C2263,1216 2264,1227 2264,1236S2261,1252 2260,1258C2258,1247 2256,1236 2256,1227S2258,1210 2260,1202M1160,1381C1169,1441 1175,1488 1174,1524S1165,1595 1160,1619C1152,1571 1145,1524 1145,1488S1154,1417 1160,1381M1160,1431C1165,1466 1169,1493 1168,1514S1163,1555 1160,1569C1156,1541 1151,1514 1151,1493S1156,1452 1160,1431M1160,1469C1162,1484 1164,1497 1164,1506S1161,1525 1160,1531C1158,1519 1156,1506 1156,1497S1158,1478 1160,1469M1900,478C1910,549 1917,606 1915,648S1905,734 1900,762C1891,706 1883,648 1883,606S1893,520 1900,478M1900,538C1906,579 1910,612 1909,636S1903,686 1900,702C1895,670 1890,636 1890,612S1896,562 1900,538M1900,582C1903,601 1904,616 1904,628S1901,650 1900,658C1898,642 1896,628 1896,616S1898,594 1900,582M2150,546C2161,623 2169,685 2167,731S2156,824 2150,854C2140,793 2131,731 2131,685S2142,592 2150,546M2150,611C2157,655 2161,691 2160,718S2153,772 2150,789C2144,754 2139,718 2139,691S2146,637 2150,611M2150,659C2153,680 2155,696 2154,708S2152,732 2150,741C2148,724 2145,708 2145,696S2148,672 2150,659M1420,1355C1428,1402 1433,1440 1432,1469S1424,1526 1420,1545C1413,1507 1407,1469 1407,1440S1415,1384 1420,1355M1420,1395C1425,1422 1428,1444 1427,1461S1422,1494 1420,1505C1416,1483 1412,1461 1412,1444S1417,1412 1420,1395M1420,1425C1422,1438 1424,1448 1423,1455S1421,1470 1420,1475C1418,1465 1416,1455 1416,1448S1419,1432 1420,1425M1650,1031C1659,1091 1665,1138 1664,1174S1655,1245 1650,1269C1642,1221 1635,1174 1635,1138S1644,1067 1650,1031M1650,1081C1655,1116 1659,1143 1658,1164S1653,1205 1650,1219C1646,1191 1641,1164 1641,1143S1646,1102 1650,1081M1650,1119C1652,1134 1654,1147 1654,1156S1651,1175 1650,1181C1648,1169 1646,1156 1646,1147S1648,1128 1650,1119M2100,949C2110,1015 2117,1067 2115,1106S2105,1184 2100,1211C2091,1158 2083,1106 2083,1067S2093,989 2100,949M2100,1004C2106,1042 2110,1072 2109,1095S2103,1140 2100,1156C2095,1125 2090,1095 2090,1072S2096,1027 2100,1004M2100,1046C2103,1063 2104,1077 2104,1087S2101,1108 2100,1114C2098,1101 2096,1087 2096,1077S2098,1056 2100,1046M1250,465C1258,512 1263,550 1262,579S1254,636 1250,655C1243,617 1237,579 1237,550S1245,494 1250,465M1250,505C1255,532 1258,554 1257,571S1252,604 1250,615C1246,593 1242,571 1242,554S1247,522 1250,505M1250,535C1252,548 1254,558 1253,565S1251,580 1250,585C1248,575 1246,565 1246,558S1249,542 1250,535M1730,693C1738,747 1743,789 1742,821S1734,886 1730,907C1723,864 1717,821 1717,789S1725,725 1730,693M1730,738C1735,769 1738,794 1737,812S1732,850 1730,862C1726,837 1722,812 1722,794S1727,757 1730,738M1730,772C1732,786 1734,797 1733,806S1731,822 1730,828C1728,817 1726,806 1726,797S1729,780 1730,772M905,781C913,841 918,888 917,924S909,995 905,1019C898,971 892,924 892,888S900,817 905,781M905,831C910,866 913,893 912,914S907,955 905,969C901,941 897,914 897,893S902,852 905,831M905,869C907,884 908,897 908,906S906,925 905,931C903,919 902,906 902,897S904,878 905,869M1500,1243C1508,1297 1513,1339 1512,1371S1504,1436 1500,1457C1493,1414 1487,1371 1487,1339S1495,1275 1500,1243M1500,1288C1505,1319 1508,1344 1507,1362S1502,1400 1500,1412C1496,1387 1492,1362 1492,1344S1497,1307 1500,1288M1500,1322C1502,1336 1504,1347 1503,1356S1501,1372 1500,1378C1498,1367 1496,1356 1496,1347S1499,1330 1500,1322M2220,1465C2228,1512 2233,1550 2232,1579S2224,1636 2220,1655C2213,1617 2207,1579 2207,1550S2215,1494 2220,1465M2220,1505C2225,1532 2228,1554 2227,1571S2222,1604 2220,1615C2216,1593 2212,1571 2212,1554S2217,1522 2220,1505M2220,1535C2222,1548 2224,1558 2223,1565S2221,1580 2220,1585C2218,1575 2216,1565 2216,1558S2219,1542 2220,1535M1960,893C1968,947 1973,989 1972,1021S1964,1086 1960,1107C1953,1064 1947,1021 1947,989S1955,925 1960,893M1960,938C1965,969 1968,994 1967,1012S1962,1050 1960,1062C1956,1037 1952,1012 1952,994S1957,957 1960,938M1960,972C1962,986 1964,997 1963,1006S1961,1022 1960,1028C1958,1017 1956,1006 1956,997S1959,980 1960,972" fill="none" stroke="#fffdf7" stroke-width="2.2" stroke-linejoin="round"/><rect x="1222" y="879.4" width="894" height="375.3" fill="#fff"/><path d="M1222,879.6 H2116 M1222,1254.6 H2116" stroke="#4a4a4a" stroke-width="1.1"/><path d="M1518.6,879.4C1516.8,888.6 1511.7,915.7 1508,934.5C1504.3,953.3 1498.2,978.4 1496.5,992C1494.8,1005.6 1495.2,1010.8 1497.6,1015.9C1500,1021 1505,1023.2 1510.7,1022.7C1516.4,1022.2 1523.8,1016.1 1531.7,1013C1539.6,1009.9 1548.8,1003.3 1558,1003.8C1567.2,1004.3 1579.4,1008.2 1586.8,1015.9C1594.2,1023.6 1600.8,1039.1 1602.6,1050C1604.3,1060.9 1601.2,1072.8 1597.3,1081.5C1593.4,1090.2 1585.5,1098.1 1579,1102.5C1572.5,1106.9 1565.9,1108.2 1558,1107.7C1550.1,1107.2 1540,1102 1531.7,1099.8C1523.4,1097.6 1513.7,1093.3 1508,1094.6C1502.3,1095.9 1499.3,1101.1 1497.6,1107.7C1495.9,1114.3 1496.3,1119.1 1497.6,1134C1498.9,1148.9 1502,1176.9 1505.5,1197C1509,1217.1 1516.4,1245.1 1518.6,1254.7" fill="none" stroke="#444" stroke-width="1"/><path d="M1846,1110C1845.1,1120 1842,1154.3 1840.4,1169.7C1838.8,1185.1 1840,1188 1836.2,1202.2C1832.4,1216.4 1820.9,1246 1817.8,1254.7" fill="none" stroke="#444" stroke-width="1"/><clipPath id="c1"><path d="M909,585 H1208 C1202,625 1188,680 1185,705 C1184,722 1192,728 1200,727 C1212,725 1228,711 1252,711 C1278,711 1292,732 1292,757 C1292,790 1272,812 1250,812 C1232,812 1215,803 1200,803 C1192,803 1188,808 1189,818 C1190,850 1194,890 1197,915 C1200,935 1205,950 1208,961 H909 Z"/></clipPath><g clip-path="url(#c1)"><rect x="905" y="580" width="400" height="390" fill="#e5c29a"/><path d="M905,636 C930,630 950,634 965,640 C990,628 1010,630 1030,640 C1045,632 1062,636 1072,650 L1078,640 C1080,620 1096,612 1112,606 L1113,585 H1138 L1138,640 C1150,646 1160,660 1168,690 L1180,700 H1300 V800 H905 Z" fill="#deb17f"/><path d="M905,778 C950,784 1000,780 1060,788 C1120,792 1200,786 1300,790 V970 H905 Z" fill="#e4c198"/><path d="M1185,705 C1184,722 1192,728 1200,727 C1212,725 1228,711 1252,711 C1278,711 1292,732 1292,757 L1292,790 H1185 Z" fill="#deb17f"/><g fill="none" stroke="#d9a774" stroke-width="4"><path d="M988,690 L957,853 M997,690 L1030,853 M975,760 H1010 M966,806 H1020 M959,846 H1029 M985,712 L1012,760 M1001,712 L973,760 M975,762 L1019,806 M1010,762 L967,806 M967,808 L1029,846 M1020,808 L959,846"/></g><circle cx="992.8" cy="646.3" r="40" fill="#d9a774"/><path d="M992.8,646.3 L1034.3,652.6" stroke="#e2bb8f" stroke-width="3"/><path d="M992.8,646.3 L1025.6,672.5" stroke="#e2bb8f" stroke-width="3"/><path d="M992.8,646.3 L1008.1,685.4" stroke="#e2bb8f" stroke-width="3"/><path d="M992.8,646.3 L986.5,687.8" stroke="#e2bb8f" stroke-width="3"/><path d="M992.8,646.3 L966.6,679.1" stroke="#e2bb8f" stroke-width="3"/><path d="M992.8,646.3 L953.7,661.6" stroke="#e2bb8f" stroke-width="3"/><path d="M992.8,646.3 L951.3,640.0" stroke="#e2bb8f" stroke-width="3"/><path d="M992.8,646.3 L960.0,620.1" stroke="#e2bb8f" stroke-width="3"/><path d="M992.8,646.3 L977.5,607.2" stroke="#e2bb8f" stroke-width="3"/><path d="M992.8,646.3 L999.1,604.8" stroke="#e2bb8f" stroke-width="3"/><path d="M992.8,646.3 L1019.0,613.5" stroke="#e2bb8f" stroke-width="3"/><path d="M992.8,646.3 L1031.9,631.0" stroke="#e2bb8f" stroke-width="3"/><circle cx="992.8" cy="646.3" r="6" fill="#d9a774"/><path d="M1046.5,787 Q1122.5,771 1198.5,784 L1200.5,791 Q1122.5,780 1048.5,794 Z" fill="#b98755"/><path d="M1049.5,791 Q1122.5,778 1198.5,789 L1194.5,876 H1058.5 Q1054.5,833 1049.5,791 Z" fill="#687d6f"/><path d="M1058.5,876 H1194.5 V892 Q1194.5,896 1190.5,896 H1063.5 Q1059.5,896 1059.5,892 Z" fill="#2f4b42"/><rect x="1071.0" y="810.5" width="31.5" height="35" rx="4" fill="#4a675b"/><rect x="1073.5" y="813.5" width="26.5" height="29" rx="2" fill="#b4d8cf"/><path d="M1077.5,837 L1092.5,819 M1084.5,839 L1096.5,825" stroke="#cfe8e1" stroke-width="2"/><rect x="1113.4" y="810.5" width="31.5" height="35" rx="4" fill="#4a675b"/><rect x="1115.9" y="813.5" width="26.5" height="29" rx="2" fill="#b4d8cf"/><path d="M1119.9,837 L1134.9,819 M1126.9,839 L1138.9,825" stroke="#cfe8e1" stroke-width="2"/><rect x="1155.8" y="810.5" width="31.5" height="35" rx="4" fill="#4a675b"/><rect x="1158.3" y="813.5" width="26.5" height="29" rx="2" fill="#b4d8cf"/><path d="M1162.3,837 L1177.3,819 M1169.3,839 L1181.3,825" stroke="#cfe8e1" stroke-width="2"/><circle cx="1096.5" cy="900" r="18.6" fill="#2f4b42"/><circle cx="1096.5" cy="900" r="11" fill="#385a4f"/><circle cx="1096.5" cy="900" r="2" fill="#d9c9a8"/><circle cx="1162.5" cy="900" r="18.6" fill="#2f4b42"/><circle cx="1162.5" cy="900" r="11" fill="#385a4f"/><circle cx="1162.5" cy="900" r="2" fill="#d9c9a8"/><path d="M1222,792 Q1262,779 1300,785 L1300,793 Q1262,787 1224,799 Z" fill="#b98755"/><path d="M1224,798 Q1262,787 1300,792 V830 H1228 Z" fill="#687d6f"/><rect x="905" y="917" width="395" height="4.2" fill="#5b5048"/><rect x="917" y="921.6" width="16" height="6" fill="#7b6856"/><rect x="938" y="921.6" width="16" height="6" fill="#7b6856"/><rect x="968" y="921.6" width="16" height="6" fill="#7b6856"/><rect x="995" y="921.6" width="16" height="6" fill="#7b6856"/><rect x="1016" y="921.6" width="16" height="6" fill="#7b6856"/><rect x="1037" y="921.6" width="16" height="6" fill="#7b6856"/><rect x="1060" y="921.6" width="16" height="6" fill="#7b6856"/><rect x="1080" y="921.6" width="16" height="6" fill="#7b6856"/><rect x="1109" y="921.6" width="16" height="6" fill="#7b6856"/><rect x="1136" y="921.6" width="16" height="6" fill="#7b6856"/><rect x="1158" y="921.6" width="16" height="6" fill="#7b6856"/><rect x="1178" y="921.6" width="16" height="6" fill="#7b6856"/></g><path d="M909,585 H1208 C1202,625 1188,680 1185,705 C1184,722 1192,728 1200,727 C1212,725 1228,711 1252,711 C1278,711 1292,732 1292,757 C1292,790 1272,812 1250,812 C1232,812 1215,803 1200,803 C1192,803 1188,808 1189,818 C1190,850 1194,890 1197,915 C1200,935 1205,950 1208,961 H909 Z" fill="none" stroke="#4d4a45" stroke-width="0.9"/><clipPath id="c3"><path d="M1244,1288.7C1243.2,1294.2 1241.5,1307.7 1238.9,1321.8C1236.3,1335.9 1231.3,1358.9 1228.5,1373.6C1225.7,1388.3 1222.4,1400.9 1222,1410C1221.6,1419.1 1221.9,1424.3 1226,1428C1230.1,1431.7 1241,1433.3 1246.6,1432C1252.2,1430.7 1253.1,1423.3 1259.6,1420.3C1266.1,1417.3 1276.9,1413.4 1285.5,1413.8C1294.1,1414.2 1304.3,1416.5 1311.4,1422.8C1318.5,1429 1325.4,1442.2 1328.2,1451.3C1331,1460.4 1330.6,1468.7 1328.2,1477.3C1325.8,1485.9 1320.7,1496.5 1314,1503C1307.3,1509.5 1296.6,1514.2 1288,1516C1279.4,1517.8 1269.5,1514.8 1262.2,1513.5C1254.9,1512.2 1249.6,1508.9 1244,1508C1238.4,1507.1 1232,1506.2 1228.5,1508C1225,1509.8 1224,1510.9 1223.3,1518.7C1222.6,1526.5 1223.3,1542.5 1224.6,1555C1225.9,1567.5 1228.6,1580.8 1231,1593.8C1233.4,1606.8 1236.5,1620.7 1238.9,1632.7C1241.3,1644.7 1244.2,1660.5 1245.3,1666L1544.6,1666C1547,1659.2 1555.1,1637 1558.8,1625C1562.5,1613 1565.1,1605.5 1566.6,1593.8C1568.1,1582.1 1567.9,1565.3 1567.9,1555C1567.9,1544.7 1568.8,1537.3 1566.6,1531.7C1564.4,1526.1 1560,1522.6 1555,1521.3C1550,1520 1542.8,1522.3 1536.8,1524C1530.8,1525.7 1525.2,1530.2 1518.7,1531.7C1512.2,1533.2 1504.9,1534.3 1498,1533C1491.1,1531.7 1483,1529 1477.2,1524C1471.4,1519 1466,1510.8 1463,1503C1460,1495.2 1458.4,1485.9 1459,1477.3C1459.6,1468.7 1462.5,1458.8 1466.8,1451.3C1471.1,1443.8 1477.7,1435.7 1485,1432C1492.3,1428.3 1502.7,1428.9 1510.9,1429.3C1519.1,1429.7 1528,1434.3 1534.2,1434.5C1540.5,1434.7 1544.7,1434.7 1548.4,1430.6C1552.1,1426.5 1554.5,1419.5 1556.2,1410C1557.9,1400.5 1559.2,1388.3 1558.8,1373.6C1558.4,1358.9 1556,1335.9 1553.6,1321.8C1551.2,1307.7 1546.1,1294.2 1544.6,1288.7Z"/></clipPath><g clip-path="url(#c3)"><rect x="1215" y="1285" width="360" height="385" fill="#deb17f"/><path d="M1330,1285 H1432 L1432,1330 L1424,1340 L1420,1380 L1412,1350 L1400,1345 L1398,1372 L1390,1350 L1372,1348 L1366,1400 L1358,1352 L1340,1345 L1332,1320 Z" fill="#e5c29a"/><path d="M1215,1285 H1332 V1297 Q1300,1292 1268,1298 Q1250,1302 1215,1330 Z" fill="#e3bc8e"/><path d="M1432,1285 H1575 V1330 Q1540,1296 1500,1293 Q1460,1292 1432,1297 Z" fill="#e3bc8e"/><path d="M1215,1500 H1575 V1670 H1215 Z" fill="#e4c198"/><path d="M1240,1440 H1440 V1500 H1240 Z" fill="#deb17f"/><path d="M1215,1516 H1236 L1232,1600 H1215 Z" fill="#5b7266"/><path d="M1215,1578 H1233 V1600 H1215 Z" fill="#2f4b42"/><path d="M1236,1558 H1262 M1415,1558 H1432" stroke="#d9a774" stroke-width="5"/><path d="M1256,1490 Q1332,1474 1408,1487 L1410,1494 Q1332,1483 1258,1497 Z" fill="#b98755"/><path d="M1259,1494 Q1332,1481 1408,1492 L1404,1579 H1268 Q1264,1536 1259,1494 Z" fill="#687d6f"/><path d="M1268,1579 H1404 V1595 Q1404,1599 1400,1599 H1273 Q1269,1599 1269,1595 Z" fill="#2f4b42"/><rect x="1280.5" y="1513.5" width="31.5" height="35" rx="9" fill="#4a675b"/><rect x="1283.0" y="1516.5" width="26.5" height="29" rx="7" fill="#b4d8cf"/><path d="M1287.0,1540 L1302.0,1522 M1294.0,1542 L1306.0,1528" stroke="#cfe8e1" stroke-width="2"/><rect x="1322.9" y="1513.5" width="31.5" height="35" rx="9" fill="#4a675b"/><rect x="1325.4" y="1516.5" width="26.5" height="29" rx="7" fill="#b4d8cf"/><path d="M1329.4,1540 L1344.4,1522 M1336.4,1542 L1348.4,1528" stroke="#cfe8e1" stroke-width="2"/><rect x="1365.3" y="1513.5" width="31.5" height="35" rx="9" fill="#4a675b"/><rect x="1367.8" y="1516.5" width="26.5" height="29" rx="7" fill="#b4d8cf"/><path d="M1371.8,1540 L1386.8,1522 M1378.8,1542 L1390.8,1528" stroke="#cfe8e1" stroke-width="2"/><circle cx="1306" cy="1603" r="18.6" fill="#2f4b42"/><circle cx="1306" cy="1603" r="11" fill="#385a4f"/><circle cx="1306" cy="1603" r="2" fill="#d9c9a8"/><circle cx="1372" cy="1603" r="18.6" fill="#2f4b42"/><circle cx="1372" cy="1603" r="11" fill="#385a4f"/><circle cx="1372" cy="1603" r="2" fill="#d9c9a8"/><path d="M1420,1436 Q1480,1418 1548,1430 L1548,1438 Q1480,1428 1422,1444 Z" fill="#b98755"/><path d="M1423,1442 Q1480,1428 1548,1436 V1520 H1575 V1600 H1430 Q1424,1520 1423,1442 Z" fill="#687d6f"/><path d="M1430,1560 H1575 V1606 H1430 Z" fill="#2f4b42"/><path d="M1457,1534 H1515" stroke="#c79a63" stroke-width="5"/><path d="M1550,1522 V1565" stroke="#c79a63" stroke-width="3.5"/><circle cx="1461" cy="1588" r="32" fill="#2f4b42"/><circle cx="1461" cy="1588" r="23" fill="#34524a"/><circle cx="1461" cy="1588" r="3" fill="#d9b88a"/><circle cx="1527.7" cy="1588" r="30" fill="#2f4b42"/><circle cx="1527.7" cy="1588" r="21" fill="#34524a"/><circle cx="1527.7" cy="1588" r="3" fill="#d9b88a"/><path d="M1467,1603 H1540 L1568,1584" fill="none" stroke="#4a4548" stroke-width="5.5" stroke-linejoin="round"/><rect x="1215" y="1621" width="365" height="4.2" fill="#5b5048"/><rect x="1240" y="1625.6" width="16" height="6" fill="#7b6856"/><rect x="1259" y="1625.6" width="16" height="6" fill="#7b6856"/><rect x="1285" y="1625.6" width="16" height="6" fill="#7b6856"/><rect x="1304" y="1625.6" width="16" height="6" fill="#7b6856"/><rect x="1323" y="1625.6" width="16" height="6" fill="#7b6856"/><rect x="1343" y="1625.6" width="16" height="6" fill="#7b6856"/><rect x="1369" y="1625.6" width="16" height="6" fill="#7b6856"/><rect x="1390" y="1625.6" width="16" height="6" fill="#7b6856"/><rect x="1421" y="1625.6" width="16" height="6" fill="#7b6856"/><rect x="1441" y="1625.6" width="16" height="6" fill="#7b6856"/><rect x="1477" y="1625.6" width="16" height="6" fill="#7b6856"/><rect x="1499" y="1625.6" width="16" height="6" fill="#7b6856"/><rect x="1527" y="1625.6" width="16" height="6" fill="#7b6856"/><rect x="1549" y="1625.6" width="16" height="6" fill="#7b6856"/></g><path d="M1244,1288.7C1243.2,1294.2 1241.5,1307.7 1238.9,1321.8C1236.3,1335.9 1231.3,1358.9 1228.5,1373.6C1225.7,1388.3 1222.4,1400.9 1222,1410C1221.6,1419.1 1221.9,1424.3 1226,1428C1230.1,1431.7 1241,1433.3 1246.6,1432C1252.2,1430.7 1253.1,1423.3 1259.6,1420.3C1266.1,1417.3 1276.9,1413.4 1285.5,1413.8C1294.1,1414.2 1304.3,1416.5 1311.4,1422.8C1318.5,1429 1325.4,1442.2 1328.2,1451.3C1331,1460.4 1330.6,1468.7 1328.2,1477.3C1325.8,1485.9 1320.7,1496.5 1314,1503C1307.3,1509.5 1296.6,1514.2 1288,1516C1279.4,1517.8 1269.5,1514.8 1262.2,1513.5C1254.9,1512.2 1249.6,1508.9 1244,1508C1238.4,1507.1 1232,1506.2 1228.5,1508C1225,1509.8 1224,1510.9 1223.3,1518.7C1222.6,1526.5 1223.3,1542.5 1224.6,1555C1225.9,1567.5 1228.6,1580.8 1231,1593.8C1233.4,1606.8 1236.5,1620.7 1238.9,1632.7C1241.3,1644.7 1244.2,1660.5 1245.3,1666L1544.6,1666C1547,1659.2 1555.1,1637 1558.8,1625C1562.5,1613 1565.1,1605.5 1566.6,1593.8C1568.1,1582.1 1567.9,1565.3 1567.9,1555C1567.9,1544.7 1568.8,1537.3 1566.6,1531.7C1564.4,1526.1 1560,1522.6 1555,1521.3C1550,1520 1542.8,1522.3 1536.8,1524C1530.8,1525.7 1525.2,1530.2 1518.7,1531.7C1512.2,1533.2 1504.9,1534.3 1498,1533C1491.1,1531.7 1483,1529 1477.2,1524C1471.4,1519 1466,1510.8 1463,1503C1460,1495.2 1458.4,1485.9 1459,1477.3C1459.6,1468.7 1462.5,1458.8 1466.8,1451.3C1471.1,1443.8 1477.7,1435.7 1485,1432C1492.3,1428.3 1502.7,1428.9 1510.9,1429.3C1519.1,1429.7 1528,1434.3 1534.2,1434.5C1540.5,1434.7 1544.7,1434.7 1548.4,1430.6C1552.1,1426.5 1554.5,1419.5 1556.2,1410C1557.9,1400.5 1559.2,1388.3 1558.8,1373.6C1558.4,1358.9 1556,1335.9 1553.6,1321.8C1551.2,1307.7 1546.1,1294.2 1544.6,1288.7Z" fill="none" stroke="#4d4a45" stroke-width="0.9"/><g><rect x="2290" y="476" width="70" height="375.300" fill="#e4c198"/><rect x="2290" y="511" width="70" height="176" fill="#deb17f"/><path d="M2300,795 L2312,760 L2318,795 Z" fill="none" stroke="#d3a06c" stroke-width="3"/><rect x="2290" y="808" width="70" height="4.200" fill="#5b5048"/><rect x="2306" y="812.500" width="16" height="5" fill="#7b6856"/><rect x="2340" y="812.500" width="12" height="5" fill="#7b6856"/><path d="M2290,476.500 H2360" stroke="#6b5a48" stroke-width="1"/></g><circle cx="2347" cy="1544.500" r="67.750" fill="#34514a"/><path d="M2320,1535 H2341.400 V1519.400 L2370,1544 L2341.400,1568.700 V1552.600 H2320 Z" fill="#fff"/></svg>
<div class="a" style="left:2325.5px;top:284px;width:14.5px;height:1588px;background:#f2f2f2;"></div>
<div class="a" style="left:2325.5px;top:876px;width:14.5px;height:391px;background:#c9c9c9;border-radius:7.2px;"></div>
<div class="a" style="left:1213px;top:1877px;width:425.6px;height:15.5px;background:#c9c9c9;border-radius:7.7px;"></div>
<div class="a" style="left:666.8px;top:300.5px;width:62.8px;height:61.5px;background:#fff;border-radius:9px;"></div>
<svg class="a" style="left:684.5px;top:318px;" width="27.5" height="25.5" viewBox="0 0 27.5 25.5"><path d="M13.750 0.800 L27 12.200 Q27.500 13.200 26.400 13.400 H23.600 V23 Q23.600 25.200 21.400 25.200 H16.800 V17 H10.700 V25.200 H6.100 Q3.900 25.200 3.900 23 V13.400 H1.100 Q0 13.200 0.500 12.200 Z" fill="#4a4a4a"/></svg>
<div class="a" style="left:741px;top:300.5px;width:272.8px;height:61.5px;background:#f0f0f0;border-radius:11px;border:4px solid #fff;"></div>
<span class="t" style="top:319.64px;font-size:25px;color:#444;-webkit-text-stroke:0.9px #444;letter-spacing:1.498px;left:760.40px;">1. Without variable</span>
<div class="a" style="left:1681px;top:356px;width:619px;height:812.6px;background:#fff;border-radius:21px;box-shadow:0 2px 24px rgba(0,0,0,0.11),0 0 5px rgba(0,0,0,0.04);"></div>
<span class="t" style="top:382.68px;font-size:24px;color:#3d3d3d;-webkit-text-stroke:0.55px #3d3d3d;letter-spacing:1.450px;left:1699.18px;">CONDITION</span>
<svg class="a" style="left:2254px;top:383.3px;" width="22" height="19.7" viewBox="0 0 22 19.7"><path d="M2.2 2.2 L19.8 17.500 M19.800 2.200 L2.200 17.500" stroke="#9b9b9b" stroke-width="4" stroke-linecap="round"/></svg>
<div class="a" style="left:1700.4px;top:427.2px;width:579.3px;height:1.2px;background:#dcdcdc;"></div>
<div class="a" style="left:2277.4px;top:435px;width:14.6px;height:624.4px;background:#f7f7f7;border-radius:7.3px;"></div>
<div class="a" style="left:2277.4px;top:435px;width:14.6px;height:374px;background:#c8c8c8;border-radius:7.3px;"></div>
<span class="t" style="top:450.99px;font-size:26px;color:#3d3d3d;-webkit-text-stroke:0.85px #3d3d3d;letter-spacing:0.898px;left:1694.87px;">Paramètres</span>
<span class="t" style="top:514.45px;font-size:22.5px;color:#444;letter-spacing:1.907px;left:1708.75px;">Nom</span>
<div class="a" style="left:1900.8px;top:503px;width:359.9px;height:45.3px;background:#f1f1f1;border-radius:9px;"></div>
<span class="t" style="top:514.45px;font-size:22.5px;color:#444;letter-spacing:0.167px;left:1909.26px;">All dropped?</span>
<span class="t" style="top:580.45px;font-size:22.5px;color:#444;letter-spacing:0.308px;left:1708.75px;">Évaluation auto.</span>
<div class="a" style="left:1900.8px;top:569.7px;width:359.9px;height:45.3px;background:#f1f1f1;border-radius:11px;"></div>
<div class="a" style="left:1906.7px;top:575px;width:168.8px;height:34.2px;background:#fff;border-radius:6px;"></div>
<span class="t" style="top:580.53px;font-size:23px;color:#7b83eb;-webkit-text-stroke:0.7px #7b83eb;letter-spacing:1.921px;left:1993.19px;transform:translateX(-50%);">Oui</span>
<span class="t" style="top:580.53px;font-size:23px;color:#444;letter-spacing:1.589px;left:2171.20px;transform:translateX(-50%);">Non</span>
<span class="t" style="top:655.99px;font-size:26px;color:#3d3d3d;-webkit-text-stroke:0.85px #3d3d3d;letter-spacing:0.385px;left:1694.87px;">Expressions</span>
<span class="t" style="top:719.45px;font-size:22.5px;color:#444;letter-spacing:0.515px;left:1709.46px;">Cible</span>
<div class="a" style="left:1896.4px;top:708px;width:291.2px;height:46.6px;background:#f1f1f1;border-radius:9px;"></div>
<span class="t" style="top:720.13px;font-size:23px;color:#7b83eb;-webkit-text-stroke:0.7px #7b83eb;letter-spacing:-0.150px;left:1909.71px;">Drop01 / Glissable(s) ...</span>
<svg class="a" style="left:2158.3px;top:725.4px;" width="12.4" height="12.4" viewBox="0 0 12.4 12.4"><path d="M1.3 1.3 L11.1 11.1 M11.1 1.3 L1.3 11.1" stroke="#333" stroke-width="2.6" stroke-linecap="round"/></svg>
<div class="a" style="left:2199.3px;top:708px;width:46.5px;height:46.6px;background:#f1f1f1;border-radius:9px;"></div>
<svg class="a" style="left:2215px;top:726.8px;" width="14" height="8.2" viewBox="0 0 14 8.2"><path d="M0.5 0 H13.5 L7 8.2 Z" fill="#333"/></svg>
<span class="t" style="top:781.45px;font-size:22.5px;color:#444;letter-spacing:0.771px;left:1708.75px;">Fonction</span>
<div class="a" style="left:1896.4px;top:770px;width:349.4px;height:46px;background:#f1f1f1;border-radius:9px;"></div>
<span class="t" style="top:781.45px;font-size:22.5px;color:#333;-webkit-text-stroke:0.9px #333;letter-spacing:1.244px;left:1910.64px;">contient</span>
<svg class="a" style="left:2211.6px;top:788.8px;" width="14" height="8.2" viewBox="0 0 14 8.2"><path d="M0.5 0 H13.5 L7 8.2 Z" fill="#333"/></svg>
<div class="a" style="left:2230.6px;top:774px;width:35.4px;height:38px;background:#fff;border-radius:6px;"></div>
<svg class="a" style="left:2239.4px;top:780.4px;" width="20.4" height="26" viewBox="0 0 20.4 26"><g transform="scale(1.074,1.106)"><path d="M6.500 0 H12.500 Q14 0 14 1.500 V3 H19 V5.600 H0 V3 H5 V1.500 Q5 0 6.500 0 Z M7 1.700 V3 H12 V1.700 Z" fill="#333" fill-rule="evenodd"/><path d="M1.200 7 H17.800 V21 Q17.800 23.500 15.300 23.500 H3.700 Q1.200 23.500 1.200 21 Z" fill="#333"/><path d="M6.300 11.300 L12.700 18.700 M12.700 11.300 L6.300 18.700" stroke="#fff" stroke-width="2.100" stroke-linecap="round"/></g></svg>
<span class="t" style="top:843.45px;font-size:22.5px;color:#444;letter-spacing:0.499px;left:1710.50px;">Valeur</span>
<div class="a" style="left:1896.4px;top:832px;width:349.4px;height:45.4px;background:#ececec;border-radius:9px;"></div>
<span class="t" style="top:843.45px;font-size:22.5px;color:#333;-webkit-text-stroke:0.3px #333;letter-spacing:-0.528px;left:1909.75px;">Piece01</span>
<svg class="a" style="left:2211.6px;top:851px;" width="14" height="8.2" viewBox="0 0 14 8.2"><path d="M0.5 0 H13.5 L7 8.2 Z" fill="#333"/></svg>
<div class="a" style="left:1845.2px;top:917.5px;width:258.7px;height:44.8px;background:#f1f1f1;border-radius:11px;"></div>
<div class="a" style="left:1981px;top:923.4px;width:117.9px;height:34.2px;background:#fff;border-radius:6px;"></div>
<span class="t" style="top:929.53px;font-size:23px;color:#444;letter-spacing:2.364px;left:1911.12px;transform:translateX(-50%);">OU</span>
<span class="t" style="top:929.53px;font-size:23px;color:#7b83eb;-webkit-text-stroke:0.7px #7b83eb;letter-spacing:-1.476px;left:2038.08px;transform:translateX(-50%);">ET</span>
<span class="t" style="top:1013.85px;font-size:22.5px;color:#444;letter-spacing:0.515px;left:1709.46px;">Cible</span>
<div class="a" style="left:1896.4px;top:1002.4px;width:291.2px;height:46.6px;background:#f1f1f1;border-radius:9px;"></div>
<span class="t" style="top:1014.53px;font-size:23px;color:#7b83eb;-webkit-text-stroke:0.7px #7b83eb;letter-spacing:-0.150px;left:1909.71px;">Drop02 / Glissable(s) ...</span>
<svg class="a" style="left:2158.3px;top:1019.8px;" width="12.4" height="12.4" viewBox="0 0 12.4 12.4"><path d="M1.3 1.3 L11.1 11.1 M11.1 1.3 L1.3 11.1" stroke="#333" stroke-width="2.6" stroke-linecap="round"/></svg>
<div class="a" style="left:2199.3px;top:1002.4px;width:46.5px;height:46.6px;background:#f1f1f1;border-radius:9px;"></div>
<svg class="a" style="left:2215px;top:1021.2px;" width="14" height="8.2" viewBox="0 0 14 8.2"><path d="M0.5 0 H13.5 L7 8.2 Z" fill="#333"/></svg>
<div class="a" style="left:1896.4px;top:1063.8px;width:349.4px;height:3.6px;overflow:hidden"><div class="a" style="left:0;top:0;width:349.4px;height:46px;background:#f1f1f1;border-radius:9px"></div></div>
<div class="a" style="left:1696px;top:1087.2px;width:588px;height:57.8px;background:#90e0c8;border-radius:9px;"></div>
<span class="t" style="top:1104.34px;font-size:25px;color:rgba(255,255,255,0.62);font-weight:700;letter-spacing:-0.408px;left:1989.90px;transform:translateX(-50%);">Valider</span>
<div class="a" style="left:2348.4px;top:284px;width:543.6px;height:1616px;background:#fff;"></div>
<div class="a" style="left:2348.4px;top:284px;width:1.6px;height:1616px;background:#e5e5e5;"></div>
<div class="a" style="left:2350px;top:282px;width:271px;height:4px;background:#7b82ea;"></div>
<div class="a" style="left:2621px;top:282px;width:271px;height:1.6px;background:#e5e5e5;"></div>
<div class="a" style="left:2621px;top:284px;width:1.6px;height:77px;background:#dddddd;"></div>
<div class="a" style="left:2621px;top:359.4px;width:271px;height:1.6px;background:#dddddd;"></div>
<span class="t" style="top:312.71px;font-size:23.5px;color:#444;-webkit-text-stroke:0.75px #444;letter-spacing:-1.431px;left:2415.47px;">PROPRIÉTÉS</span>
<span class="t" style="top:312.71px;font-size:23.5px;color:#9a9a9a;letter-spacing:-0.591px;left:2689.75px;">ACTIONS</span>
<div class="a" style="left:2803px;top:310.4px;width:28.8px;height:25.8px;background:#444;border-radius:6px;"></div>
<span class="t" style="top:313.72px;font-size:21px;color:#fff;font-weight:700;left:2817.03px;transform:translateX(-50%);">1</span>
<div class="a" style="left:2868.7px;top:368.4px;width:15.3px;height:1525.6px;background:#fafafa;border-radius:7.5px;"></div>
<span class="t" style="top:396.81px;font-size:25.5px;color:#3d3d3d;-webkit-text-stroke:1px #3d3d3d;letter-spacing:1.738px;left:2365.21px;">Condition</span>
<svg class="a" style="left:2498px;top:396.7px;" width="25" height="25" viewBox="0 0 25 25"><circle cx="12.5" cy="12.5" r="10.4" fill="none" stroke="#444" stroke-width="2.2"/></svg>
<span class="t" style="top:402.16px;font-size:16px;color:#444;font-weight:700;left:2510.59px;transform:translateX(-50%);">?</span>
<span class="t" style="top:465.55px;font-size:22.5px;color:#444;letter-spacing:0.547px;left:2388.56px;">Conditions</span>
<span class="t" style="top:524.73px;font-size:24.3px;color:#444;letter-spacing:0.192px;left:2398.75px;">All dropped?</span>
<div class="a" style="left:2383.3px;top:582.2px;width:469.4px;height:45.8px;background:#f1f1f1;border-radius:9px;"></div>
<svg class="a" style="left:2559.6px;top:594.4px;" width="22" height="22" viewBox="0 0 22 22"><path d="M11 0.8 V21.200 M0.800 11 H21.200" stroke="#3d3d3d" stroke-width="3" stroke-linecap="round"/></svg>
<span class="t" style="top:594.65px;font-size:22.5px;color:#3d3d3d;-webkit-text-stroke:0.8px #3d3d3d;letter-spacing:1.303px;left:2598.86px;">Ajouter</span>
</div></body></html>
